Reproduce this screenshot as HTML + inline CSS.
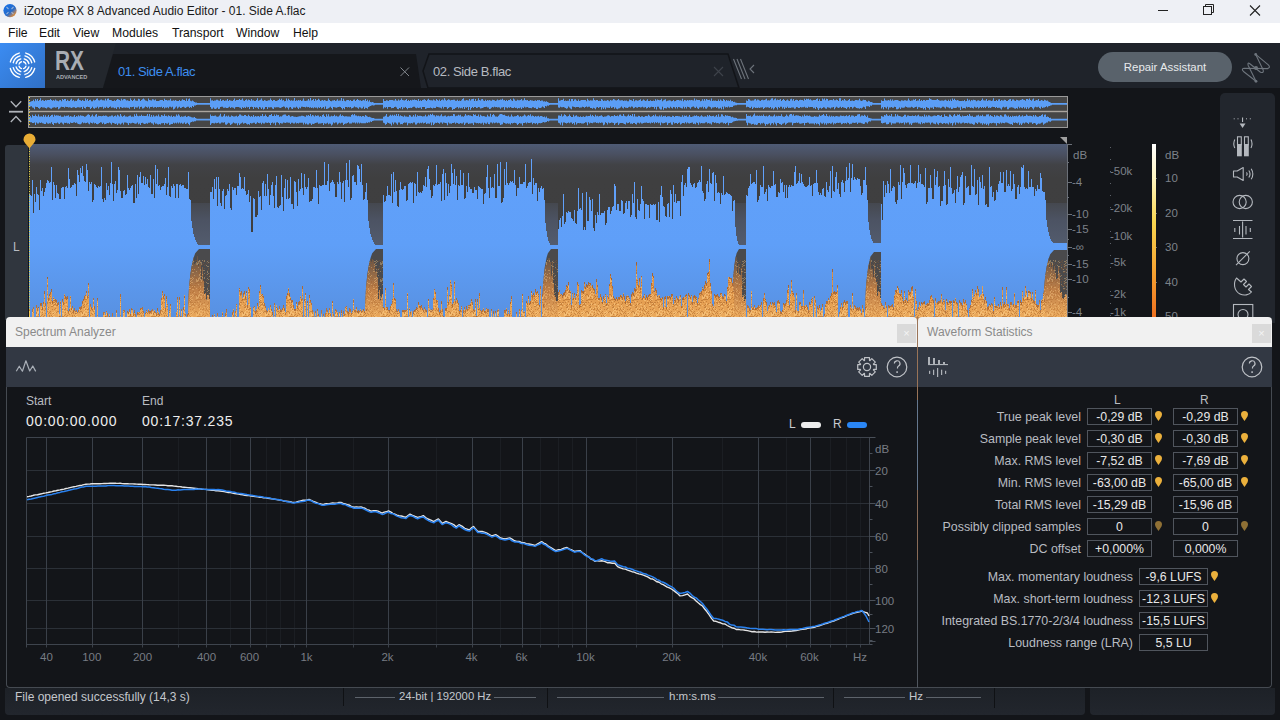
<!DOCTYPE html>
<html><head><meta charset="utf-8">
<style>
*{margin:0;padding:0;box-sizing:border-box}
html,body{width:1280px;height:720px;overflow:hidden;background:#131519;font-family:"Liberation Sans",sans-serif}
.a{position:absolute}
#title{left:0;top:0;width:1280px;height:23px;background:#eef0f5;color:#1a1a1a;font-size:12px}
#menu{left:0;top:23px;width:1280px;height:20px;background:#fff;color:#111;font-size:12.2px}
#menu span{position:absolute;top:3px}
#hdr{left:0;top:43px;width:1280px;height:45px;background:#1f232a}
.ptitle{background:#f1f1f1;color:#8a8a8a;font-size:12px}
.ptool{background:#323843}
.pbody{background:#131519}
.lbl{position:absolute;color:#b9bcc1;font-size:12.4px;text-align:right;white-space:nowrap}
.box{position:absolute;border:1px solid #50555d;color:#e8e8e8;font-size:12.3px;text-align:center;height:17px;line-height:16px;background:#131519}
</style></head><body>
<div id="title" class="a">
  <span class="a" style="left:24px;top:4px">iZotope RX 8 Advanced Audio Editor - 01. Side A.flac</span>
</div>
<div id="menu" class="a">
  <span style="left:8px">File</span><span style="left:39px">Edit</span><span style="left:73px">View</span><span style="left:112px">Modules</span><span style="left:172px">Transport</span><span style="left:236px">Window</span><span style="left:293px">Help</span>
</div>
<div id="hdr" class="a"></div>
<!-- title icon -->
<svg class="a" style="left:0;top:0" width="22" height="22" viewBox="0 0 22 22"><defs><linearGradient id="ti" x1="0.2" y1="0.2" x2="0.85" y2="0.9"><stop offset="0" stop-color="#1a6fe0"/><stop offset="0.55" stop-color="#2a6cc8"/><stop offset="0.8" stop-color="#a08070"/><stop offset="1" stop-color="#e88a20"/></linearGradient></defs>
<circle cx="10" cy="10.6" r="6.6" fill="url(#ti)"/><g stroke="#c8d0dc" stroke-width="1.1" opacity="0.7" fill="none"><path d="M6.5 7 L8.5 9 M13.5 7 L11.5 9 M6.5 14.2 L8.5 12.2 M13.5 14.2 L11.5 12.2"/></g></svg>
<svg class="a" style="left:1150px;top:0" width="130" height="22" viewBox="1150 0 130 22">
<line x1="1158" y1="10.5" x2="1168" y2="10.5" stroke="#222" stroke-width="1"/>
<rect x="1203.5" y="6.5" width="8" height="8" fill="none" stroke="#222" stroke-width="1"/>
<path d="M1205.5 6.5 V4.5 H1213.5 V12.5 H1211.5" fill="none" stroke="#222" stroke-width="1"/>
<path d="M1250 5.5 L1260 15.5 M1260 5.5 L1250 15.5" stroke="#222" stroke-width="1.1"/>
</svg>
<!-- logo -->
<div class="a" style="left:0;top:43px;width:45px;height:45px;background:linear-gradient(135deg,#3b8cf2,#3070c6)"></div>
<svg class="a" style="left:0;top:43px" width="45" height="45" viewBox="0 0 45 45"><g fill="none" stroke="#fff" stroke-width="1.35" stroke-linecap="round"><path d="M25.94 21.15 A3.6 3.6 0 0 0 23.55 18.76"/><path d="M21.45 18.76 A3.6 3.6 0 0 0 19.06 21.15"/><path d="M19.06 23.25 A3.6 3.6 0 0 0 21.45 25.64"/><path d="M23.55 25.64 A3.6 3.6 0 0 0 25.94 23.25"/><path d="M28.88 20.49 A6.6 6.6 0 0 0 24.21 15.82"/><path d="M20.79 15.82 A6.6 6.6 0 0 0 16.12 20.49"/><path d="M16.12 23.91 A6.6 6.6 0 0 0 20.79 28.58"/><path d="M24.21 28.58 A6.6 6.6 0 0 0 28.88 23.91"/><path d="M31.77 19.72 A9.6 9.6 0 0 0 24.98 12.93"/><path d="M20.02 12.93 A9.6 9.6 0 0 0 13.23 19.72"/><path d="M13.23 24.68 A9.6 9.6 0 0 0 20.02 31.47"/><path d="M24.98 31.47 A9.6 9.6 0 0 0 31.77 24.68"/><path d="M34.67 18.94 A12.6 12.6 0 0 0 25.76 10.03"/><path d="M19.24 10.03 A12.6 12.6 0 0 0 10.33 18.94"/><path d="M10.33 25.46 A12.6 12.6 0 0 0 19.24 34.37"/><path d="M25.76 34.37 A12.6 12.6 0 0 0 34.67 25.46"/></g></svg>
<!-- RX panel -->
<svg class="a" style="left:45px;top:43px" width="720" height="45" viewBox="45 43 720 45">
<polygon points="45,43 116,43 103,88 45,88" fill="#23272d"/>
<polygon points="113,54 416,54 421,88 103,88" fill="#15171b"/>
<polygon points="429,54 728,54 739,88 428,88 423,71" fill="#1f232a" stroke="#121418" stroke-width="1.5"/>
<g stroke="#80858b" stroke-width="1"><path d="M400.5 67.5 L409 76 M409 67.5 L400.5 76"/></g>
<g stroke="#3e434b" stroke-width="1.1"><path d="M714 67 L723 76 M723 67 L714 76"/></g>
<g stroke="#6d737b" stroke-width="1.1"><path d="M733.5 59 L741.5 79 M737 59 L745 79 M740.5 59 L748.5 79"/><path d="M754 65 L750 69 L754 73" fill="none"/></g>
</svg>
<div class="a" style="left:55px;top:47px;color:#a9adb3;font-weight:bold;font-size:27.5px;line-height:27px;transform:scaleX(0.76);transform-origin:0 0">RX</div>
<div class="a" style="left:56px;top:74px;color:#a9adb3;font-weight:bold;font-size:6px;line-height:7px;transform:scaleX(0.93);transform-origin:0 0">ADVANCED</div>
<div class="a" style="left:118px;top:64px;color:#3d8ef0;font-size:13px;letter-spacing:-0.4px">01. Side A.flac</div>
<div class="a" style="left:433px;top:64px;color:#b7bbc1;font-size:13px;letter-spacing:-0.4px">02. Side B.flac</div>
<div class="a" style="left:1098px;top:52px;width:134px;height:30px;border-radius:15px;background:#59626b;color:#e8eaec;font-size:11.4px;text-align:center;line-height:31px">Repair Assistant</div>
<svg class="a" style="left:1236px;top:48px" width="40" height="40" viewBox="1236 48 40 40">
<g fill="none" stroke="#6e757d" stroke-width="1.1" stroke-linejoin="round">
<path d="M1255.7 54.4 L1268.3 64.8 Q1271 67.6 1267.5 68.6 L1244 68.2 Q1241 68.6 1243.5 71.5 L1256 81.3"/>
<path d="M1255.7 54.4 L1263.2 70 Q1264 73.5 1260.5 72.2 L1249.5 63.5 Q1247.3 62 1248.2 65.5 L1256 81.3"/>
</g>
<g fill="#6e757d"><circle cx="1256" cy="68" r="2"/><circle cx="1255.7" cy="54.4" r="1.4"/><circle cx="1256" cy="81.3" r="1.4"/></g>
</svg>
<svg class="a" style="left:0;top:0" width="1280" height="330" viewBox="0 0 1280 330">
<defs>
<linearGradient id="bg" x1="0" y1="144" x2="0" y2="317" gradientUnits="userSpaceOnUse">
<stop offset="0" stop-color="#4f5b75"/><stop offset="0.06" stop-color="#4a5061"/><stop offset="0.12" stop-color="#414246"/><stop offset="0.2" stop-color="#3f3f40"/><stop offset="1" stop-color="#3e3e3f"/></linearGradient>
<linearGradient id="blu" x1="0" y1="144" x2="0" y2="317" gradientUnits="userSpaceOnUse">
<stop offset="0" stop-color="#61a1fb"/><stop offset="0.58" stop-color="#5f9ff8"/><stop offset="1" stop-color="#5891e2"/></linearGradient>
<linearGradient id="ugr" x1="0" y1="203" x2="0" y2="246" gradientUnits="userSpaceOnUse">
<stop offset="0" stop-color="#45484f"/><stop offset="0.4" stop-color="#4c5363"/><stop offset="1" stop-color="#535c6e"/></linearGradient>
<linearGradient id="org" x1="0" y1="270" x2="0" y2="317" gradientUnits="userSpaceOnUse">
<stop offset="0" stop-color="#a0643a"/><stop offset="1" stop-color="#b87640"/></linearGradient>
<linearGradient id="org2" x1="0" y1="270" x2="0" y2="317" gradientUnits="userSpaceOnUse">
<stop offset="0" stop-color="#d68c44"/><stop offset="0.6" stop-color="#e49d50"/><stop offset="1" stop-color="#eaa95c"/></linearGradient>
<linearGradient id="worg" x1="0" y1="249" x2="0" y2="317" gradientUnits="userSpaceOnUse">
<stop offset="0" stop-color="#4e4a48"/><stop offset="0.25" stop-color="#7a5e48"/><stop offset="0.6" stop-color="#c08048"/><stop offset="1" stop-color="#eaa85c"/></linearGradient>
<pattern id="spk" width="23" height="17" patternUnits="userSpaceOnUse"><rect x="0" y="0" width="1" height="1" fill="#ffd48e" opacity="0.5"/><rect x="5" y="0" width="1" height="1" fill="#a05a22" opacity="0.45"/><rect x="6" y="0" width="1" height="1" fill="#a05a22" opacity="0.45"/><rect x="8" y="0" width="1" height="1" fill="#ffd48e" opacity="0.5"/><rect x="9" y="0" width="1" height="1" fill="#ffd48e" opacity="0.5"/><rect x="15" y="0" width="1" height="1" fill="#a05a22" opacity="0.45"/><rect x="21" y="0" width="1" height="1" fill="#a05a22" opacity="0.45"/><rect x="1" y="1" width="1" height="1" fill="#ffd48e" opacity="0.5"/><rect x="2" y="1" width="1" height="1" fill="#a05a22" opacity="0.45"/><rect x="14" y="1" width="1" height="1" fill="#a05a22" opacity="0.45"/><rect x="15" y="1" width="1" height="1" fill="#a05a22" opacity="0.45"/><rect x="16" y="1" width="1" height="1" fill="#ffd48e" opacity="0.5"/><rect x="20" y="1" width="1" height="1" fill="#ffd48e" opacity="0.5"/><rect x="0" y="2" width="1" height="1" fill="#ffd48e" opacity="0.5"/><rect x="9" y="2" width="1" height="1" fill="#a05a22" opacity="0.45"/><rect x="15" y="2" width="1" height="1" fill="#ffd48e" opacity="0.5"/><rect x="18" y="2" width="1" height="1" fill="#ffd48e" opacity="0.5"/><rect x="19" y="2" width="1" height="1" fill="#a05a22" opacity="0.45"/><rect x="22" y="2" width="1" height="1" fill="#a05a22" opacity="0.45"/><rect x="2" y="3" width="1" height="1" fill="#a05a22" opacity="0.45"/><rect x="3" y="3" width="1" height="1" fill="#ffd48e" opacity="0.5"/><rect x="6" y="3" width="1" height="1" fill="#a05a22" opacity="0.45"/><rect x="8" y="3" width="1" height="1" fill="#a05a22" opacity="0.45"/><rect x="10" y="3" width="1" height="1" fill="#ffd48e" opacity="0.5"/><rect x="15" y="3" width="1" height="1" fill="#ffd48e" opacity="0.5"/><rect x="16" y="3" width="1" height="1" fill="#a05a22" opacity="0.45"/><rect x="18" y="3" width="1" height="1" fill="#a05a22" opacity="0.45"/><rect x="19" y="3" width="1" height="1" fill="#a05a22" opacity="0.45"/><rect x="22" y="3" width="1" height="1" fill="#a05a22" opacity="0.45"/><rect x="0" y="4" width="1" height="1" fill="#a05a22" opacity="0.45"/><rect x="2" y="4" width="1" height="1" fill="#ffd48e" opacity="0.5"/><rect x="16" y="4" width="1" height="1" fill="#ffd48e" opacity="0.5"/><rect x="17" y="4" width="1" height="1" fill="#ffd48e" opacity="0.5"/><rect x="21" y="4" width="1" height="1" fill="#a05a22" opacity="0.45"/><rect x="1" y="5" width="1" height="1" fill="#a05a22" opacity="0.45"/><rect x="4" y="5" width="1" height="1" fill="#a05a22" opacity="0.45"/><rect x="8" y="5" width="1" height="1" fill="#ffd48e" opacity="0.5"/><rect x="11" y="5" width="1" height="1" fill="#a05a22" opacity="0.45"/><rect x="12" y="5" width="1" height="1" fill="#a05a22" opacity="0.45"/><rect x="15" y="5" width="1" height="1" fill="#ffd48e" opacity="0.5"/><rect x="18" y="5" width="1" height="1" fill="#ffd48e" opacity="0.5"/><rect x="20" y="5" width="1" height="1" fill="#ffd48e" opacity="0.5"/><rect x="0" y="6" width="1" height="1" fill="#ffd48e" opacity="0.5"/><rect x="3" y="6" width="1" height="1" fill="#a05a22" opacity="0.45"/><rect x="6" y="6" width="1" height="1" fill="#ffd48e" opacity="0.5"/><rect x="7" y="6" width="1" height="1" fill="#ffd48e" opacity="0.5"/><rect x="9" y="6" width="1" height="1" fill="#ffd48e" opacity="0.5"/><rect x="10" y="6" width="1" height="1" fill="#a05a22" opacity="0.45"/><rect x="13" y="6" width="1" height="1" fill="#a05a22" opacity="0.45"/><rect x="14" y="6" width="1" height="1" fill="#ffd48e" opacity="0.5"/><rect x="15" y="6" width="1" height="1" fill="#ffd48e" opacity="0.5"/><rect x="19" y="6" width="1" height="1" fill="#a05a22" opacity="0.45"/><rect x="20" y="6" width="1" height="1" fill="#ffd48e" opacity="0.5"/><rect x="1" y="7" width="1" height="1" fill="#ffd48e" opacity="0.5"/><rect x="2" y="7" width="1" height="1" fill="#a05a22" opacity="0.45"/><rect x="4" y="7" width="1" height="1" fill="#a05a22" opacity="0.45"/><rect x="7" y="7" width="1" height="1" fill="#a05a22" opacity="0.45"/><rect x="8" y="7" width="1" height="1" fill="#ffd48e" opacity="0.5"/><rect x="12" y="7" width="1" height="1" fill="#ffd48e" opacity="0.5"/><rect x="13" y="7" width="1" height="1" fill="#a05a22" opacity="0.45"/><rect x="14" y="7" width="1" height="1" fill="#ffd48e" opacity="0.5"/><rect x="16" y="7" width="1" height="1" fill="#ffd48e" opacity="0.5"/><rect x="17" y="7" width="1" height="1" fill="#ffd48e" opacity="0.5"/><rect x="22" y="7" width="1" height="1" fill="#a05a22" opacity="0.45"/><rect x="0" y="8" width="1" height="1" fill="#a05a22" opacity="0.45"/><rect x="7" y="8" width="1" height="1" fill="#ffd48e" opacity="0.5"/><rect x="12" y="8" width="1" height="1" fill="#ffd48e" opacity="0.5"/><rect x="13" y="8" width="1" height="1" fill="#ffd48e" opacity="0.5"/><rect x="14" y="8" width="1" height="1" fill="#ffd48e" opacity="0.5"/><rect x="15" y="8" width="1" height="1" fill="#a05a22" opacity="0.45"/><rect x="17" y="8" width="1" height="1" fill="#ffd48e" opacity="0.5"/><rect x="19" y="8" width="1" height="1" fill="#a05a22" opacity="0.45"/><rect x="3" y="9" width="1" height="1" fill="#a05a22" opacity="0.45"/><rect x="5" y="9" width="1" height="1" fill="#a05a22" opacity="0.45"/><rect x="6" y="9" width="1" height="1" fill="#ffd48e" opacity="0.5"/><rect x="12" y="9" width="1" height="1" fill="#ffd48e" opacity="0.5"/><rect x="13" y="9" width="1" height="1" fill="#ffd48e" opacity="0.5"/><rect x="17" y="9" width="1" height="1" fill="#ffd48e" opacity="0.5"/><rect x="18" y="9" width="1" height="1" fill="#a05a22" opacity="0.45"/><rect x="21" y="9" width="1" height="1" fill="#a05a22" opacity="0.45"/><rect x="3" y="10" width="1" height="1" fill="#a05a22" opacity="0.45"/><rect x="6" y="10" width="1" height="1" fill="#a05a22" opacity="0.45"/><rect x="7" y="10" width="1" height="1" fill="#ffd48e" opacity="0.5"/><rect x="8" y="10" width="1" height="1" fill="#ffd48e" opacity="0.5"/><rect x="13" y="10" width="1" height="1" fill="#a05a22" opacity="0.45"/><rect x="14" y="10" width="1" height="1" fill="#a05a22" opacity="0.45"/><rect x="15" y="10" width="1" height="1" fill="#a05a22" opacity="0.45"/><rect x="16" y="10" width="1" height="1" fill="#a05a22" opacity="0.45"/><rect x="17" y="10" width="1" height="1" fill="#a05a22" opacity="0.45"/><rect x="20" y="10" width="1" height="1" fill="#a05a22" opacity="0.45"/><rect x="22" y="10" width="1" height="1" fill="#ffd48e" opacity="0.5"/><rect x="0" y="11" width="1" height="1" fill="#ffd48e" opacity="0.5"/><rect x="1" y="11" width="1" height="1" fill="#ffd48e" opacity="0.5"/><rect x="5" y="11" width="1" height="1" fill="#a05a22" opacity="0.45"/><rect x="6" y="11" width="1" height="1" fill="#ffd48e" opacity="0.5"/><rect x="7" y="11" width="1" height="1" fill="#a05a22" opacity="0.45"/><rect x="11" y="11" width="1" height="1" fill="#a05a22" opacity="0.45"/><rect x="12" y="11" width="1" height="1" fill="#a05a22" opacity="0.45"/><rect x="3" y="12" width="1" height="1" fill="#ffd48e" opacity="0.5"/><rect x="6" y="12" width="1" height="1" fill="#a05a22" opacity="0.45"/><rect x="14" y="12" width="1" height="1" fill="#ffd48e" opacity="0.5"/><rect x="16" y="12" width="1" height="1" fill="#a05a22" opacity="0.45"/><rect x="1" y="13" width="1" height="1" fill="#a05a22" opacity="0.45"/><rect x="3" y="13" width="1" height="1" fill="#a05a22" opacity="0.45"/><rect x="4" y="13" width="1" height="1" fill="#a05a22" opacity="0.45"/><rect x="6" y="13" width="1" height="1" fill="#a05a22" opacity="0.45"/><rect x="7" y="13" width="1" height="1" fill="#a05a22" opacity="0.45"/><rect x="8" y="13" width="1" height="1" fill="#a05a22" opacity="0.45"/><rect x="10" y="13" width="1" height="1" fill="#a05a22" opacity="0.45"/><rect x="11" y="13" width="1" height="1" fill="#a05a22" opacity="0.45"/><rect x="13" y="13" width="1" height="1" fill="#a05a22" opacity="0.45"/><rect x="20" y="13" width="1" height="1" fill="#a05a22" opacity="0.45"/><rect x="1" y="14" width="1" height="1" fill="#a05a22" opacity="0.45"/><rect x="4" y="14" width="1" height="1" fill="#a05a22" opacity="0.45"/><rect x="5" y="14" width="1" height="1" fill="#ffd48e" opacity="0.5"/><rect x="8" y="14" width="1" height="1" fill="#ffd48e" opacity="0.5"/><rect x="9" y="14" width="1" height="1" fill="#a05a22" opacity="0.45"/><rect x="10" y="14" width="1" height="1" fill="#ffd48e" opacity="0.5"/><rect x="16" y="14" width="1" height="1" fill="#ffd48e" opacity="0.5"/><rect x="18" y="14" width="1" height="1" fill="#a05a22" opacity="0.45"/><rect x="0" y="15" width="1" height="1" fill="#a05a22" opacity="0.45"/><rect x="8" y="15" width="1" height="1" fill="#a05a22" opacity="0.45"/><rect x="9" y="15" width="1" height="1" fill="#a05a22" opacity="0.45"/><rect x="15" y="15" width="1" height="1" fill="#a05a22" opacity="0.45"/><rect x="16" y="15" width="1" height="1" fill="#ffd48e" opacity="0.5"/><rect x="17" y="15" width="1" height="1" fill="#a05a22" opacity="0.45"/><rect x="19" y="15" width="1" height="1" fill="#ffd48e" opacity="0.5"/><rect x="20" y="15" width="1" height="1" fill="#ffd48e" opacity="0.5"/><rect x="0" y="16" width="1" height="1" fill="#ffd48e" opacity="0.5"/><rect x="5" y="16" width="1" height="1" fill="#ffd48e" opacity="0.5"/><rect x="6" y="16" width="1" height="1" fill="#ffd48e" opacity="0.5"/><rect x="7" y="16" width="1" height="1" fill="#a05a22" opacity="0.45"/><rect x="10" y="16" width="1" height="1" fill="#a05a22" opacity="0.45"/><rect x="12" y="16" width="1" height="1" fill="#ffd48e" opacity="0.5"/><rect x="14" y="16" width="1" height="1" fill="#a05a22" opacity="0.45"/></pattern>
<clipPath id="wclip"><path d="M199,249 L210,249 L210,317 L188,317 L188.0,317.0 L188.0,312.8 L188.1,308.5 L188.2,304.2 L188.3,300.0 L188.6,295.8 L188.8,291.5 L189.1,287.2 L189.5,283.0 L189.9,278.8 L190.4,274.5 L191.0,270.2 L191.7,266.0 L192.6,261.8 L193.7,257.5 L195.2,253.2 L199.0,249.0 ZM376,249 L383,249 L383,317 L365,317 L365.0,317.0 L365.0,312.8 L365.1,308.5 L365.2,304.2 L365.3,300.0 L365.6,295.8 L365.8,291.5 L366.1,287.2 L366.5,283.0 L366.9,278.8 L367.4,274.5 L368.0,270.2 L368.7,266.0 L369.6,261.8 L370.7,257.5 L372.2,253.2 L376.0,249.0 ZM551,249 L558,249 L558,317 L542,317 L542.0,317.0 L542.0,312.8 L542.1,308.5 L542.2,304.2 L542.3,300.0 L542.5,295.8 L542.7,291.5 L542.9,287.2 L543.2,283.0 L543.6,278.8 L544.0,274.5 L544.5,270.2 L545.0,266.0 L545.8,261.8 L546.6,257.5 L547.9,253.2 L551.0,249.0 ZM739,249 L746,249 L746,317 L732,317 L732.0,317.0 L732.0,312.8 L732.1,308.5 L732.1,304.2 L732.2,300.0 L732.4,295.8 L732.5,291.5 L732.7,287.2 L732.9,283.0 L733.2,278.8 L733.5,274.5 L733.9,270.2 L734.4,266.0 L734.9,261.8 L735.6,257.5 L736.6,253.2 L739.0,249.0 ZM874,252 L881,252 L881,317 L865,317 L865.0,317.0 L865.0,312.9 L865.1,308.9 L865.2,304.8 L865.3,300.8 L865.5,296.7 L865.7,292.6 L865.9,288.6 L866.2,284.5 L866.6,280.4 L867.0,276.4 L867.5,272.3 L868.0,268.2 L868.8,264.2 L869.6,260.1 L870.9,256.1 L874.0,252.0 ZM1054,250 L1067,250 L1067,317 L1043,317 L1043.0,317.0 L1043.0,312.8 L1043.1,308.6 L1043.2,304.4 L1043.3,300.2 L1043.6,296.1 L1043.8,291.9 L1044.1,287.7 L1044.5,283.5 L1044.9,279.3 L1045.4,275.1 L1046.0,270.9 L1046.7,266.8 L1047.6,262.6 L1048.7,258.4 L1050.2,254.2 L1054.0,250.0 Z"/></clipPath>
<clipPath id="oclip"><path d="M29,317V309h1V317zM32,317V309h1V317zM33,317V307h1V317zM36,317V305h1V317zM37,317V308h1V317zM38,317V307h1V317zM40,317V303h1V317zM41,317V303h1V317zM42,317V307h1V317zM43,317V302h1V317zM44,317V291h1V317zM45,317V303h1V317zM47,317V277h1V317zM48,317V298h1V317zM49,317V294h1V317zM50,317V292h1V317zM51,317V289h1V317zM52,317V301h1V317zM53,317V297h1V317zM54,317V299h1V317zM55,317V299h1V317zM56,317V300h1V317zM57,317V303h1V317zM58,317V302h1V317zM59,317V314h1V317zM60,317V301h1V317zM62,317V299h1V317zM63,317V302h1V317zM64,317V294h1V317zM65,317V296h1V317zM66,317V297h1V317zM67,317V296h1V317zM68,317V311h1V317zM69,317V308h1V317zM70,317V296h1V317zM71,317V308h1V317zM72,317V306h1V317zM73,317V310h1V317zM74,317V308h1V317zM75,317V311h1V317zM76,317V310h1V317zM77,317V312h1V317zM78,317V310h1V317zM79,317V307h1V317zM80,317V307h1V317zM81,317V306h1V317zM82,317V301h1V317zM83,317V299h1V317zM84,317V296h1V317zM85,317V295h1V317zM86,317V291h1V317zM87,317V296h1V317zM88,317V283h1V317zM90,317V304h1V317zM91,317V307h1V317zM92,317V308h1V317zM93,317V298h1V317zM94,317V306h1V317zM97,317V298h1V317zM103,317V312h1V317zM104,317V312h1V317zM105,317V315h1V317zM106,317V311h1V317zM107,317V313h1V317zM109,317V314h1V317zM112,317V313h1V317zM116,317V310h1V317zM120,317V294h1V317zM123,317V310h1V317zM124,317V310h1V317zM127,317V311h1V317zM128,317V312h1V317zM129,317V309h1V317zM130,317V314h1V317zM131,317V308h1V317zM132,317V309h1V317zM133,317V313h1V317zM134,317V310h1V317zM135,317V314h1V317zM137,317V312h1V317zM138,317V312h1V317zM139,317V312h1V317zM140,317V308h1V317zM141,317V308h1V317zM142,317V307h1V317zM143,317V311h1V317zM145,317V313h1V317zM146,317V310h1V317zM147,317V312h1V317zM148,317V309h1V317zM149,317V311h1V317zM150,317V311h1V317zM151,317V310h1V317zM152,317V309h1V317zM153,317V311h1V317zM154,317V310h1V317zM155,317V312h1V317zM156,317V313h1V317zM157,317V308h1V317zM158,317V312h1V317zM159,317V314h1V317zM160,317V310h1V317zM161,317V298h1V317zM162,317V291h1V317zM163,317V296h1V317zM164,317V294h1V317zM165,317V308h1V317zM166,317V296h1V317zM167,317V304h1V317zM169,317V310h1V317zM170,317V304h1V317zM176,317V312h1V317zM177,317V297h1V317zM179,317V297h1V317zM180,317V316h1V317zM181,317V309h1V317zM183,317V307h1V317zM184,317V295h1V317zM185,317V313h1V317zM187,317V314h1V317zM188,317V313h1V317zM212,317V315h1V317zM214,317V314h1V317zM217,317V313h1V317zM222,317V312h1V317zM225,317V313h1V317zM226,317V309h1V317zM232,317V312h1V317zM233,317V309h1V317zM235,317V311h1V317zM236,317V304h1V317zM239,317V288h1V317zM240,317V292h1V317zM241,317V291h1V317zM242,317V298h1V317zM243,317V293h1V317zM244,317V291h1V317zM245,317V296h1V317zM246,317V291h1V317zM247,317V305h1V317zM248,317V287h1V317zM249,317V289h1V317zM250,317V307h1V317zM253,317V307h1V317zM254,317V306h1V317zM255,317V311h1V317zM256,317V309h1V317zM257,317V303h1V317zM258,317V307h1V317zM259,317V291h1V317zM260,317V285h1V317zM261,317V294h1V317zM262,317V294h1V317zM263,317V296h1V317zM264,317V303h1V317zM265,317V306h1V317zM266,317V310h1V317zM267,317V311h1V317zM268,317V308h1V317zM269,317V310h1V317zM270,317V305h1V317zM271,317V309h1V317zM272,317V312h1V317zM274,317V303h1V317zM276,317V305h1V317zM277,317V308h1V317zM278,317V310h1V317zM279,317V306h1V317zM280,317V309h1V317zM281,317V310h1V317zM282,317V308h1V317zM283,317V305h1V317zM284,317V308h1V317zM285,317V312h1V317zM286,317V296h1V317zM287,317V293h1V317zM288,317V288h1V317zM289,317V293h1V317zM290,317V297h1V317zM291,317V300h1V317zM292,317V300h1V317zM293,317V305h1V317zM294,317V309h1V317zM295,317V309h1V317zM296,317V302h1V317zM297,317V306h1V317zM298,317V302h1V317zM299,317V301h1V317zM300,317V296h1V317zM301,317V299h1V317zM302,317V286h1V317zM304,317V299h1V317zM305,317V293h1V317zM307,317V301h1V317zM309,317V295h1V317zM310,317V300h1V317zM311,317V303h1V317zM312,317V310h1V317zM313,317V312h1V317zM315,317V311h1V317zM317,317V309h1V317zM318,317V314h1V317zM321,317V310h1V317zM323,317V314h1V317zM325,317V313h1V317zM326,317V308h1V317zM327,317V310h1V317zM328,317V313h1V317zM329,317V308h1V317zM330,317V313h1V317zM332,317V301h1V317zM333,317V314h1V317zM335,317V309h1V317zM336,317V310h1V317zM337,317V312h1V317zM339,317V312h1V317zM341,317V310h1V317zM343,317V311h1V317zM344,317V314h1V317zM345,317V307h1V317zM346,317V306h1V317zM347,317V311h1V317zM348,317V312h1V317zM349,317V308h1V317zM350,317V309h1V317zM351,317V313h1V317zM352,317V311h1V317zM353,317V299h1V317zM354,317V310h1V317zM355,317V309h1V317zM356,317V307h1V317zM357,317V311h1V317zM358,317V310h1V317zM359,317V311h1V317zM360,317V309h1V317zM361,317V311h1V317zM362,317V310h1V317zM363,317V309h1V317zM364,317V311h1V317zM365,317V312h1V317zM366,317V309h1V317zM383,317V307h1V317zM384,317V308h1V317zM385,317V288h1V317zM386,317V307h1V317zM387,317V307h1V317zM388,317V310h1V317zM389,317V310h1V317zM390,317V306h1V317zM391,317V304h1V317zM392,317V299h1V317zM393,317V283h1V317zM394,317V298h1V317zM395,317V299h1V317zM396,317V309h1V317zM397,317V311h1V317zM398,317V309h1V317zM399,317V312h1V317zM402,317V310h1V317zM403,317V310h1V317zM404,317V310h1V317zM405,317V310h1V317zM406,317V310h1V317zM407,317V293h1V317zM409,317V308h1V317zM410,317V312h1V317zM411,317V311h1V317zM413,317V311h1V317zM414,317V310h1V317zM415,317V309h1V317zM416,317V307h1V317zM417,317V308h1V317zM418,317V302h1V317zM419,317V305h1V317zM420,317V306h1V317zM421,317V305h1V317zM422,317V308h1V317zM423,317V310h1V317zM424,317V307h1V317zM425,317V309h1V317zM426,317V310h1V317zM428,317V299h1V317zM429,317V308h1V317zM430,317V310h1V317zM431,317V309h1V317zM432,317V310h1V317zM433,317V298h1V317zM434,317V289h1V317zM435,317V292h1V317zM436,317V300h1V317zM437,317V300h1V317zM438,317V308h1V317zM439,317V312h1V317zM440,317V310h1V317zM441,317V301h1V317zM442,317V309h1V317zM443,317V316h1V317zM445,317V308h1V317zM446,317V308h1V317zM447,317V287h1V317zM448,317V302h1V317zM449,317V295h1V317zM450,317V280h1V317zM451,317V284h1V317zM452,317V304h1V317zM453,317V302h1V317zM454,317V281h1V317zM455,317V301h1V317zM456,317V298h1V317zM457,317V300h1V317zM458,317V303h1V317zM459,317V311h1V317zM460,317V310h1V317zM461,317V306h1V317zM463,317V310h1V317zM464,317V307h1V317zM465,317V310h1V317zM466,317V306h1V317zM467,317V309h1V317zM468,317V305h1V317zM469,317V305h1V317zM470,317V303h1V317zM471,317V299h1V317zM472,317V302h1V317zM473,317V309h1V317zM474,317V310h1V317zM475,317V299h1V317zM476,317V316h1V317zM477,317V299h1V317zM478,317V308h1V317zM479,317V293h1V317zM480,317V310h1V317zM481,317V311h1V317zM482,317V310h1V317zM483,317V308h1V317zM484,317V311h1V317zM485,317V310h1V317zM486,317V308h1V317zM487,317V309h1V317zM488,317V309h1V317zM491,317V309h1V317zM493,317V311h1V317zM495,317V311h1V317zM497,317V310h1V317zM498,317V309h1V317zM504,317V310h1V317zM505,317V310h1V317zM506,317V308h1V317zM507,317V314h1V317zM508,317V310h1V317zM509,317V314h1V317zM510,317V302h1V317zM511,317V296h1V317zM516,317V312h1V317zM519,317V309h1V317zM521,317V310h1V317zM522,317V294h1V317zM523,317V312h1V317zM524,317V311h1V317zM526,317V301h1V317zM527,317V303h1V317zM528,317V296h1V317zM529,317V303h1V317zM530,317V301h1V317zM531,317V291h1V317zM532,317V295h1V317zM533,317V293h1V317zM534,317V295h1V317zM535,317V289h1V317zM536,317V292h1V317zM537,317V291h1V317zM538,317V294h1V317zM539,317V305h1V317zM540,317V286h1V317zM542,317V294h1V317zM543,317V304h1V317zM558,317V292h1V317zM559,317V290h1V317zM560,317V294h1V317zM561,317V294h1V317zM562,317V295h1V317zM563,317V293h1V317zM564,317V292h1V317zM565,317V290h1V317zM566,317V285h1V317zM567,317V286h1V317zM568,317V282h1V317zM569,317V290h1V317zM570,317V291h1V317zM571,317V305h1V317zM572,317V293h1V317zM573,317V298h1V317zM574,317V293h1V317zM575,317V298h1V317zM576,317V294h1V317zM577,317V282h1V317zM578,317V284h1V317zM579,317V305h1V317zM580,317V304h1V317zM581,317V290h1V317zM582,317V291h1V317zM583,317V291h1V317zM584,317V282h1V317zM585,317V287h1V317zM586,317V284h1V317zM587,317V285h1V317zM588,317V282h1V317zM589,317V283h1V317zM590,317V283h1V317zM591,317V286h1V317zM592,317V285h1V317zM593,317V288h1V317zM594,317V289h1V317zM595,317V294h1V317zM596,317V279h1V317zM597,317V285h1V317zM598,317V298h1V317zM599,317V298h1V317zM600,317V294h1V317zM601,317V297h1V317zM602,317V302h1V317zM603,317V296h1V317zM604,317V298h1V317zM605,317V294h1V317zM606,317V303h1V317zM607,317V295h1V317zM608,317V297h1V317zM609,317V284h1V317zM610,317V274h1V317zM611,317V278h1V317zM612,317V286h1V317zM613,317V296h1V317zM614,317V298h1V317zM615,317V299h1V317zM616,317V297h1V317zM617,317V299h1V317zM618,317V297h1V317zM619,317V297h1V317zM620,317V295h1V317zM621,317V295h1V317zM622,317V297h1V317zM623,317V293h1V317zM624,317V296h1V317zM625,317V301h1V317zM626,317V296h1V317zM627,317V295h1V317zM628,317V296h1V317zM629,317V298h1V317zM630,317V303h1V317zM631,317V294h1V317zM632,317V292h1V317zM633,317V293h1V317zM634,317V288h1V317zM635,317V289h1V317zM636,317V262h1V317zM637,317V279h1V317zM638,317V285h1V317zM639,317V278h1V317zM640,317V287h1V317zM641,317V276h1V317zM642,317V298h1V317zM643,317V296h1V317zM644,317V294h1V317zM645,317V298h1V317zM646,317V295h1V317zM647,317V297h1V317zM648,317V295h1V317zM649,317V294h1V317zM650,317V294h1V317zM651,317V283h1V317zM652,317V273h1V317zM653,317V276h1V317zM654,317V291h1V317zM655,317V288h1V317zM656,317V290h1V317zM657,317V296h1V317zM658,317V295h1V317zM659,317V295h1V317zM660,317V298h1V317zM661,317V298h1V317zM662,317V297h1V317zM663,317V307h1V317zM664,317V297h1V317zM665,317V296h1V317zM666,317V307h1V317zM667,317V296h1V317zM668,317V296h1V317zM669,317V296h1V317zM670,317V297h1V317zM671,317V294h1V317zM672,317V294h1V317zM673,317V304h1V317zM674,317V298h1V317zM675,317V300h1V317zM676,317V296h1V317zM677,317V298h1V317zM678,317V299h1V317zM679,317V296h1V317zM680,317V295h1V317zM681,317V306h1V317zM682,317V298h1V317zM683,317V297h1V317zM684,317V297h1V317zM685,317V295h1V317zM686,317V294h1V317zM688,317V293h1V317zM689,317V295h1V317zM690,317V297h1V317zM691,317V295h1V317zM692,317V302h1V317zM693,317V296h1V317zM694,317V295h1V317zM695,317V296h1V317zM696,317V297h1V317zM697,317V303h1V317zM698,317V298h1V317zM699,317V293h1V317zM700,317V292h1V317zM701,317V291h1V317zM702,317V287h1V317zM703,317V289h1V317zM704,317V285h1V317zM705,317V281h1V317zM706,317V283h1V317zM707,317V273h1V317zM708,317V272h1V317zM709,317V259h1V317zM710,317V283h1V317zM711,317V291h1V317zM712,317V304h1V317zM713,317V306h1V317zM714,317V294h1V317zM715,317V295h1V317zM716,317V295h1V317zM717,317V294h1V317zM718,317V296h1V317zM719,317V297h1V317zM720,317V293h1V317zM721,317V293h1V317zM722,317V296h1V317zM723,317V297h1V317zM724,317V294h1V317zM725,317V295h1V317zM726,317V301h1V317zM727,317V287h1V317zM728,317V277h1V317zM729,317V277h1V317zM730,317V278h1V317zM731,317V278h1V317zM732,317V283h1V317zM733,317V290h1V317zM747,317V305h1V317zM748,317V306h1V317zM749,317V308h1V317zM750,317V310h1V317zM751,317V291h1V317zM752,317V307h1V317zM753,317V307h1V317zM754,317V305h1V317zM755,317V308h1V317zM756,317V308h1V317zM757,317V307h1V317zM758,317V305h1V317zM759,317V306h1V317zM760,317V305h1V317zM761,317V302h1V317zM763,317V298h1V317zM764,317V293h1V317zM765,317V299h1V317zM766,317V302h1V317zM767,317V311h1V317zM768,317V306h1V317zM769,317V305h1V317zM770,317V302h1V317zM771,317V305h1V317zM772,317V302h1V317zM773,317V303h1V317zM774,317V302h1V317zM775,317V306h1V317zM776,317V312h1V317zM777,317V301h1V317zM778,317V300h1V317zM779,317V302h1V317zM780,317V311h1V317zM781,317V312h1V317zM782,317V310h1V317zM783,317V303h1V317zM784,317V304h1V317zM785,317V303h1V317zM786,317V300h1V317zM787,317V290h1V317zM788,317V285h1V317zM789,317V305h1V317zM790,317V294h1V317zM791,317V280h1V317zM792,317V291h1V317zM793,317V293h1V317zM794,317V297h1V317zM795,317V310h1V317zM796,317V293h1V317zM797,317V311h1V317zM798,317V311h1V317zM799,317V302h1V317zM800,317V302h1V317zM801,317V306h1V317zM802,317V306h1V317zM803,317V290h1V317zM804,317V306h1V317zM805,317V305h1V317zM806,317V305h1V317zM807,317V307h1V317zM808,317V310h1V317zM809,317V302h1V317zM810,317V304h1V317zM811,317V299h1V317zM812,317V297h1V317zM814,317V296h1V317zM815,317V300h1V317zM817,317V306h1V317zM818,317V308h1V317zM819,317V305h1V317zM820,317V311h1V317zM821,317V308h1V317zM822,317V304h1V317zM824,317V314h1V317zM825,317V304h1V317zM826,317V301h1V317zM827,317V301h1V317zM828,317V298h1V317zM829,317V300h1V317zM830,317V296h1V317zM831,317V293h1V317zM832,317V269h1V317zM833,317V292h1V317zM834,317V291h1V317zM835,317V292h1V317zM836,317V292h1V317zM837,317V285h1V317zM839,317V312h1V317zM840,317V307h1V317zM841,317V303h1V317zM842,317V307h1V317zM843,317V302h1V317zM844,317V300h1V317zM845,317V302h1V317zM846,317V301h1V317zM847,317V301h1V317zM850,317V305h1V317zM851,317V308h1V317zM852,317V293h1V317zM853,317V309h1V317zM854,317V305h1V317zM855,317V306h1V317zM856,317V308h1V317zM857,317V307h1V317zM858,317V308h1V317zM859,317V307h1V317zM860,317V309h1V317zM861,317V313h1V317zM862,317V305h1V317zM863,317V309h1V317zM865,317V307h1V317zM866,317V294h1V317zM881,317V303h1V317zM882,317V305h1V317zM883,317V306h1V317zM884,317V308h1V317zM885,317V302h1V317zM886,317V306h1V317zM888,317V305h1V317zM889,317V306h1V317zM890,317V306h1V317zM891,317V305h1V317zM892,317V304h1V317zM893,317V307h1V317zM894,317V295h1V317zM895,317V290h1V317zM896,317V290h1V317zM897,317V286h1V317zM898,317V288h1V317zM899,317V293h1V317zM900,317V294h1V317zM901,317V290h1V317zM902,317V297h1V317zM903,317V301h1V317zM904,317V291h1V317zM905,317V300h1V317zM906,317V298h1V317zM907,317V301h1V317zM908,317V290h1V317zM909,317V292h1V317zM910,317V292h1V317zM911,317V287h1V317zM912,317V286h1V317zM913,317V296h1V317zM915,317V289h1V317zM916,317V301h1V317zM917,317V310h1V317zM918,317V307h1V317zM919,317V302h1V317zM920,317V306h1V317zM921,317V302h1V317zM922,317V303h1V317zM923,317V302h1V317zM924,317V301h1V317zM925,317V305h1V317zM926,317V304h1V317zM927,317V303h1V317zM928,317V303h1V317zM929,317V300h1V317zM930,317V296h1V317zM931,317V295h1V317zM932,317V298h1V317zM933,317V300h1V317zM935,317V298h1V317zM936,317V303h1V317zM937,317V302h1V317zM938,317V301h1V317zM939,317V301h1V317zM940,317V300h1V317zM941,317V294h1V317zM942,317V302h1V317zM943,317V299h1V317zM944,317V300h1V317zM945,317V310h1V317zM946,317V299h1V317zM947,317V302h1V317zM948,317V303h1V317zM949,317V300h1V317zM950,317V301h1V317zM951,317V301h1V317zM953,317V300h1V317zM954,317V301h1V317zM955,317V298h1V317zM956,317V302h1V317zM957,317V303h1V317zM959,317V300h1V317zM960,317V302h1V317zM961,317V303h1V317zM962,317V305h1V317zM963,317V299h1V317zM964,317V302h1V317zM965,317V300h1V317zM966,317V304h1V317zM967,317V310h1V317zM969,317V308h1V317zM970,317V305h1V317zM971,317V300h1V317zM972,317V289h1V317zM973,317V297h1V317zM974,317V294h1V317zM975,317V290h1V317zM976,317V293h1V317zM977,317V286h1V317zM978,317V289h1V317zM979,317V297h1V317zM980,317V295h1V317zM981,317V294h1V317zM982,317V286h1V317zM983,317V294h1V317zM984,317V300h1V317zM985,317V297h1V317zM986,317V301h1V317zM987,317V307h1V317zM988,317V306h1V317zM989,317V304h1V317zM990,317V305h1V317zM991,317V303h1V317zM992,317V304h1V317zM993,317V311h1V317zM994,317V297h1V317zM995,317V305h1V317zM996,317V306h1V317zM997,317V306h1V317zM998,317V304h1V317zM999,317V307h1V317zM1000,317V302h1V317zM1001,317V306h1V317zM1002,317V287h1V317zM1003,317V304h1V317zM1004,317V302h1V317zM1005,317V304h1V317zM1006,317V287h1V317zM1007,317V304h1V317zM1008,317V304h1V317zM1009,317V308h1V317zM1010,317V302h1V317zM1011,317V302h1V317zM1012,317V305h1V317zM1013,317V304h1V317zM1014,317V293h1V317zM1015,317V305h1V317zM1016,317V305h1V317zM1017,317V301h1V317zM1018,317V300h1V317zM1020,317V300h1V317zM1021,317V302h1V317zM1022,317V291h1V317zM1023,317V298h1V317zM1024,317V296h1V317zM1025,317V286h1V317zM1026,317V291h1V317zM1027,317V297h1V317zM1028,317V290h1V317zM1029,317V291h1V317zM1030,317V292h1V317zM1031,317V298h1V317zM1032,317V292h1V317zM1033,317V300h1V317zM1034,317V301h1V317zM1035,317V290h1V317zM1036,317V304h1V317zM1037,317V305h1V317zM1038,317V305h1V317zM1039,317V300h1V317zM1040,317V310h1V317zM1041,317V300h1V317zM1042,317V299h1V317zM1043,317V293h1V317zM1044,317V299h1V317z"/></clipPath>
</defs>
<rect x="29" y="144" width="1038" height="173" fill="url(#bg)"/>
<rect x="190" y="203" width="20" height="43" fill="url(#ugr)"/><rect x="367" y="203" width="16" height="43" fill="url(#ugr)"/><rect x="544" y="203" width="14" height="43" fill="url(#ugr)"/><rect x="734" y="203" width="12" height="43" fill="url(#ugr)"/><rect x="867" y="203" width="14" height="41" fill="url(#ugr)"/><rect x="1045" y="203" width="22" height="41" fill="url(#ugr)"/>
<path d="M29,317 L29,194 30,194 30,195 31,195 31,196 32,196 32,180 33,180 33,213 34,213 34,194 35,194 35,202 36,202 36,187 37,187 37,194 38,194 38,195 39,195 39,210 40,210 40,180 41,180 41,191 42,191 42,188 43,188 43,196 44,196 44,192 45,192 45,188 46,188 46,183 47,183 47,180 48,180 48,181 49,181 49,183 50,183 50,182 51,182 51,167 52,167 52,200 53,200 53,182 54,182 54,185 55,185 55,198 56,198 56,185 57,185 57,193 58,193 58,194 59,194 59,199 60,199 60,199 61,199 61,188 62,188 62,187 63,187 63,187 64,187 64,199 65,199 65,187 66,187 66,186 67,186 67,188 68,188 68,168 69,168 69,179 70,179 70,188 71,188 71,187 72,187 72,185 73,185 73,185 74,185 74,183 75,183 75,184 76,184 76,196 77,196 77,170 78,170 78,175 79,175 79,182 80,182 80,168 81,168 81,173 82,173 82,166 83,166 83,176 84,176 84,181 85,181 85,182 86,182 86,164 87,164 87,170 88,170 88,191 89,191 89,182 90,182 90,184 91,184 91,182 92,182 92,202 93,202 93,200 94,200 94,184 95,184 95,185 96,185 96,187 97,187 97,188 98,188 98,186 99,186 99,187 100,187 100,186 101,186 101,167 102,167 102,199 103,199 103,202 104,202 104,198 105,198 105,200 106,200 106,183 107,183 107,190 108,190 108,186 109,186 109,195 110,195 110,183 111,183 111,162 112,162 112,184 113,184 113,201 114,201 114,184 115,184 115,181 116,181 116,193 117,193 117,190 118,190 118,167 119,167 119,170 120,170 120,191 121,191 121,198 122,198 122,198 123,198 123,191 124,191 124,190 125,190 125,195 126,195 126,194 127,194 127,175 128,175 128,188 129,188 129,190 130,190 130,188 131,188 131,186 132,186 132,185 133,185 133,203 134,203 134,203 135,203 135,184 136,184 136,198 137,198 137,175 138,175 138,194 139,194 139,177 140,177 140,172 141,172 141,183 142,183 142,183 143,183 143,176 144,176 144,185 145,185 145,177 146,177 146,184 147,184 147,179 148,179 148,187 149,187 149,188 150,188 150,175 151,175 151,194 152,194 152,194 153,194 153,179 154,179 154,198 155,198 155,165 156,165 156,184 157,184 157,169 158,169 158,186 159,186 159,185 160,185 160,190 161,190 161,187 162,187 162,186 163,186 163,186 164,186 164,184 165,184 165,178 166,178 166,195 167,195 167,187 168,187 168,167 169,167 169,196 170,196 170,197 171,197 171,186 172,186 172,188 173,188 173,184 174,184 174,186 175,186 175,198 176,198 176,184 177,184 177,184 178,184 178,198 179,198 179,185 180,185 180,184 181,184 181,186 182,186 182,185 183,185 183,185 184,185 184,188 185,188 185,188 186,188 186,189 187,189 187,189 188,189 188,172 189,172 189,199 190,199 190,200 191,200 191,221 192,221 192,228 193,228 193,234 194,234 194,237 195,237 195,240 196,240 196,242 197,242 197,244 198,244 198,245 199,245 199,245 200,245 200,245 201,245 201,245 202,245 202,245 203,245 203,245 204,245 204,245 205,245 205,245 206,245 206,245 207,245 207,245 208,245 208,245 209,245 209,245 210,245 210,192 211,192 211,192 212,192 212,187 213,187 213,199 214,199 214,179 215,179 215,189 216,189 216,177 217,177 217,206 218,206 218,177 219,177 219,189 220,189 220,203 221,203 221,206 222,206 222,191 223,191 223,189 224,189 224,209 225,209 225,196 226,196 226,195 227,195 227,189 228,189 228,191 229,191 229,184 230,184 230,208 231,208 231,210 232,210 232,187 233,187 233,190 234,190 234,188 235,188 235,188 236,188 236,195 237,195 237,186 238,186 238,186 239,186 239,173 240,173 240,177 241,177 241,189 242,189 242,188 243,188 243,189 244,189 244,177 245,177 245,191 246,191 246,195 247,195 247,194 248,194 248,190 249,190 249,202 250,202 250,196 251,196 251,232 252,232 252,232 253,232 253,198 254,198 254,199 255,199 255,217 256,217 256,217 257,217 257,215 258,215 258,191 259,191 259,197 260,197 260,196 261,196 261,210 262,210 262,183 263,183 263,181 264,181 264,196 265,196 265,184 266,184 266,196 267,196 267,174 268,174 268,189 269,189 269,205 270,205 270,195 271,195 271,185 272,185 272,182 273,182 273,196 274,196 274,208 275,208 275,185 276,185 276,176 277,176 277,207 278,207 278,208 279,208 279,206 280,206 280,205 281,205 281,175 282,175 282,197 283,197 283,211 284,211 284,188 285,188 285,179 286,179 286,199 287,199 287,180 288,180 288,199 289,199 289,198 290,198 290,177 291,177 291,204 292,204 292,204 293,204 293,209 294,209 294,181 295,181 295,182 296,182 296,192 297,192 297,206 298,206 298,179 299,179 299,191 300,191 300,189 301,189 301,173 302,173 302,188 303,188 303,195 304,195 304,174 305,174 305,187 306,187 306,189 307,189 307,187 308,187 308,178 309,178 309,202 310,202 310,201 311,201 311,201 312,201 312,199 313,199 313,187 314,187 314,187 315,187 315,188 316,188 316,170 317,170 317,188 318,188 318,204 319,204 319,185 320,185 320,186 321,186 321,186 322,186 322,185 323,185 323,185 324,185 324,162 325,162 325,185 326,185 326,185 327,185 327,181 328,181 328,164 329,164 329,191 330,191 330,183 331,183 331,182 332,182 332,180 333,180 333,182 334,182 334,184 335,184 335,197 336,197 336,197 337,197 337,182 338,182 338,184 339,184 339,172 340,172 340,182 341,182 341,199 342,199 342,183 343,183 343,181 344,181 344,202 345,202 345,180 346,180 346,163 347,163 347,180 348,180 348,187 349,187 349,160 350,160 350,200 351,200 351,198 352,198 352,176 353,176 353,175 354,175 354,182 355,182 355,182 356,182 356,185 357,185 357,165 358,165 358,166 359,166 359,169 360,169 360,182 361,182 361,164 362,164 362,185 363,185 363,200 364,200 364,199 365,199 365,192 366,192 366,183 367,183 367,200 368,200 368,221 369,221 369,228 370,228 370,234 371,234 371,237 372,237 372,240 373,240 373,242 374,242 374,244 375,244 375,245 376,245 376,245 377,245 377,245 378,245 378,245 379,245 379,245 380,245 380,245 381,245 381,245 382,245 382,245 383,245 383,195 384,195 384,202 385,202 385,201 386,201 386,196 387,196 387,186 388,186 388,195 389,195 389,195 390,195 390,196 391,196 391,174 392,174 392,203 393,203 393,172 394,172 394,192 395,192 395,180 396,180 396,191 397,191 397,206 398,206 398,207 399,207 399,190 400,190 400,182 401,182 401,189 402,189 402,190 403,190 403,189 404,189 404,186 405,186 405,186 406,186 406,201 407,201 407,200 408,200 408,184 409,184 409,183 410,183 410,182 411,182 411,183 412,183 412,182 413,182 413,203 414,203 414,183 415,183 415,184 416,184 416,196 417,196 417,172 418,172 418,192 419,192 419,193 420,193 420,192 421,192 421,193 422,193 422,191 423,191 423,185 424,185 424,186 425,186 425,177 426,177 426,187 427,187 427,169 428,169 428,166 429,166 429,179 430,179 430,190 431,190 431,198 432,198 432,196 433,196 433,185 434,185 434,186 435,186 435,184 436,184 436,165 437,165 437,185 438,185 438,184 439,184 439,184 440,184 440,182 441,182 441,201 442,201 442,174 443,174 443,169 444,169 444,200 445,200 445,173 446,173 446,183 447,183 447,196 448,196 448,184 449,184 449,193 450,193 450,186 451,186 451,164 452,164 452,173 453,173 453,184 454,184 454,169 455,169 455,185 456,185 456,176 457,176 457,200 458,200 458,185 459,185 459,186 460,186 460,170 461,170 461,185 462,185 462,185 463,185 463,173 464,173 464,199 465,199 465,198 466,198 466,186 467,186 467,192 468,192 468,173 469,173 469,187 470,187 470,189 471,189 471,189 472,189 472,193 473,193 473,193 474,193 474,187 475,187 475,190 476,190 476,190 477,190 477,199 478,199 478,186 479,186 479,187 480,187 480,188 481,188 481,189 482,189 482,189 483,189 483,204 484,204 484,194 485,194 485,193 486,193 486,177 487,177 487,165 488,165 488,188 489,188 489,198 490,198 490,177 491,177 491,188 492,188 492,187 493,187 493,188 494,188 494,174 495,174 495,198 496,198 496,198 497,198 497,164 498,164 498,186 499,186 499,186 500,186 500,162 501,162 501,203 502,203 502,202 503,202 503,198 504,198 504,169 505,169 505,185 506,185 506,162 507,162 507,183 508,183 508,185 509,185 509,183 510,183 510,181 511,181 511,182 512,182 512,181 513,181 513,183 514,183 514,170 515,170 515,185 516,185 516,196 517,196 517,188 518,188 518,188 519,188 519,177 520,177 520,184 521,184 521,184 522,184 522,184 523,184 523,182 524,182 524,182 525,182 525,164 526,164 526,188 527,188 527,186 528,186 528,183 529,183 529,182 530,182 530,182 531,182 531,159 532,159 532,194 533,194 533,178 534,178 534,185 535,185 535,183 536,183 536,183 537,183 537,201 538,201 538,188 539,188 539,192 540,192 540,188 541,188 541,186 542,186 542,189 543,189 543,188 544,188 544,200 545,200 545,223 546,223 546,231 547,231 547,237 548,237 548,241 549,241 549,243 550,243 550,245 551,245 551,245 552,245 552,245 553,245 553,245 554,245 554,245 555,245 555,245 556,245 556,245 557,245 557,245 558,245 558,229 559,229 559,220 560,220 560,218 561,218 561,227 562,227 562,216 563,216 563,194 564,194 564,224 565,224 565,222 566,222 566,212 567,212 567,213 568,213 568,211 569,211 569,212 570,212 570,212 571,212 571,218 572,218 572,219 573,219 573,221 574,221 574,210 575,210 575,223 576,223 576,224 577,224 577,211 578,211 578,188 579,188 579,209 580,209 580,208 581,208 581,210 582,210 582,193 583,193 583,230 584,230 584,227 585,227 585,230 586,230 586,192 587,192 587,221 588,221 588,221 589,221 589,197 590,197 590,200 591,200 591,211 592,211 592,199 593,199 593,228 594,228 594,231 595,231 595,215 596,215 596,223 597,223 597,212 598,212 598,215 599,215 599,194 600,194 600,215 601,215 601,213 602,213 602,213 603,213 603,213 604,213 604,211 605,211 605,225 606,225 606,223 607,223 607,210 608,210 608,207 609,207 609,207 610,207 610,214 611,214 611,211 612,211 612,207 613,207 613,206 614,206 614,184 615,184 615,186 616,186 616,210 617,210 617,204 618,204 618,204 619,204 619,211 620,211 620,211 621,211 621,200 622,200 622,201 623,201 623,214 624,214 624,213 625,213 625,203 626,203 626,201 627,201 627,209 628,209 628,201 629,201 629,201 630,201 630,217 631,217 631,215 632,215 632,194 633,194 633,203 634,203 634,182 635,182 635,217 636,217 636,219 637,219 637,199 638,199 638,210 639,210 639,211 640,211 640,204 641,204 641,186 642,186 642,199 643,199 643,201 644,201 644,219 645,219 645,204 646,204 646,204 647,204 647,205 648,205 648,205 649,205 649,218 650,218 650,204 651,204 651,205 652,205 652,205 653,205 653,204 654,204 654,205 655,205 655,204 656,204 656,220 657,220 657,220 658,220 658,202 659,202 659,222 660,222 660,195 661,195 661,186 662,186 662,197 663,197 663,206 664,206 664,207 665,207 665,216 666,216 666,217 667,217 667,204 668,204 668,203 669,203 669,217 670,217 670,190 671,190 671,194 672,194 672,219 673,219 673,185 674,185 674,202 675,202 675,194 676,194 676,203 677,203 677,201 678,201 678,201 679,201 679,201 680,201 680,216 681,216 681,182 682,182 682,175 683,175 683,196 684,196 684,185 685,185 685,183 686,183 686,187 687,187 687,169 688,169 688,167 689,167 689,167 690,167 690,183 691,183 691,185 692,185 692,187 693,187 693,184 694,184 694,183 695,183 695,188 696,188 696,187 697,187 697,183 698,183 698,182 699,182 699,180 700,180 700,182 701,182 701,166 702,166 702,191 703,191 703,193 704,193 704,201 705,201 705,199 706,199 706,184 707,184 707,181 708,181 708,192 709,192 709,169 710,169 710,183 711,183 711,184 712,184 712,173 713,173 713,172 714,172 714,201 715,201 715,175 716,175 716,183 717,183 717,193 718,193 718,192 719,192 719,193 720,193 720,204 721,204 721,193 722,193 722,195 723,195 723,176 724,176 724,195 725,195 725,194 726,194 726,192 727,192 727,193 728,193 728,194 729,194 729,194 730,194 730,195 731,195 731,196 732,196 732,211 733,211 733,201 734,201 734,200 735,200 735,227 736,227 736,236 737,236 737,241 738,241 738,244 739,244 739,245 740,245 740,245 741,245 741,245 742,245 742,245 743,245 743,245 744,245 744,245 745,245 745,245 746,245 746,195 747,195 747,196 748,196 748,188 749,188 749,186 750,186 750,174 751,174 751,184 752,184 752,183 753,183 753,182 754,182 754,182 755,182 755,184 756,184 756,170 757,170 757,202 758,202 758,200 759,200 759,196 760,196 760,185 761,185 761,187 762,187 762,187 763,187 763,166 764,166 764,194 765,194 765,192 766,192 766,189 767,189 767,201 768,201 768,185 769,185 769,187 770,187 770,188 771,188 771,186 772,186 772,186 773,186 773,171 774,171 774,185 775,185 775,184 776,184 776,197 777,197 777,197 778,197 778,192 779,192 779,193 780,193 780,179 781,179 781,183 782,183 782,182 783,182 783,192 784,192 784,185 785,185 785,198 786,198 786,185 787,185 787,198 788,198 788,187 789,187 789,185 790,185 790,187 791,187 791,185 792,185 792,186 793,186 793,186 794,186 794,172 795,172 795,166 796,166 796,184 797,184 797,183 798,183 798,181 799,181 799,173 800,173 800,183 801,183 801,174 802,174 802,182 803,182 803,184 804,184 804,186 805,186 805,187 806,187 806,187 807,187 807,186 808,186 808,185 809,185 809,177 810,177 810,186 811,186 811,185 812,185 812,196 813,196 813,184 814,184 814,183 815,183 815,183 816,183 816,170 817,170 817,183 818,183 818,192 819,192 819,195 820,195 820,193 821,193 821,195 822,195 822,189 823,189 823,188 824,188 824,196 825,196 825,197 826,197 826,182 827,182 827,190 828,190 828,192 829,192 829,186 830,186 830,171 831,171 831,198 832,198 832,166 833,166 833,191 834,191 834,192 835,192 835,177 836,177 836,172 837,172 837,189 838,189 838,183 839,183 839,194 840,194 840,197 841,197 841,182 842,182 842,180 843,180 843,183 844,183 844,192 845,192 845,181 846,181 846,167 847,167 847,180 848,180 848,178 849,178 849,163 850,163 850,192 851,192 851,178 852,178 852,164 853,164 853,180 854,180 854,177 855,177 855,179 856,179 856,180 857,180 857,178 858,178 858,179 859,179 859,179 860,179 860,186 861,186 861,195 862,195 862,193 863,193 863,180 864,180 864,180 865,180 865,167 866,167 866,185 867,185 867,200 868,200 868,222 869,222 869,230 870,230 870,235 871,235 871,239 872,239 872,241 873,241 873,243 874,243 874,243 875,243 875,243 876,243 876,243 877,243 877,243 878,243 878,243 879,243 879,243 880,243 880,243 881,243 881,204 882,204 882,220 883,220 883,181 884,181 884,197 885,197 885,185 886,185 886,193 887,193 887,181 888,181 888,184 889,184 889,193 890,193 890,169 891,169 891,191 892,191 892,188 893,188 893,186 894,186 894,187 895,187 895,202 896,202 896,204 897,204 897,200 898,200 898,182 899,182 899,185 900,185 900,165 901,165 901,199 902,199 902,182 903,182 903,168 904,168 904,173 905,173 905,185 906,185 906,188 907,188 907,184 908,184 908,183 909,183 909,183 910,183 910,165 911,165 911,183 912,183 912,183 913,183 913,184 914,184 914,183 915,183 915,181 916,181 916,188 917,188 917,183 918,183 918,165 919,165 919,182 920,182 920,174 921,174 921,184 922,184 922,184 923,184 923,185 924,185 924,187 925,187 925,168 926,168 926,204 927,204 927,202 928,202 928,188 929,188 929,188 930,188 930,175 931,175 931,188 932,188 932,199 933,199 933,199 934,199 934,169 935,169 935,185 936,185 936,177 937,177 937,171 938,171 938,187 939,187 939,186 940,186 940,206 941,206 941,201 942,201 942,201 943,201 943,186 944,186 944,171 945,171 945,185 946,185 946,205 947,205 947,204 948,204 948,179 949,179 949,187 950,187 950,167 951,167 951,188 952,188 952,194 953,194 953,193 954,193 954,190 955,190 955,203 956,203 956,189 957,189 957,176 958,176 958,192 959,192 959,187 960,187 960,177 961,177 961,175 962,175 962,172 963,172 963,205 964,205 964,203 965,203 965,176 966,176 966,188 967,188 967,187 968,187 968,186 969,186 969,195 970,195 970,195 971,195 971,165 972,165 972,186 973,186 973,187 974,187 974,169 975,169 975,195 976,195 976,194 977,194 977,180 978,180 978,205 979,205 979,177 980,177 980,182 981,182 981,188 982,188 982,175 983,175 983,189 984,189 984,186 985,186 985,205 986,205 986,204 987,204 987,207 988,207 988,207 989,207 989,167 990,167 990,187 991,187 991,186 992,186 992,197 993,197 993,192 994,192 994,201 995,201 995,200 996,200 996,190 997,190 997,192 998,192 998,184 999,184 999,181 1000,181 1000,172 1001,172 1001,183 1002,183 1002,183 1003,183 1003,172 1004,172 1004,192 1005,192 1005,192 1006,192 1006,170 1007,170 1007,186 1008,186 1008,184 1009,184 1009,186 1010,186 1010,171 1011,171 1011,191 1012,191 1012,189 1013,189 1013,174 1014,174 1014,184 1015,184 1015,199 1016,199 1016,199 1017,199 1017,187 1018,187 1018,185 1019,185 1019,194 1020,194 1020,187 1021,187 1021,167 1022,167 1022,168 1023,168 1023,165 1024,165 1024,187 1025,187 1025,189 1026,189 1026,188 1027,188 1027,189 1028,189 1028,171 1029,171 1029,187 1030,187 1030,187 1031,187 1031,179 1032,179 1032,187 1033,187 1033,187 1034,187 1034,196 1035,196 1035,189 1036,189 1036,191 1037,191 1037,185 1038,185 1038,189 1039,189 1039,189 1040,189 1040,173 1041,173 1041,178 1042,178 1042,191 1043,191 1043,192 1044,192 1044,192 1045,192 1045,200 1046,200 1046,220 1047,220 1047,227 1048,227 1048,232 1049,232 1049,236 1050,236 1050,239 1051,239 1051,241 1052,241 1052,242 1053,242 1053,243 1054,243 1054,243 1055,243 1055,243 1056,243 1056,243 1057,243 1057,243 1058,243 1058,243 1059,243 1059,243 1060,243 1060,243 1061,243 1061,243 1062,243 1062,243 1063,243 1063,243 1064,243 1064,243 1065,243 1065,243 1066,243 1066,243 1067,243 L1067,317 Z" fill="url(#blu)"/>
<path d="M199,249 L210,249 L210,317 L188,317 L188.0,317.0 L188.0,312.8 L188.1,308.5 L188.2,304.2 L188.3,300.0 L188.6,295.8 L188.8,291.5 L189.1,287.2 L189.5,283.0 L189.9,278.8 L190.4,274.5 L191.0,270.2 L191.7,266.0 L192.6,261.8 L193.7,257.5 L195.2,253.2 L199.0,249.0 ZM376,249 L383,249 L383,317 L365,317 L365.0,317.0 L365.0,312.8 L365.1,308.5 L365.2,304.2 L365.3,300.0 L365.6,295.8 L365.8,291.5 L366.1,287.2 L366.5,283.0 L366.9,278.8 L367.4,274.5 L368.0,270.2 L368.7,266.0 L369.6,261.8 L370.7,257.5 L372.2,253.2 L376.0,249.0 ZM551,249 L558,249 L558,317 L542,317 L542.0,317.0 L542.0,312.8 L542.1,308.5 L542.2,304.2 L542.3,300.0 L542.5,295.8 L542.7,291.5 L542.9,287.2 L543.2,283.0 L543.6,278.8 L544.0,274.5 L544.5,270.2 L545.0,266.0 L545.8,261.8 L546.6,257.5 L547.9,253.2 L551.0,249.0 ZM739,249 L746,249 L746,317 L732,317 L732.0,317.0 L732.0,312.8 L732.1,308.5 L732.1,304.2 L732.2,300.0 L732.4,295.8 L732.5,291.5 L732.7,287.2 L732.9,283.0 L733.2,278.8 L733.5,274.5 L733.9,270.2 L734.4,266.0 L734.9,261.8 L735.6,257.5 L736.6,253.2 L739.0,249.0 ZM874,252 L881,252 L881,317 L865,317 L865.0,317.0 L865.0,312.9 L865.1,308.9 L865.2,304.8 L865.3,300.8 L865.5,296.7 L865.7,292.6 L865.9,288.6 L866.2,284.5 L866.6,280.4 L867.0,276.4 L867.5,272.3 L868.0,268.2 L868.8,264.2 L869.6,260.1 L870.9,256.1 L874.0,252.0 ZM1054,250 L1067,250 L1067,317 L1043,317 L1043.0,317.0 L1043.0,312.8 L1043.1,308.6 L1043.2,304.4 L1043.3,300.2 L1043.6,296.1 L1043.8,291.9 L1044.1,287.7 L1044.5,283.5 L1044.9,279.3 L1045.4,275.1 L1046.0,270.9 L1046.7,266.8 L1047.6,262.6 L1048.7,258.4 L1050.2,254.2 L1054.0,250.0 Z" fill="#4a4a4c"/>
<path d="M188,317V251h1V317zM189,317V257h1V317zM190,317V258h1V317zM191,317V254h1V317zM192,317V255h1V317zM193,317V252h1V317zM194,317V264h1V317zM195,317V263h1V317zM196,317V265h1V317zM197,317V256h1V317zM198,317V266h1V317zM199,317V260h1V317zM200,317V260h1V317zM201,317V280h1V317zM202,317V267h1V317zM203,317V281h1V317zM204,317V294h1V317zM205,317V293h1V317zM206,317V300h1V317zM207,317V295h1V317zM208,317V295h1V317zM209,317V299h1V317zM365,317V252h1V317zM366,317V257h1V317zM367,317V263h1V317zM368,317V263h1V317zM369,317V251h1V317zM370,317V259h1V317zM371,317V262h1V317zM372,317V259h1V317zM373,317V260h1V317zM374,317V263h1V317zM375,317V272h1V317zM376,317V271h1V317zM377,317V277h1V317zM378,317V299h1V317zM379,317V290h1V317zM380,317V300h1V317zM381,317V298h1V317zM382,317V294h1V317zM542,317V257h1V317zM543,317V247h1V317zM544,317V266h1V317zM545,317V266h1V317zM546,317V262h1V317zM547,317V260h1V317zM548,317V258h1V317zM549,317V258h1V317zM550,317V262h1V317zM551,317V276h1V317zM552,317V262h1V317zM553,317V283h1V317zM554,317V295h1V317zM555,317V297h1V317zM556,317V301h1V317zM557,317V301h1V317zM732,317V243h1V317zM733,317V246h1V317zM734,317V260h1V317zM735,317V249h1V317zM736,317V257h1V317zM737,317V273h1V317zM738,317V264h1V317zM739,317V274h1V317zM740,317V275h1V317zM741,317V268h1V317zM742,317V297h1V317zM743,317V296h1V317zM744,317V301h1V317zM745,317V299h1V317zM865,317V257h1V317zM866,317V263h1V317zM867,317V265h1V317zM868,317V260h1V317zM869,317V269h1V317zM870,317V254h1V317zM871,317V269h1V317zM872,317V269h1V317zM873,317V277h1V317zM874,317V264h1V317zM875,317V278h1V317zM876,317V282h1V317zM877,317V296h1V317zM878,317V291h1V317zM879,317V292h1V317zM880,317V298h1V317zM1043,317V251h1V317zM1044,317V263h1V317zM1045,317V247h1V317zM1046,317V252h1V317zM1047,317V263h1V317zM1048,317V252h1V317zM1049,317V267h1V317zM1050,317V262h1V317zM1051,317V267h1V317zM1052,317V263h1V317zM1053,317V270h1V317zM1054,317V266h1V317zM1055,317V273h1V317zM1056,317V279h1V317zM1057,317V278h1V317zM1058,317V266h1V317zM1059,317V274h1V317zM1060,317V293h1V317zM1061,317V292h1V317zM1062,317V298h1V317zM1063,317V299h1V317zM1064,317V297h1V317zM1065,317V294h1V317zM1066,317V295h1V317z" fill="url(#worg)" clip-path="url(#wclip)"/>
<rect x="29" y="260" width="1038" height="57" fill="url(#spk)" clip-path="url(#wclip)" opacity="0.7"/>
<path d="M29,317V309h1V317zM32,317V309h1V317zM33,317V307h1V317zM36,317V305h1V317zM37,317V308h1V317zM38,317V307h1V317zM40,317V303h1V317zM41,317V303h1V317zM42,317V307h1V317zM43,317V302h1V317zM44,317V291h1V317zM45,317V303h1V317zM47,317V277h1V317zM48,317V298h1V317zM49,317V294h1V317zM50,317V292h1V317zM51,317V289h1V317zM52,317V301h1V317zM53,317V297h1V317zM54,317V299h1V317zM55,317V299h1V317zM56,317V300h1V317zM57,317V303h1V317zM58,317V302h1V317zM59,317V314h1V317zM60,317V301h1V317zM62,317V299h1V317zM63,317V302h1V317zM64,317V294h1V317zM65,317V296h1V317zM66,317V297h1V317zM67,317V296h1V317zM68,317V311h1V317zM69,317V308h1V317zM70,317V296h1V317zM71,317V308h1V317zM72,317V306h1V317zM73,317V310h1V317zM74,317V308h1V317zM75,317V311h1V317zM76,317V310h1V317zM77,317V312h1V317zM78,317V310h1V317zM79,317V307h1V317zM80,317V307h1V317zM81,317V306h1V317zM82,317V301h1V317zM83,317V299h1V317zM84,317V296h1V317zM85,317V295h1V317zM86,317V291h1V317zM87,317V296h1V317zM88,317V283h1V317zM90,317V304h1V317zM91,317V307h1V317zM92,317V308h1V317zM93,317V298h1V317zM94,317V306h1V317zM97,317V298h1V317zM103,317V312h1V317zM104,317V312h1V317zM105,317V315h1V317zM106,317V311h1V317zM107,317V313h1V317zM109,317V314h1V317zM112,317V313h1V317zM116,317V310h1V317zM120,317V294h1V317zM123,317V310h1V317zM124,317V310h1V317zM127,317V311h1V317zM128,317V312h1V317zM129,317V309h1V317zM130,317V314h1V317zM131,317V308h1V317zM132,317V309h1V317zM133,317V313h1V317zM134,317V310h1V317zM135,317V314h1V317zM137,317V312h1V317zM138,317V312h1V317zM139,317V312h1V317zM140,317V308h1V317zM141,317V308h1V317zM142,317V307h1V317zM143,317V311h1V317zM145,317V313h1V317zM146,317V310h1V317zM147,317V312h1V317zM148,317V309h1V317zM149,317V311h1V317zM150,317V311h1V317zM151,317V310h1V317zM152,317V309h1V317zM153,317V311h1V317zM154,317V310h1V317zM155,317V312h1V317zM156,317V313h1V317zM157,317V308h1V317zM158,317V312h1V317zM159,317V314h1V317zM160,317V310h1V317zM161,317V298h1V317zM162,317V291h1V317zM163,317V296h1V317zM164,317V294h1V317zM165,317V308h1V317zM166,317V296h1V317zM167,317V304h1V317zM169,317V310h1V317zM170,317V304h1V317zM176,317V312h1V317zM177,317V297h1V317zM179,317V297h1V317zM180,317V316h1V317zM181,317V309h1V317zM183,317V307h1V317zM184,317V295h1V317zM185,317V313h1V317zM187,317V314h1V317zM188,317V313h1V317zM212,317V315h1V317zM214,317V314h1V317zM217,317V313h1V317zM222,317V312h1V317zM225,317V313h1V317zM226,317V309h1V317zM232,317V312h1V317zM233,317V309h1V317zM235,317V311h1V317zM236,317V304h1V317zM239,317V288h1V317zM240,317V292h1V317zM241,317V291h1V317zM242,317V298h1V317zM243,317V293h1V317zM244,317V291h1V317zM245,317V296h1V317zM246,317V291h1V317zM247,317V305h1V317zM248,317V287h1V317zM249,317V289h1V317zM250,317V307h1V317zM253,317V307h1V317zM254,317V306h1V317zM255,317V311h1V317zM256,317V309h1V317zM257,317V303h1V317zM258,317V307h1V317zM259,317V291h1V317zM260,317V285h1V317zM261,317V294h1V317zM262,317V294h1V317zM263,317V296h1V317zM264,317V303h1V317zM265,317V306h1V317zM266,317V310h1V317zM267,317V311h1V317zM268,317V308h1V317zM269,317V310h1V317zM270,317V305h1V317zM271,317V309h1V317zM272,317V312h1V317zM274,317V303h1V317zM276,317V305h1V317zM277,317V308h1V317zM278,317V310h1V317zM279,317V306h1V317zM280,317V309h1V317zM281,317V310h1V317zM282,317V308h1V317zM283,317V305h1V317zM284,317V308h1V317zM285,317V312h1V317zM286,317V296h1V317zM287,317V293h1V317zM288,317V288h1V317zM289,317V293h1V317zM290,317V297h1V317zM291,317V300h1V317zM292,317V300h1V317zM293,317V305h1V317zM294,317V309h1V317zM295,317V309h1V317zM296,317V302h1V317zM297,317V306h1V317zM298,317V302h1V317zM299,317V301h1V317zM300,317V296h1V317zM301,317V299h1V317zM302,317V286h1V317zM304,317V299h1V317zM305,317V293h1V317zM307,317V301h1V317zM309,317V295h1V317zM310,317V300h1V317zM311,317V303h1V317zM312,317V310h1V317zM313,317V312h1V317zM315,317V311h1V317zM317,317V309h1V317zM318,317V314h1V317zM321,317V310h1V317zM323,317V314h1V317zM325,317V313h1V317zM326,317V308h1V317zM327,317V310h1V317zM328,317V313h1V317zM329,317V308h1V317zM330,317V313h1V317zM332,317V301h1V317zM333,317V314h1V317zM335,317V309h1V317zM336,317V310h1V317zM337,317V312h1V317zM339,317V312h1V317zM341,317V310h1V317zM343,317V311h1V317zM344,317V314h1V317zM345,317V307h1V317zM346,317V306h1V317zM347,317V311h1V317zM348,317V312h1V317zM349,317V308h1V317zM350,317V309h1V317zM351,317V313h1V317zM352,317V311h1V317zM353,317V299h1V317zM354,317V310h1V317zM355,317V309h1V317zM356,317V307h1V317zM357,317V311h1V317zM358,317V310h1V317zM359,317V311h1V317zM360,317V309h1V317zM361,317V311h1V317zM362,317V310h1V317zM363,317V309h1V317zM364,317V311h1V317zM365,317V312h1V317zM366,317V309h1V317zM383,317V307h1V317zM384,317V308h1V317zM385,317V288h1V317zM386,317V307h1V317zM387,317V307h1V317zM388,317V310h1V317zM389,317V310h1V317zM390,317V306h1V317zM391,317V304h1V317zM392,317V299h1V317zM393,317V283h1V317zM394,317V298h1V317zM395,317V299h1V317zM396,317V309h1V317zM397,317V311h1V317zM398,317V309h1V317zM399,317V312h1V317zM402,317V310h1V317zM403,317V310h1V317zM404,317V310h1V317zM405,317V310h1V317zM406,317V310h1V317zM407,317V293h1V317zM409,317V308h1V317zM410,317V312h1V317zM411,317V311h1V317zM413,317V311h1V317zM414,317V310h1V317zM415,317V309h1V317zM416,317V307h1V317zM417,317V308h1V317zM418,317V302h1V317zM419,317V305h1V317zM420,317V306h1V317zM421,317V305h1V317zM422,317V308h1V317zM423,317V310h1V317zM424,317V307h1V317zM425,317V309h1V317zM426,317V310h1V317zM428,317V299h1V317zM429,317V308h1V317zM430,317V310h1V317zM431,317V309h1V317zM432,317V310h1V317zM433,317V298h1V317zM434,317V289h1V317zM435,317V292h1V317zM436,317V300h1V317zM437,317V300h1V317zM438,317V308h1V317zM439,317V312h1V317zM440,317V310h1V317zM441,317V301h1V317zM442,317V309h1V317zM443,317V316h1V317zM445,317V308h1V317zM446,317V308h1V317zM447,317V287h1V317zM448,317V302h1V317zM449,317V295h1V317zM450,317V280h1V317zM451,317V284h1V317zM452,317V304h1V317zM453,317V302h1V317zM454,317V281h1V317zM455,317V301h1V317zM456,317V298h1V317zM457,317V300h1V317zM458,317V303h1V317zM459,317V311h1V317zM460,317V310h1V317zM461,317V306h1V317zM463,317V310h1V317zM464,317V307h1V317zM465,317V310h1V317zM466,317V306h1V317zM467,317V309h1V317zM468,317V305h1V317zM469,317V305h1V317zM470,317V303h1V317zM471,317V299h1V317zM472,317V302h1V317zM473,317V309h1V317zM474,317V310h1V317zM475,317V299h1V317zM476,317V316h1V317zM477,317V299h1V317zM478,317V308h1V317zM479,317V293h1V317zM480,317V310h1V317zM481,317V311h1V317zM482,317V310h1V317zM483,317V308h1V317zM484,317V311h1V317zM485,317V310h1V317zM486,317V308h1V317zM487,317V309h1V317zM488,317V309h1V317zM491,317V309h1V317zM493,317V311h1V317zM495,317V311h1V317zM497,317V310h1V317zM498,317V309h1V317zM504,317V310h1V317zM505,317V310h1V317zM506,317V308h1V317zM507,317V314h1V317zM508,317V310h1V317zM509,317V314h1V317zM510,317V302h1V317zM511,317V296h1V317zM516,317V312h1V317zM519,317V309h1V317zM521,317V310h1V317zM522,317V294h1V317zM523,317V312h1V317zM524,317V311h1V317zM526,317V301h1V317zM527,317V303h1V317zM528,317V296h1V317zM529,317V303h1V317zM530,317V301h1V317zM531,317V291h1V317zM532,317V295h1V317zM533,317V293h1V317zM534,317V295h1V317zM535,317V289h1V317zM536,317V292h1V317zM537,317V291h1V317zM538,317V294h1V317zM539,317V305h1V317zM540,317V286h1V317zM542,317V294h1V317zM543,317V304h1V317zM558,317V292h1V317zM559,317V290h1V317zM560,317V294h1V317zM561,317V294h1V317zM562,317V295h1V317zM563,317V293h1V317zM564,317V292h1V317zM565,317V290h1V317zM566,317V285h1V317zM567,317V286h1V317zM568,317V282h1V317zM569,317V290h1V317zM570,317V291h1V317zM571,317V305h1V317zM572,317V293h1V317zM573,317V298h1V317zM574,317V293h1V317zM575,317V298h1V317zM576,317V294h1V317zM577,317V282h1V317zM578,317V284h1V317zM579,317V305h1V317zM580,317V304h1V317zM581,317V290h1V317zM582,317V291h1V317zM583,317V291h1V317zM584,317V282h1V317zM585,317V287h1V317zM586,317V284h1V317zM587,317V285h1V317zM588,317V282h1V317zM589,317V283h1V317zM590,317V283h1V317zM591,317V286h1V317zM592,317V285h1V317zM593,317V288h1V317zM594,317V289h1V317zM595,317V294h1V317zM596,317V279h1V317zM597,317V285h1V317zM598,317V298h1V317zM599,317V298h1V317zM600,317V294h1V317zM601,317V297h1V317zM602,317V302h1V317zM603,317V296h1V317zM604,317V298h1V317zM605,317V294h1V317zM606,317V303h1V317zM607,317V295h1V317zM608,317V297h1V317zM609,317V284h1V317zM610,317V274h1V317zM611,317V278h1V317zM612,317V286h1V317zM613,317V296h1V317zM614,317V298h1V317zM615,317V299h1V317zM616,317V297h1V317zM617,317V299h1V317zM618,317V297h1V317zM619,317V297h1V317zM620,317V295h1V317zM621,317V295h1V317zM622,317V297h1V317zM623,317V293h1V317zM624,317V296h1V317zM625,317V301h1V317zM626,317V296h1V317zM627,317V295h1V317zM628,317V296h1V317zM629,317V298h1V317zM630,317V303h1V317zM631,317V294h1V317zM632,317V292h1V317zM633,317V293h1V317zM634,317V288h1V317zM635,317V289h1V317zM636,317V262h1V317zM637,317V279h1V317zM638,317V285h1V317zM639,317V278h1V317zM640,317V287h1V317zM641,317V276h1V317zM642,317V298h1V317zM643,317V296h1V317zM644,317V294h1V317zM645,317V298h1V317zM646,317V295h1V317zM647,317V297h1V317zM648,317V295h1V317zM649,317V294h1V317zM650,317V294h1V317zM651,317V283h1V317zM652,317V273h1V317zM653,317V276h1V317zM654,317V291h1V317zM655,317V288h1V317zM656,317V290h1V317zM657,317V296h1V317zM658,317V295h1V317zM659,317V295h1V317zM660,317V298h1V317zM661,317V298h1V317zM662,317V297h1V317zM663,317V307h1V317zM664,317V297h1V317zM665,317V296h1V317zM666,317V307h1V317zM667,317V296h1V317zM668,317V296h1V317zM669,317V296h1V317zM670,317V297h1V317zM671,317V294h1V317zM672,317V294h1V317zM673,317V304h1V317zM674,317V298h1V317zM675,317V300h1V317zM676,317V296h1V317zM677,317V298h1V317zM678,317V299h1V317zM679,317V296h1V317zM680,317V295h1V317zM681,317V306h1V317zM682,317V298h1V317zM683,317V297h1V317zM684,317V297h1V317zM685,317V295h1V317zM686,317V294h1V317zM688,317V293h1V317zM689,317V295h1V317zM690,317V297h1V317zM691,317V295h1V317zM692,317V302h1V317zM693,317V296h1V317zM694,317V295h1V317zM695,317V296h1V317zM696,317V297h1V317zM697,317V303h1V317zM698,317V298h1V317zM699,317V293h1V317zM700,317V292h1V317zM701,317V291h1V317zM702,317V287h1V317zM703,317V289h1V317zM704,317V285h1V317zM705,317V281h1V317zM706,317V283h1V317zM707,317V273h1V317zM708,317V272h1V317zM709,317V259h1V317zM710,317V283h1V317zM711,317V291h1V317zM712,317V304h1V317zM713,317V306h1V317zM714,317V294h1V317zM715,317V295h1V317zM716,317V295h1V317zM717,317V294h1V317zM718,317V296h1V317zM719,317V297h1V317zM720,317V293h1V317zM721,317V293h1V317zM722,317V296h1V317zM723,317V297h1V317zM724,317V294h1V317zM725,317V295h1V317zM726,317V301h1V317zM727,317V287h1V317zM728,317V277h1V317zM729,317V277h1V317zM730,317V278h1V317zM731,317V278h1V317zM732,317V283h1V317zM733,317V290h1V317zM747,317V305h1V317zM748,317V306h1V317zM749,317V308h1V317zM750,317V310h1V317zM751,317V291h1V317zM752,317V307h1V317zM753,317V307h1V317zM754,317V305h1V317zM755,317V308h1V317zM756,317V308h1V317zM757,317V307h1V317zM758,317V305h1V317zM759,317V306h1V317zM760,317V305h1V317zM761,317V302h1V317zM763,317V298h1V317zM764,317V293h1V317zM765,317V299h1V317zM766,317V302h1V317zM767,317V311h1V317zM768,317V306h1V317zM769,317V305h1V317zM770,317V302h1V317zM771,317V305h1V317zM772,317V302h1V317zM773,317V303h1V317zM774,317V302h1V317zM775,317V306h1V317zM776,317V312h1V317zM777,317V301h1V317zM778,317V300h1V317zM779,317V302h1V317zM780,317V311h1V317zM781,317V312h1V317zM782,317V310h1V317zM783,317V303h1V317zM784,317V304h1V317zM785,317V303h1V317zM786,317V300h1V317zM787,317V290h1V317zM788,317V285h1V317zM789,317V305h1V317zM790,317V294h1V317zM791,317V280h1V317zM792,317V291h1V317zM793,317V293h1V317zM794,317V297h1V317zM795,317V310h1V317zM796,317V293h1V317zM797,317V311h1V317zM798,317V311h1V317zM799,317V302h1V317zM800,317V302h1V317zM801,317V306h1V317zM802,317V306h1V317zM803,317V290h1V317zM804,317V306h1V317zM805,317V305h1V317zM806,317V305h1V317zM807,317V307h1V317zM808,317V310h1V317zM809,317V302h1V317zM810,317V304h1V317zM811,317V299h1V317zM812,317V297h1V317zM814,317V296h1V317zM815,317V300h1V317zM817,317V306h1V317zM818,317V308h1V317zM819,317V305h1V317zM820,317V311h1V317zM821,317V308h1V317zM822,317V304h1V317zM824,317V314h1V317zM825,317V304h1V317zM826,317V301h1V317zM827,317V301h1V317zM828,317V298h1V317zM829,317V300h1V317zM830,317V296h1V317zM831,317V293h1V317zM832,317V269h1V317zM833,317V292h1V317zM834,317V291h1V317zM835,317V292h1V317zM836,317V292h1V317zM837,317V285h1V317zM839,317V312h1V317zM840,317V307h1V317zM841,317V303h1V317zM842,317V307h1V317zM843,317V302h1V317zM844,317V300h1V317zM845,317V302h1V317zM846,317V301h1V317zM847,317V301h1V317zM850,317V305h1V317zM851,317V308h1V317zM852,317V293h1V317zM853,317V309h1V317zM854,317V305h1V317zM855,317V306h1V317zM856,317V308h1V317zM857,317V307h1V317zM858,317V308h1V317zM859,317V307h1V317zM860,317V309h1V317zM861,317V313h1V317zM862,317V305h1V317zM863,317V309h1V317zM865,317V307h1V317zM866,317V294h1V317zM881,317V303h1V317zM882,317V305h1V317zM883,317V306h1V317zM884,317V308h1V317zM885,317V302h1V317zM886,317V306h1V317zM888,317V305h1V317zM889,317V306h1V317zM890,317V306h1V317zM891,317V305h1V317zM892,317V304h1V317zM893,317V307h1V317zM894,317V295h1V317zM895,317V290h1V317zM896,317V290h1V317zM897,317V286h1V317zM898,317V288h1V317zM899,317V293h1V317zM900,317V294h1V317zM901,317V290h1V317zM902,317V297h1V317zM903,317V301h1V317zM904,317V291h1V317zM905,317V300h1V317zM906,317V298h1V317zM907,317V301h1V317zM908,317V290h1V317zM909,317V292h1V317zM910,317V292h1V317zM911,317V287h1V317zM912,317V286h1V317zM913,317V296h1V317zM915,317V289h1V317zM916,317V301h1V317zM917,317V310h1V317zM918,317V307h1V317zM919,317V302h1V317zM920,317V306h1V317zM921,317V302h1V317zM922,317V303h1V317zM923,317V302h1V317zM924,317V301h1V317zM925,317V305h1V317zM926,317V304h1V317zM927,317V303h1V317zM928,317V303h1V317zM929,317V300h1V317zM930,317V296h1V317zM931,317V295h1V317zM932,317V298h1V317zM933,317V300h1V317zM935,317V298h1V317zM936,317V303h1V317zM937,317V302h1V317zM938,317V301h1V317zM939,317V301h1V317zM940,317V300h1V317zM941,317V294h1V317zM942,317V302h1V317zM943,317V299h1V317zM944,317V300h1V317zM945,317V310h1V317zM946,317V299h1V317zM947,317V302h1V317zM948,317V303h1V317zM949,317V300h1V317zM950,317V301h1V317zM951,317V301h1V317zM953,317V300h1V317zM954,317V301h1V317zM955,317V298h1V317zM956,317V302h1V317zM957,317V303h1V317zM959,317V300h1V317zM960,317V302h1V317zM961,317V303h1V317zM962,317V305h1V317zM963,317V299h1V317zM964,317V302h1V317zM965,317V300h1V317zM966,317V304h1V317zM967,317V310h1V317zM969,317V308h1V317zM970,317V305h1V317zM971,317V300h1V317zM972,317V289h1V317zM973,317V297h1V317zM974,317V294h1V317zM975,317V290h1V317zM976,317V293h1V317zM977,317V286h1V317zM978,317V289h1V317zM979,317V297h1V317zM980,317V295h1V317zM981,317V294h1V317zM982,317V286h1V317zM983,317V294h1V317zM984,317V300h1V317zM985,317V297h1V317zM986,317V301h1V317zM987,317V307h1V317zM988,317V306h1V317zM989,317V304h1V317zM990,317V305h1V317zM991,317V303h1V317zM992,317V304h1V317zM993,317V311h1V317zM994,317V297h1V317zM995,317V305h1V317zM996,317V306h1V317zM997,317V306h1V317zM998,317V304h1V317zM999,317V307h1V317zM1000,317V302h1V317zM1001,317V306h1V317zM1002,317V287h1V317zM1003,317V304h1V317zM1004,317V302h1V317zM1005,317V304h1V317zM1006,317V287h1V317zM1007,317V304h1V317zM1008,317V304h1V317zM1009,317V308h1V317zM1010,317V302h1V317zM1011,317V302h1V317zM1012,317V305h1V317zM1013,317V304h1V317zM1014,317V293h1V317zM1015,317V305h1V317zM1016,317V305h1V317zM1017,317V301h1V317zM1018,317V300h1V317zM1020,317V300h1V317zM1021,317V302h1V317zM1022,317V291h1V317zM1023,317V298h1V317zM1024,317V296h1V317zM1025,317V286h1V317zM1026,317V291h1V317zM1027,317V297h1V317zM1028,317V290h1V317zM1029,317V291h1V317zM1030,317V292h1V317zM1031,317V298h1V317zM1032,317V292h1V317zM1033,317V300h1V317zM1034,317V301h1V317zM1035,317V290h1V317zM1036,317V304h1V317zM1037,317V305h1V317zM1038,317V305h1V317zM1039,317V300h1V317zM1040,317V310h1V317zM1041,317V300h1V317zM1042,317V299h1V317zM1043,317V293h1V317zM1044,317V299h1V317z" fill="url(#org)"/>
<path d="M29,317V312h1V317zM32,317V312h1V317zM33,317V310h1V317zM36,317V308h1V317zM37,317V311h1V317zM38,317V310h1V317zM40,317V306h1V317zM41,317V306h1V317zM42,317V310h1V317zM43,317V305h1V317zM44,317V294h1V317zM45,317V306h1V317zM47,317V280h1V317zM48,317V301h1V317zM49,317V296h1V317zM50,317V294h1V317zM51,317V292h1V317zM52,317V304h1V317zM53,317V299h1V317zM54,317V301h1V317zM55,317V302h1V317zM56,317V302h1V317zM57,317V306h1V317zM58,317V305h1V317zM60,317V304h1V317zM62,317V301h1V317zM63,317V305h1V317zM64,317V296h1V317zM65,317V299h1V317zM66,317V300h1V317zM67,317V299h1V317zM68,317V313h1V317zM69,317V311h1V317zM70,317V298h1V317zM71,317V311h1V317zM72,317V308h1V317zM73,317V313h1V317zM74,317V311h1V317zM75,317V314h1V317zM76,317V312h1V317zM77,317V314h1V317zM78,317V313h1V317zM79,317V309h1V317zM80,317V310h1V317zM81,317V309h1V317zM82,317V304h1V317zM83,317V302h1V317zM84,317V299h1V317zM85,317V297h1V317zM86,317V294h1V317zM87,317V298h1V317zM88,317V285h1V317zM90,317V306h1V317zM91,317V309h1V317zM92,317V310h1V317zM93,317V300h1V317zM94,317V309h1V317zM97,317V300h1V317zM103,317V315h1V317zM104,317V315h1V317zM106,317V314h1V317zM107,317V316h1V317zM112,317V316h1V317zM116,317V313h1V317zM120,317V297h1V317zM123,317V313h1V317zM124,317V313h1V317zM127,317V314h1V317zM128,317V315h1V317zM129,317V312h1V317zM130,317V316h1V317zM131,317V311h1V317zM132,317V311h1V317zM133,317V316h1V317zM134,317V313h1V317zM135,317V316h1V317zM137,317V315h1V317zM138,317V314h1V317zM139,317V315h1V317zM140,317V311h1V317zM141,317V310h1V317zM142,317V310h1V317zM143,317V313h1V317zM145,317V315h1V317zM146,317V313h1V317zM147,317V314h1V317zM148,317V312h1V317zM149,317V314h1V317zM150,317V314h1V317zM151,317V312h1V317zM152,317V311h1V317zM153,317V314h1V317zM154,317V313h1V317zM155,317V314h1V317zM156,317V316h1V317zM157,317V311h1V317zM158,317V315h1V317zM159,317V316h1V317zM160,317V313h1V317zM161,317V301h1V317zM162,317V293h1V317zM163,317V299h1V317zM164,317V296h1V317zM165,317V311h1V317zM166,317V299h1V317zM167,317V306h1V317zM169,317V313h1V317zM170,317V307h1V317zM176,317V314h1V317zM177,317V299h1V317zM179,317V300h1V317zM181,317V311h1V317zM183,317V310h1V317zM184,317V298h1V317zM185,317V316h1V317zM187,317V316h1V317zM188,317V315h1V317zM214,317V316h1V317zM217,317V316h1V317zM222,317V315h1V317zM225,317V316h1V317zM226,317V312h1V317zM232,317V315h1V317zM233,317V312h1V317zM235,317V313h1V317zM236,317V306h1V317zM239,317V291h1V317zM240,317V295h1V317zM241,317V294h1V317zM242,317V300h1V317zM243,317V295h1V317zM244,317V294h1V317zM245,317V299h1V317zM246,317V293h1V317zM247,317V308h1V317zM248,317V289h1V317zM249,317V291h1V317zM250,317V309h1V317zM253,317V309h1V317zM254,317V308h1V317zM255,317V314h1V317zM256,317V312h1V317zM257,317V306h1V317zM258,317V309h1V317zM259,317V293h1V317zM260,317V287h1V317zM261,317V296h1V317zM262,317V297h1V317zM263,317V298h1V317zM264,317V306h1V317zM265,317V308h1V317zM266,317V312h1V317zM267,317V313h1V317zM268,317V310h1V317zM269,317V312h1V317zM270,317V307h1V317zM271,317V311h1V317zM272,317V315h1V317zM274,317V305h1V317zM276,317V308h1V317zM277,317V310h1V317zM278,317V312h1V317zM279,317V309h1V317zM280,317V312h1V317zM281,317V312h1V317zM282,317V310h1V317zM283,317V308h1V317zM284,317V311h1V317zM285,317V315h1V317zM286,317V299h1V317zM287,317V295h1V317zM288,317V291h1V317zM289,317V296h1V317zM290,317V300h1V317zM291,317V303h1V317zM292,317V302h1V317zM293,317V308h1V317zM294,317V311h1V317zM295,317V311h1V317zM296,317V304h1V317zM297,317V309h1V317zM298,317V305h1V317zM299,317V304h1V317zM300,317V298h1V317zM301,317V301h1V317zM302,317V289h1V317zM304,317V301h1V317zM305,317V295h1V317zM307,317V303h1V317zM309,317V298h1V317zM310,317V302h1V317zM311,317V306h1V317zM312,317V312h1V317zM313,317V315h1V317zM315,317V314h1V317zM317,317V312h1V317zM318,317V316h1V317zM321,317V313h1V317zM323,317V316h1V317zM325,317V315h1V317zM326,317V311h1V317zM327,317V312h1V317zM328,317V316h1V317zM329,317V310h1V317zM330,317V316h1V317zM332,317V303h1V317zM333,317V316h1V317zM335,317V311h1V317zM336,317V313h1V317zM337,317V314h1V317zM339,317V314h1V317zM341,317V313h1V317zM343,317V314h1V317zM344,317V316h1V317zM345,317V309h1V317zM346,317V309h1V317zM347,317V313h1V317zM348,317V315h1V317zM349,317V311h1V317zM350,317V312h1V317zM351,317V316h1V317zM352,317V313h1V317zM353,317V302h1V317zM354,317V313h1V317zM355,317V312h1V317zM356,317V309h1V317zM357,317V313h1V317zM358,317V313h1V317zM359,317V313h1V317zM360,317V312h1V317zM361,317V313h1V317zM362,317V312h1V317zM363,317V312h1V317zM364,317V313h1V317zM365,317V314h1V317zM366,317V311h1V317zM383,317V309h1V317zM384,317V311h1V317zM385,317V290h1V317zM386,317V309h1V317zM387,317V310h1V317zM388,317V313h1V317zM389,317V313h1V317zM390,317V308h1V317zM391,317V306h1V317zM392,317V302h1V317zM393,317V285h1V317zM394,317V300h1V317zM395,317V301h1V317zM396,317V312h1V317zM397,317V314h1V317zM398,317V311h1V317zM399,317V314h1V317zM402,317V312h1V317zM403,317V312h1V317zM404,317V312h1V317zM405,317V312h1V317zM406,317V313h1V317zM407,317V296h1V317zM409,317V310h1V317zM410,317V314h1V317zM411,317V313h1V317zM413,317V314h1V317zM414,317V312h1V317zM415,317V311h1V317zM416,317V310h1V317zM417,317V311h1V317zM418,317V305h1V317zM419,317V308h1V317zM420,317V309h1V317zM421,317V308h1V317zM422,317V310h1V317zM423,317V313h1V317zM424,317V310h1V317zM425,317V311h1V317zM426,317V312h1V317zM428,317V301h1V317zM429,317V311h1V317zM430,317V312h1V317zM431,317V312h1V317zM432,317V312h1V317zM433,317V300h1V317zM434,317V291h1V317zM435,317V294h1V317zM436,317V303h1V317zM437,317V302h1V317zM438,317V311h1V317zM439,317V315h1V317zM440,317V313h1V317zM441,317V304h1V317zM442,317V312h1V317zM445,317V311h1V317zM446,317V311h1V317zM447,317V290h1V317zM448,317V305h1V317zM449,317V297h1V317zM450,317V283h1V317zM451,317V287h1V317zM452,317V307h1V317zM453,317V305h1V317zM454,317V284h1V317zM455,317V303h1V317zM456,317V300h1V317zM457,317V303h1V317zM458,317V305h1V317zM459,317V314h1V317zM460,317V313h1V317zM461,317V309h1V317zM463,317V313h1V317zM464,317V309h1V317zM465,317V313h1V317zM466,317V309h1V317zM467,317V311h1V317zM468,317V308h1V317zM469,317V308h1V317zM470,317V306h1V317zM471,317V301h1V317zM472,317V305h1V317zM473,317V311h1V317zM474,317V312h1V317zM475,317V302h1V317zM477,317V302h1V317zM478,317V310h1V317zM479,317V296h1V317zM480,317V313h1V317zM481,317V314h1V317zM482,317V312h1V317zM483,317V310h1V317zM484,317V313h1V317zM485,317V313h1V317zM486,317V310h1V317zM487,317V312h1V317zM488,317V312h1V317zM491,317V312h1V317zM493,317V314h1V317zM495,317V314h1V317zM497,317V312h1V317zM498,317V312h1V317zM504,317V313h1V317zM505,317V313h1V317zM506,317V311h1V317zM507,317V316h1V317zM508,317V312h1V317zM509,317V316h1V317zM510,317V304h1V317zM511,317V299h1V317zM516,317V314h1V317zM519,317V311h1V317zM521,317V312h1V317zM522,317V296h1V317zM523,317V314h1V317zM524,317V313h1V317zM526,317V303h1V317zM527,317V305h1V317zM528,317V299h1V317zM529,317V305h1V317zM530,317V304h1V317zM531,317V293h1V317zM532,317V298h1V317zM533,317V295h1V317zM534,317V297h1V317zM535,317V292h1V317zM536,317V295h1V317zM537,317V293h1V317zM538,317V297h1V317zM539,317V307h1V317zM540,317V289h1V317zM542,317V296h1V317zM543,317V307h1V317zM558,317V295h1V317zM559,317V292h1V317zM560,317V297h1V317zM561,317V296h1V317zM562,317V298h1V317zM563,317V296h1V317zM564,317V295h1V317zM565,317V293h1V317zM566,317V287h1V317zM567,317V288h1V317zM568,317V285h1V317zM569,317V293h1V317zM570,317V293h1V317zM571,317V308h1V317zM572,317V296h1V317zM573,317V300h1V317zM574,317V295h1V317zM575,317V300h1V317zM576,317V296h1V317zM577,317V285h1V317zM578,317V286h1V317zM579,317V308h1V317zM580,317V307h1V317zM581,317V292h1V317zM582,317V293h1V317zM583,317V294h1V317zM584,317V284h1V317zM585,317V289h1V317zM586,317V287h1V317zM587,317V288h1V317zM588,317V285h1V317zM589,317V286h1V317zM590,317V285h1V317zM591,317V288h1V317zM592,317V288h1V317zM593,317V290h1V317zM594,317V291h1V317zM595,317V297h1V317zM596,317V282h1V317zM597,317V287h1V317zM598,317V300h1V317zM599,317V301h1V317zM600,317V297h1V317zM601,317V300h1V317zM602,317V304h1V317zM603,317V299h1V317zM604,317V300h1V317zM605,317V296h1V317zM606,317V306h1V317zM607,317V297h1V317zM608,317V299h1V317zM609,317V286h1V317zM610,317V276h1V317zM611,317V281h1V317zM612,317V288h1V317zM613,317V298h1V317zM614,317V300h1V317zM615,317V301h1V317zM616,317V299h1V317zM617,317V301h1V317zM618,317V299h1V317zM619,317V300h1V317zM620,317V297h1V317zM621,317V298h1V317zM622,317V300h1V317zM623,317V296h1V317zM624,317V299h1V317zM625,317V304h1V317zM626,317V299h1V317zM627,317V297h1V317zM628,317V298h1V317zM629,317V301h1V317zM630,317V306h1V317zM631,317V297h1V317zM632,317V294h1V317zM633,317V296h1V317zM634,317V291h1V317zM635,317V292h1V317zM636,317V265h1V317zM637,317V281h1V317zM638,317V287h1V317zM639,317V281h1V317zM640,317V290h1V317zM641,317V278h1V317zM642,317V300h1V317zM643,317V298h1V317zM644,317V296h1V317zM645,317V300h1V317zM646,317V298h1V317zM647,317V300h1V317zM648,317V297h1V317zM649,317V296h1V317zM650,317V297h1V317zM651,317V285h1V317zM652,317V276h1V317zM653,317V279h1V317zM654,317V293h1V317zM655,317V291h1V317zM656,317V293h1V317zM657,317V299h1V317zM658,317V298h1V317zM659,317V298h1V317zM660,317V300h1V317zM661,317V301h1V317zM662,317V299h1V317zM663,317V309h1V317zM664,317V299h1V317zM665,317V299h1V317zM666,317V309h1V317zM667,317V299h1V317zM668,317V299h1V317zM669,317V298h1V317zM670,317V299h1V317zM671,317V297h1V317zM672,317V296h1V317zM673,317V306h1V317zM674,317V301h1V317zM675,317V302h1V317zM676,317V298h1V317zM677,317V300h1V317zM678,317V302h1V317zM679,317V298h1V317zM680,317V298h1V317zM681,317V308h1V317zM682,317V300h1V317zM683,317V300h1V317zM684,317V299h1V317zM685,317V297h1V317zM686,317V296h1V317zM688,317V296h1V317zM689,317V297h1V317zM690,317V299h1V317zM691,317V297h1V317zM692,317V305h1V317zM693,317V298h1V317zM694,317V298h1V317zM695,317V299h1V317zM696,317V300h1V317zM697,317V305h1V317zM698,317V300h1V317zM699,317V296h1V317zM700,317V294h1V317zM701,317V294h1V317zM702,317V290h1V317zM703,317V291h1V317zM704,317V288h1V317zM705,317V284h1V317zM706,317V286h1V317zM707,317V275h1V317zM708,317V274h1V317zM709,317V262h1V317zM710,317V286h1V317zM711,317V293h1V317zM712,317V306h1V317zM713,317V308h1V317zM714,317V297h1V317zM715,317V298h1V317zM716,317V297h1V317zM717,317V296h1V317zM718,317V298h1V317zM719,317V300h1V317zM720,317V296h1V317zM721,317V295h1V317zM722,317V299h1V317zM723,317V299h1V317zM724,317V296h1V317zM725,317V297h1V317zM726,317V304h1V317zM727,317V289h1V317zM728,317V279h1V317zM729,317V279h1V317zM730,317V280h1V317zM731,317V281h1V317zM732,317V286h1V317zM733,317V292h1V317zM747,317V308h1V317zM748,317V308h1V317zM749,317V311h1V317zM750,317V313h1V317zM751,317V294h1V317zM752,317V310h1V317zM753,317V310h1V317zM754,317V307h1V317zM755,317V310h1V317zM756,317V310h1V317zM757,317V309h1V317zM758,317V308h1V317zM759,317V308h1V317zM760,317V307h1V317zM761,317V305h1V317zM763,317V301h1V317zM764,317V295h1V317zM765,317V302h1V317zM766,317V305h1V317zM767,317V314h1V317zM768,317V308h1V317zM769,317V307h1V317zM770,317V304h1V317zM771,317V307h1V317zM772,317V304h1V317zM773,317V305h1V317zM774,317V305h1V317zM775,317V308h1V317zM776,317V315h1V317zM777,317V303h1V317zM778,317V303h1V317zM779,317V304h1V317zM780,317V314h1V317zM781,317V314h1V317zM782,317V312h1V317zM783,317V305h1V317zM784,317V307h1V317zM785,317V306h1V317zM786,317V302h1V317zM787,317V293h1V317zM788,317V288h1V317zM789,317V308h1V317zM790,317V297h1V317zM791,317V282h1V317zM792,317V294h1V317zM793,317V295h1V317zM794,317V299h1V317zM795,317V313h1V317zM796,317V296h1V317zM797,317V313h1V317zM798,317V314h1V317zM799,317V305h1V317zM800,317V304h1V317zM801,317V308h1V317zM802,317V309h1V317zM803,317V293h1V317zM804,317V309h1V317zM805,317V308h1V317zM806,317V307h1V317zM807,317V309h1V317zM808,317V313h1V317zM809,317V305h1V317zM810,317V306h1V317zM811,317V302h1V317zM812,317V300h1V317zM814,317V298h1V317zM815,317V302h1V317zM817,317V309h1V317zM818,317V310h1V317zM819,317V308h1V317zM820,317V314h1V317zM821,317V310h1V317zM822,317V307h1V317zM824,317V316h1V317zM825,317V307h1V317zM826,317V304h1V317zM827,317V304h1V317zM828,317V300h1V317zM829,317V302h1V317zM830,317V298h1V317zM831,317V296h1V317zM832,317V272h1V317zM833,317V294h1V317zM834,317V294h1V317zM835,317V295h1V317zM836,317V294h1V317zM837,317V287h1V317zM839,317V314h1V317zM840,317V309h1V317zM841,317V305h1V317zM842,317V310h1V317zM843,317V304h1V317zM844,317V303h1V317zM845,317V305h1V317zM846,317V303h1V317zM847,317V304h1V317zM850,317V307h1V317zM851,317V310h1V317zM852,317V296h1V317zM853,317V311h1V317zM854,317V307h1V317zM855,317V309h1V317zM856,317V311h1V317zM857,317V310h1V317zM858,317V311h1V317zM859,317V309h1V317zM860,317V311h1V317zM861,317V315h1V317zM862,317V308h1V317zM863,317V312h1V317zM865,317V310h1V317zM866,317V296h1V317zM881,317V306h1V317zM882,317V307h1V317zM883,317V309h1V317zM884,317V310h1V317zM885,317V305h1V317zM886,317V308h1V317zM888,317V307h1V317zM889,317V309h1V317zM890,317V308h1V317zM891,317V307h1V317zM892,317V307h1V317zM893,317V310h1V317zM894,317V298h1V317zM895,317V292h1V317zM896,317V293h1V317zM897,317V288h1V317zM898,317V291h1V317zM899,317V295h1V317zM900,317V296h1V317zM901,317V293h1V317zM902,317V299h1V317zM903,317V304h1V317zM904,317V293h1V317zM905,317V303h1V317zM906,317V300h1V317zM907,317V303h1V317zM908,317V292h1V317zM909,317V295h1V317zM910,317V294h1V317zM911,317V290h1V317zM912,317V289h1V317zM913,317V298h1V317zM915,317V292h1V317zM916,317V304h1V317zM917,317V313h1V317zM918,317V309h1V317zM919,317V305h1V317zM920,317V308h1V317zM921,317V304h1V317zM922,317V305h1V317zM923,317V304h1V317zM924,317V304h1V317zM925,317V308h1V317zM926,317V306h1V317zM927,317V306h1V317zM928,317V306h1V317zM929,317V303h1V317zM930,317V299h1V317zM931,317V297h1V317zM932,317V300h1V317zM933,317V303h1V317zM935,317V301h1V317zM936,317V305h1V317zM937,317V304h1V317zM938,317V304h1V317zM939,317V303h1V317zM940,317V302h1V317zM941,317V296h1V317zM942,317V304h1V317zM943,317V302h1V317zM944,317V302h1V317zM945,317V313h1V317zM946,317V301h1V317zM947,317V305h1V317zM948,317V305h1V317zM949,317V303h1V317zM950,317V304h1V317zM951,317V303h1V317zM953,317V303h1V317zM954,317V303h1V317zM955,317V300h1V317zM956,317V304h1V317zM957,317V305h1V317zM959,317V303h1V317zM960,317V304h1V317zM961,317V306h1V317zM962,317V308h1V317zM963,317V302h1V317zM964,317V304h1V317zM965,317V303h1V317zM966,317V306h1V317zM967,317V313h1V317zM969,317V311h1V317zM970,317V308h1V317zM971,317V302h1V317zM972,317V291h1V317zM973,317V300h1V317zM974,317V297h1V317zM975,317V292h1V317zM976,317V295h1V317zM977,317V289h1V317zM978,317V292h1V317zM979,317V299h1V317zM980,317V297h1V317zM981,317V297h1V317zM982,317V288h1V317zM983,317V297h1V317zM984,317V303h1V317zM985,317V300h1V317zM986,317V303h1V317zM987,317V310h1V317zM988,317V309h1V317zM989,317V307h1V317zM990,317V308h1V317zM991,317V305h1V317zM992,317V306h1V317zM993,317V314h1V317zM994,317V299h1V317zM995,317V308h1V317zM996,317V308h1V317zM997,317V308h1V317zM998,317V307h1V317zM999,317V309h1V317zM1000,317V305h1V317zM1001,317V309h1V317zM1002,317V290h1V317zM1003,317V307h1V317zM1004,317V305h1V317zM1005,317V307h1V317zM1006,317V290h1V317zM1007,317V306h1V317zM1008,317V306h1V317zM1009,317V311h1V317zM1010,317V305h1V317zM1011,317V305h1V317zM1012,317V307h1V317zM1013,317V307h1V317zM1014,317V296h1V317zM1015,317V308h1V317zM1016,317V308h1V317zM1017,317V304h1V317zM1018,317V303h1V317zM1020,317V303h1V317zM1021,317V305h1V317zM1022,317V293h1V317zM1023,317V300h1V317zM1024,317V298h1V317zM1025,317V288h1V317zM1026,317V293h1V317zM1027,317V300h1V317zM1028,317V293h1V317zM1029,317V294h1V317zM1030,317V295h1V317zM1031,317V301h1V317zM1032,317V295h1V317zM1033,317V303h1V317zM1034,317V304h1V317zM1035,317V293h1V317zM1036,317V307h1V317zM1037,317V308h1V317zM1038,317V307h1V317zM1039,317V302h1V317zM1040,317V313h1V317zM1041,317V303h1V317zM1042,317V301h1V317zM1043,317V296h1V317zM1044,317V302h1V317z" fill="url(#org2)"/>
<rect x="29" y="249" width="1038" height="68" fill="url(#spk)" clip-path="url(#oclip)"/>
</svg>
<svg class="a" style="left:0;top:90px" width="1080" height="42" viewBox="0 90 1080 42">
<rect x="28.5" y="96.5" width="1039" height="31" fill="#464646" stroke="#9a9a9a" stroke-width="1"/>
<path d="M29,101.8 30,101.8 30,101.8 31,101.8 31,101.2 32,101.2 32,101.1 33,101.1 33,99.8 34,99.8 34,101.2 35,101.2 35,99.0 36,99.0 36,100.6 37,100.6 37,99.1 38,99.1 38,100.9 39,100.9 39,100.1 40,100.1 40,98.2 41,98.2 41,100.7 42,100.7 42,100.0 43,100.0 43,100.5 44,100.5 44,100.9 45,100.9 45,99.9 46,99.9 46,100.4 47,100.4 47,100.1 48,100.1 48,99.9 49,99.9 49,99.9 50,99.9 50,98.9 51,98.9 51,100.1 52,100.1 52,100.8 53,100.8 53,99.9 54,99.9 54,100.8 55,100.8 55,99.4 56,99.4 56,100.4 57,100.4 57,100.8 58,100.8 58,101.2 59,101.2 59,100.3 60,100.3 60,99.9 61,99.9 61,101.2 62,101.2 62,99.0 63,99.0 63,100.1 64,100.1 64,98.9 65,98.9 65,98.9 66,98.9 66,101.0 67,101.0 67,99.7 68,99.7 68,100.8 69,100.8 69,101.1 70,101.1 70,99.8 71,99.8 71,98.7 72,98.7 72,100.8 73,100.8 73,100.1 74,100.1 74,101.2 75,101.2 75,100.7 76,100.7 76,100.9 77,100.9 77,99.5 78,99.5 78,98.6 79,98.6 79,100.0 80,100.0 80,100.3 81,100.3 81,100.9 82,100.9 82,100.0 83,100.0 83,100.8 84,100.8 84,101.1 85,101.1 85,98.6 86,98.6 86,100.3 87,100.3 87,99.0 88,99.0 88,100.9 89,100.9 89,99.9 90,99.9 90,99.7 91,99.7 91,101.2 92,101.2 92,101.2 93,101.2 93,99.7 94,99.7 94,100.6 95,100.6 95,100.0 96,100.0 96,98.7 97,98.7 97,98.6 98,98.6 98,100.2 99,100.2 99,100.4 100,100.4 100,99.7 101,99.7 101,99.4 102,99.4 102,100.3 103,100.3 103,100.2 104,100.2 104,100.4 105,100.4 105,98.7 106,98.7 106,100.5 107,100.5 107,98.7 108,98.7 108,98.6 109,98.6 109,99.9 110,99.9 110,99.9 111,99.9 111,100.3 112,100.3 112,101.0 113,101.0 113,100.9 114,100.9 114,100.2 115,100.2 115,101.0 116,101.0 116,99.9 117,99.9 117,99.0 118,99.0 118,99.6 119,99.6 119,100.1 120,100.1 120,100.7 121,100.7 121,98.8 122,98.8 122,100.2 123,100.2 123,99.2 124,99.2 124,99.0 125,99.0 125,99.5 126,99.5 126,100.6 127,100.6 127,100.2 128,100.2 128,100.8 129,100.8 129,100.9 130,100.9 130,98.6 131,98.6 131,100.0 132,100.0 132,100.9 133,100.9 133,100.0 134,100.0 134,98.8 135,98.8 135,100.4 136,100.4 136,100.7 137,100.7 137,100.7 138,100.7 138,98.8 139,98.8 139,99.2 140,99.2 140,101.0 141,101.0 141,100.1 142,100.1 142,99.3 143,99.3 143,98.6 144,98.6 144,99.6 145,99.6 145,100.5 146,100.5 146,100.8 147,100.8 147,101.2 148,101.2 148,98.5 149,98.5 149,100.1 150,100.1 150,100.3 151,100.3 151,100.5 152,100.5 152,99.2 153,99.2 153,99.5 154,99.5 154,100.2 155,100.2 155,99.4 156,99.4 156,100.9 157,100.9 157,100.9 158,100.9 158,100.9 159,100.9 159,100.5 160,100.5 160,100.0 161,100.0 161,100.0 162,100.0 162,100.1 163,100.1 163,100.9 164,100.9 164,98.7 165,98.7 165,100.1 166,100.1 166,100.0 167,100.0 167,100.5 168,100.5 168,100.3 169,100.3 169,100.2 170,100.2 170,98.7 171,98.7 171,100.8 172,100.8 172,100.7 173,100.7 173,100.2 174,100.2 174,100.8 175,100.8 175,99.9 176,99.9 176,100.8 177,100.8 177,101.0 178,101.0 178,101.0 179,101.0 179,100.0 180,100.0 180,101.1 181,101.1 181,100.6 182,100.6 182,99.2 183,99.2 183,100.0 184,100.0 184,99.9 185,99.9 185,100.9 186,100.9 186,98.4 187,98.4 187,101.0 188,101.0 188,99.2 189,99.2 189,98.4 190,98.4 190,100.7 191,100.7 191,101.2 192,101.2 192,100.4 193,100.4 193,101.3 194,101.3 194,102.0 195,102.0 195,102.5 196,102.5 196,102.6 197,102.6 197,103.0 198,103.0 198,103.0 199,103.0 199,103.0 200,103.0 200,103.0 201,103.0 201,103.0 202,103.0 202,103.0 203,103.0 203,103.0 204,103.0 204,103.0 205,103.0 205,103.0 206,103.0 206,103.0 207,103.0 207,103.0 208,103.0 208,103.0 209,103.0 209,103.0 210,103.0 210,98.3 211,98.3 211,100.6 212,100.6 212,100.3 213,100.3 213,100.9 214,100.9 214,100.4 215,100.4 215,100.6 216,100.6 216,99.7 217,99.7 217,99.8 218,99.8 218,100.5 219,100.5 219,100.7 220,100.7 220,99.1 221,99.1 221,100.9 222,100.9 222,100.2 223,100.2 223,100.0 224,100.0 224,101.0 225,101.0 225,100.4 226,100.4 226,100.6 227,100.6 227,99.0 228,99.0 228,101.0 229,101.0 229,100.1 230,100.1 230,100.6 231,100.6 231,100.8 232,100.8 232,101.1 233,101.1 233,100.1 234,100.1 234,98.6 235,98.6 235,100.8 236,100.8 236,99.9 237,99.9 237,99.9 238,99.9 238,100.1 239,100.1 239,98.9 240,98.9 240,99.9 241,99.9 241,99.8 242,99.8 242,98.5 243,98.5 243,100.5 244,100.5 244,101.0 245,101.0 245,99.9 246,99.9 246,99.3 247,99.3 247,100.4 248,100.4 248,99.4 249,99.4 249,99.9 250,99.9 250,100.7 251,100.7 251,99.0 252,99.0 252,100.4 253,100.4 253,100.2 254,100.2 254,101.1 255,101.1 255,101.0 256,101.0 256,100.0 257,100.0 257,98.3 258,98.3 258,100.7 259,100.7 259,100.3 260,100.3 260,99.7 261,99.7 261,98.6 262,98.6 262,100.4 263,100.4 263,100.9 264,100.9 264,100.0 265,100.0 265,100.6 266,100.6 266,100.9 267,100.9 267,100.7 268,100.7 268,100.3 269,100.3 269,100.2 270,100.2 270,98.6 271,98.6 271,100.0 272,100.0 272,101.0 273,101.0 273,99.9 274,99.9 274,99.9 275,99.9 275,101.1 276,101.1 276,101.0 277,101.0 277,100.5 278,100.5 278,100.1 279,100.1 279,98.8 280,98.8 280,100.0 281,100.0 281,98.8 282,98.8 282,100.5 283,100.5 283,100.1 284,100.1 284,101.2 285,101.2 285,101.0 286,101.0 286,98.5 287,98.5 287,100.5 288,100.5 288,98.8 289,98.8 289,100.0 290,100.0 290,100.7 291,100.7 291,100.3 292,100.3 292,100.7 293,100.7 293,100.6 294,100.6 294,98.0 295,98.0 295,101.1 296,101.1 296,100.2 297,100.2 297,100.8 298,100.8 298,100.0 299,100.0 299,100.6 300,100.6 300,100.1 301,100.1 301,100.9 302,100.9 302,100.4 303,100.4 303,98.4 304,98.4 304,100.8 305,100.8 305,101.1 306,101.1 306,100.7 307,100.7 307,100.6 308,100.6 308,99.0 309,99.0 309,100.4 310,100.4 310,97.9 311,97.9 311,100.6 312,100.6 312,100.0 313,100.0 313,99.1 314,99.1 314,101.1 315,101.1 315,99.1 316,99.1 316,100.6 317,100.6 317,99.9 318,99.9 318,98.8 319,98.8 319,99.8 320,99.8 320,101.0 321,101.0 321,100.4 322,100.4 322,100.0 323,100.0 323,100.7 324,100.7 324,99.9 325,99.9 325,100.4 326,100.4 326,101.0 327,101.0 327,100.7 328,100.7 328,98.4 329,98.4 329,100.1 330,100.1 330,101.1 331,101.1 331,101.2 332,101.2 332,100.4 333,100.4 333,100.6 334,100.6 334,100.1 335,100.1 335,101.0 336,101.0 336,100.5 337,100.5 337,99.3 338,99.3 338,100.7 339,100.7 339,100.6 340,100.6 340,100.6 341,100.6 341,97.9 342,97.9 342,101.1 343,101.1 343,98.7 344,98.7 344,100.8 345,100.8 345,101.2 346,101.2 346,100.3 347,100.3 347,100.0 348,100.0 348,99.9 349,99.9 349,100.7 350,100.7 350,100.0 351,100.0 351,101.1 352,101.1 352,101.0 353,101.0 353,99.7 354,99.7 354,99.4 355,99.4 355,100.9 356,100.9 356,100.0 357,100.0 357,99.1 358,99.1 358,100.0 359,100.0 359,100.6 360,100.6 360,100.2 361,100.2 361,101.0 362,101.0 362,100.6 363,100.6 363,100.1 364,100.1 364,100.5 365,100.5 365,99.0 366,99.0 366,100.9 367,100.9 367,99.7 368,99.7 368,101.4 369,101.4 369,100.3 370,100.3 370,102.0 371,102.0 371,102.2 372,102.2 372,102.1 373,102.1 373,102.5 374,102.5 374,102.9 375,102.9 375,103.0 376,103.0 376,103.0 377,103.0 377,103.0 378,103.0 378,103.0 379,103.0 379,103.0 380,103.0 380,103.0 381,103.0 381,103.0 382,103.0 382,103.0 383,103.0 383,99.0 384,99.0 384,100.9 385,100.9 385,100.9 386,100.9 386,100.3 387,100.3 387,100.5 388,100.5 388,101.1 389,101.1 389,100.1 390,100.1 390,100.0 391,100.0 391,100.0 392,100.0 392,99.9 393,99.9 393,100.4 394,100.4 394,100.5 395,100.5 395,99.0 396,99.0 396,100.4 397,100.4 397,100.8 398,100.8 398,99.4 399,99.4 399,100.5 400,100.5 400,99.9 401,99.9 401,98.4 402,98.4 402,100.1 403,100.1 403,100.3 404,100.3 404,100.5 405,100.5 405,99.9 406,99.9 406,98.9 407,98.9 407,100.9 408,100.9 408,99.9 409,99.9 409,101.1 410,101.1 410,100.0 411,100.0 411,100.4 412,100.4 412,99.8 413,99.8 413,100.0 414,100.0 414,99.6 415,99.6 415,99.9 416,99.9 416,100.0 417,100.0 417,100.7 418,100.7 418,99.1 419,99.1 419,100.9 420,100.9 420,100.2 421,100.2 421,100.9 422,100.9 422,99.9 423,99.9 423,99.7 424,99.7 424,99.3 425,99.3 425,99.9 426,99.9 426,101.0 427,101.0 427,99.7 428,99.7 428,98.7 429,98.7 429,100.1 430,100.1 430,100.3 431,100.3 431,100.3 432,100.3 432,100.6 433,100.6 433,99.4 434,99.4 434,100.2 435,100.2 435,100.8 436,100.8 436,98.9 437,98.9 437,100.1 438,100.1 438,100.8 439,100.8 439,99.6 440,99.6 440,101.0 441,101.0 441,100.1 442,100.1 442,99.4 443,99.4 443,100.2 444,100.2 444,98.3 445,98.3 445,99.8 446,99.8 446,100.7 447,100.7 447,100.1 448,100.1 448,99.3 449,99.3 449,99.8 450,99.8 450,100.6 451,100.6 451,100.0 452,100.0 452,100.0 453,100.0 453,99.7 454,99.7 454,99.7 455,99.7 455,100.8 456,100.8 456,100.7 457,100.7 457,99.8 458,99.8 458,101.0 459,101.0 459,100.5 460,100.5 460,101.0 461,101.0 461,100.2 462,100.2 462,98.9 463,98.9 463,98.2 464,98.2 464,100.4 465,100.4 465,100.5 466,100.5 466,100.0 467,100.0 467,100.3 468,100.3 468,100.4 469,100.4 469,99.0 470,99.0 470,100.4 471,100.4 471,99.2 472,99.2 472,99.0 473,99.0 473,98.7 474,98.7 474,101.0 475,101.0 475,99.0 476,99.0 476,101.0 477,101.0 477,100.4 478,100.4 478,98.3 479,98.3 479,100.0 480,100.0 480,100.5 481,100.5 481,99.3 482,99.3 482,99.1 483,99.1 483,100.5 484,100.5 484,101.1 485,101.1 485,99.8 486,99.8 486,101.0 487,101.0 487,100.0 488,100.0 488,100.5 489,100.5 489,100.0 490,100.0 490,100.6 491,100.6 491,100.7 492,100.7 492,99.8 493,99.8 493,100.1 494,100.1 494,100.3 495,100.3 495,100.9 496,100.9 496,100.6 497,100.6 497,99.4 498,99.4 498,100.3 499,100.3 499,100.0 500,100.0 500,99.5 501,99.5 501,99.8 502,99.8 502,98.8 503,98.8 503,100.2 504,100.2 504,100.1 505,100.1 505,101.0 506,101.0 506,99.9 507,99.9 507,101.1 508,101.1 508,99.9 509,99.9 509,99.9 510,99.9 510,99.1 511,99.1 511,100.3 512,100.3 512,100.9 513,100.9 513,98.6 514,98.6 514,99.6 515,99.6 515,100.7 516,100.7 516,100.8 517,100.8 517,99.8 518,99.8 518,100.2 519,100.2 519,100.3 520,100.3 520,100.1 521,100.1 521,99.1 522,99.1 522,100.4 523,100.4 523,100.3 524,100.3 524,98.2 525,98.2 525,100.0 526,100.0 526,100.2 527,100.2 527,100.1 528,100.1 528,100.9 529,100.9 529,100.8 530,100.8 530,100.1 531,100.1 531,100.6 532,100.6 532,100.4 533,100.4 533,100.9 534,100.9 534,100.8 535,100.8 535,100.3 536,100.3 536,101.1 537,101.1 537,100.0 538,100.0 538,100.2 539,100.2 539,99.9 540,99.9 540,101.0 541,101.0 541,100.6 542,100.6 542,100.4 543,100.4 543,101.6 544,101.6 544,101.2 545,101.2 545,101.8 546,101.8 546,101.2 547,101.2 547,102.0 548,102.0 548,102.5 549,102.5 549,103.0 550,103.0 550,103.0 551,103.0 551,103.0 552,103.0 552,103.0 553,103.0 553,103.0 554,103.0 554,103.0 555,103.0 555,103.0 556,103.0 556,103.0 557,103.0 557,103.0 558,103.0 558,98.3 559,98.3 559,100.7 560,100.7 560,100.6 561,100.6 561,100.1 562,100.1 562,99.9 563,99.9 563,98.7 564,98.7 564,100.9 565,100.9 565,100.5 566,100.5 566,100.9 567,100.9 567,100.8 568,100.8 568,100.7 569,100.7 569,98.9 570,98.9 570,101.2 571,101.2 571,99.0 572,99.0 572,98.9 573,98.9 573,101.1 574,101.1 574,99.4 575,99.4 575,99.2 576,99.2 576,100.5 577,100.5 577,100.9 578,100.9 578,99.5 579,99.5 579,101.0 580,101.0 580,100.4 581,100.4 581,100.1 582,100.1 582,100.1 583,100.1 583,100.1 584,100.1 584,100.1 585,100.1 585,100.1 586,100.1 586,101.2 587,101.2 587,98.8 588,98.8 588,100.2 589,100.2 589,100.8 590,100.8 590,100.2 591,100.2 591,100.6 592,100.6 592,100.6 593,100.6 593,98.3 594,98.3 594,100.0 595,100.0 595,100.5 596,100.5 596,100.0 597,100.0 597,100.1 598,100.1 598,101.1 599,101.1 599,100.7 600,100.7 600,101.1 601,101.1 601,99.1 602,99.1 602,99.8 603,99.8 603,101.0 604,101.0 604,100.5 605,100.5 605,100.8 606,100.8 606,100.7 607,100.7 607,100.0 608,100.0 608,100.6 609,100.6 609,101.2 610,101.2 610,100.1 611,100.1 611,100.4 612,100.4 612,100.3 613,100.3 613,99.1 614,99.1 614,99.6 615,99.6 615,100.2 616,100.2 616,100.4 617,100.4 617,100.0 618,100.0 618,99.0 619,99.0 619,100.3 620,100.3 620,100.5 621,100.5 621,100.3 622,100.3 622,100.3 623,100.3 623,101.0 624,101.0 624,100.4 625,100.4 625,100.8 626,100.8 626,100.4 627,100.4 627,101.3 628,101.3 628,101.3 629,101.3 629,99.5 630,99.5 630,100.0 631,100.0 631,100.2 632,100.2 632,100.9 633,100.9 633,99.0 634,99.0 634,101.2 635,101.2 635,100.2 636,100.2 636,100.3 637,100.3 637,100.8 638,100.8 638,100.6 639,100.6 639,99.9 640,99.9 640,99.3 641,99.3 641,101.0 642,101.0 642,100.6 643,100.6 643,99.5 644,99.5 644,100.2 645,100.2 645,101.1 646,101.1 646,100.4 647,100.4 647,99.3 648,99.3 648,101.0 649,101.0 649,100.9 650,100.9 650,100.2 651,100.2 651,101.0 652,101.0 652,100.9 653,100.9 653,100.5 654,100.5 654,101.1 655,101.1 655,99.3 656,99.3 656,100.5 657,100.5 657,99.6 658,99.6 658,100.1 659,100.1 659,100.2 660,100.2 660,99.9 661,99.9 661,98.7 662,98.7 662,101.2 663,101.2 663,100.3 664,100.3 664,99.8 665,99.8 665,99.3 666,99.3 666,101.2 667,101.2 667,100.8 668,100.8 668,100.6 669,100.6 669,100.2 670,100.2 670,100.4 671,100.4 671,101.2 672,101.2 672,100.9 673,100.9 673,100.1 674,100.1 674,101.2 675,101.2 675,101.1 676,101.1 676,100.3 677,100.3 677,100.0 678,100.0 678,100.1 679,100.1 679,100.6 680,100.6 680,100.3 681,100.3 681,100.7 682,100.7 682,98.8 683,98.8 683,101.2 684,101.2 684,100.1 685,100.1 685,100.3 686,100.3 686,100.7 687,100.7 687,100.0 688,100.0 688,100.5 689,100.5 689,100.1 690,100.1 690,100.3 691,100.3 691,100.1 692,100.1 692,100.2 693,100.2 693,100.4 694,100.4 694,98.5 695,98.5 695,100.5 696,100.5 696,99.6 697,99.6 697,100.1 698,100.1 698,99.9 699,99.9 699,100.0 700,100.0 700,101.2 701,101.2 701,100.7 702,100.7 702,99.3 703,99.3 703,100.7 704,100.7 704,98.9 705,98.9 705,100.4 706,100.4 706,99.1 707,99.1 707,99.8 708,99.8 708,100.0 709,100.0 709,99.8 710,99.8 710,100.8 711,100.8 711,98.4 712,98.4 712,100.9 713,100.9 713,100.6 714,100.6 714,100.7 715,100.7 715,100.6 716,100.6 716,100.9 717,100.9 717,100.9 718,100.9 718,99.4 719,99.4 719,101.0 720,101.0 720,99.5 721,99.5 721,100.6 722,100.6 722,101.1 723,101.1 723,98.9 724,98.9 724,100.1 725,100.1 725,101.2 726,101.2 726,100.0 727,100.0 727,100.7 728,100.7 728,100.6 729,100.6 729,101.0 730,101.0 730,99.7 731,99.7 731,101.3 732,101.3 732,101.0 733,101.0 733,101.9 734,101.9 734,101.8 735,101.8 735,102.4 736,102.4 736,102.8 737,102.8 737,103.0 738,103.0 738,103.0 739,103.0 739,103.0 740,103.0 740,103.0 741,103.0 741,103.0 742,103.0 742,103.0 743,103.0 743,103.0 744,103.0 744,103.0 745,103.0 745,103.0 746,103.0 746,100.5 747,100.5 747,100.9 748,100.9 748,99.1 749,99.1 749,99.5 750,99.5 750,100.5 751,100.5 751,100.8 752,100.8 752,100.5 753,100.5 753,100.6 754,100.6 754,99.4 755,99.4 755,99.1 756,99.1 756,100.5 757,100.5 757,99.4 758,99.4 758,99.8 759,99.8 759,100.5 760,100.5 760,100.9 761,100.9 761,100.0 762,100.0 762,99.7 763,99.7 763,100.3 764,100.3 764,100.0 765,100.0 765,99.5 766,99.5 766,98.7 767,98.7 767,100.5 768,100.5 768,100.3 769,100.3 769,100.6 770,100.6 770,99.7 771,99.7 771,98.6 772,98.6 772,98.3 773,98.3 773,100.3 774,100.3 774,99.2 775,99.2 775,98.6 776,98.6 776,100.2 777,100.2 777,99.6 778,99.6 778,100.0 779,100.0 779,99.8 780,99.8 780,99.0 781,99.0 781,100.9 782,100.9 782,99.9 783,99.9 783,98.9 784,98.9 784,100.1 785,100.1 785,101.1 786,101.1 786,100.2 787,100.2 787,99.4 788,99.4 788,100.6 789,100.6 789,100.9 790,100.9 790,99.2 791,99.2 791,98.8 792,98.8 792,100.5 793,100.5 793,98.9 794,98.9 794,101.0 795,101.0 795,99.9 796,99.9 796,99.8 797,99.8 797,100.0 798,100.0 798,101.0 799,101.0 799,100.0 800,100.0 800,99.7 801,99.7 801,99.9 802,99.9 802,100.0 803,100.0 803,100.7 804,100.7 804,98.8 805,98.8 805,100.1 806,100.1 806,98.8 807,98.8 807,99.3 808,99.3 808,98.8 809,98.8 809,99.8 810,99.8 810,99.2 811,99.2 811,100.3 812,100.3 812,100.6 813,100.6 813,100.0 814,100.0 814,100.0 815,100.0 815,99.9 816,99.9 816,99.0 817,99.0 817,98.4 818,98.4 818,101.1 819,101.1 819,99.3 820,99.3 820,100.9 821,100.9 821,101.0 822,101.0 822,98.5 823,98.5 823,99.6 824,99.6 824,98.5 825,98.5 825,100.2 826,100.2 826,98.8 827,98.8 827,98.9 828,98.9 828,100.8 829,100.8 829,100.3 830,100.3 830,100.0 831,100.0 831,100.1 832,100.1 832,100.3 833,100.3 833,98.9 834,98.9 834,100.2 835,100.2 835,100.3 836,100.3 836,99.4 837,99.4 837,100.1 838,100.1 838,101.0 839,101.0 839,98.2 840,98.2 840,98.2 841,98.2 841,101.0 842,101.0 842,100.0 843,100.0 843,100.4 844,100.4 844,98.9 845,98.9 845,100.2 846,100.2 846,100.8 847,100.8 847,100.8 848,100.8 848,99.9 849,99.9 849,99.1 850,99.1 850,100.9 851,100.9 851,100.7 852,100.7 852,100.5 853,100.5 853,101.0 854,101.0 854,100.7 855,100.7 855,100.1 856,100.1 856,100.1 857,100.1 857,100.3 858,100.3 858,100.3 859,100.3 859,98.7 860,98.7 860,100.6 861,100.6 861,101.0 862,101.0 862,100.5 863,100.5 863,99.8 864,99.8 864,100.0 865,100.0 865,100.1 866,100.1 866,101.3 867,101.3 867,101.7 868,101.7 868,100.8 869,100.8 869,101.3 870,101.3 870,102.1 871,102.1 871,102.1 872,102.1 872,102.6 873,102.6 873,103.0 874,103.0 874,103.0 875,103.0 875,103.0 876,103.0 876,103.0 877,103.0 877,103.0 878,103.0 878,103.0 879,103.0 879,103.0 880,103.0 880,103.0 881,103.0 881,100.2 882,100.2 882,100.9 883,100.9 883,101.0 884,101.0 884,98.6 885,98.6 885,100.2 886,100.2 886,100.6 887,100.6 887,100.4 888,100.4 888,100.1 889,100.1 889,100.4 890,100.4 890,99.3 891,99.3 891,100.8 892,100.8 892,99.4 893,99.4 893,100.7 894,100.7 894,100.3 895,100.3 895,100.1 896,100.1 896,100.1 897,100.1 897,100.0 898,100.0 898,100.5 899,100.5 899,100.9 900,100.9 900,101.2 901,101.2 901,100.3 902,100.3 902,100.5 903,100.5 903,100.7 904,100.7 904,100.2 905,100.2 905,100.2 906,100.2 906,100.8 907,100.8 907,100.5 908,100.5 908,98.5 909,98.5 909,100.2 910,100.2 910,101.0 911,101.0 911,100.5 912,100.5 912,100.6 913,100.6 913,99.5 914,99.5 914,100.0 915,100.0 915,99.1 916,99.1 916,100.9 917,100.9 917,100.5 918,100.5 918,100.4 919,100.4 919,99.1 920,99.1 920,101.0 921,101.0 921,99.9 922,99.9 922,101.0 923,101.0 923,100.0 924,100.0 924,100.1 925,100.1 925,100.7 926,100.7 926,99.9 927,99.9 927,100.1 928,100.1 928,100.1 929,100.1 929,98.2 930,98.2 930,99.1 931,99.1 931,99.5 932,99.5 932,99.9 933,99.9 933,99.9 934,99.9 934,100.0 935,100.0 935,100.0 936,100.0 936,99.8 937,99.8 937,99.0 938,99.0 938,100.1 939,100.1 939,100.5 940,100.5 940,100.8 941,100.8 941,100.6 942,100.6 942,100.4 943,100.4 943,100.8 944,100.8 944,100.2 945,100.2 945,99.7 946,99.7 946,100.6 947,100.6 947,101.1 948,101.1 948,99.7 949,99.7 949,101.0 950,101.0 950,99.4 951,99.4 951,100.9 952,100.9 952,98.6 953,98.6 953,100.0 954,100.0 954,98.8 955,98.8 955,100.1 956,100.1 956,100.4 957,100.4 957,100.1 958,100.1 958,100.6 959,100.6 959,100.9 960,100.9 960,101.1 961,101.1 961,101.0 962,101.0 962,100.7 963,100.7 963,101.0 964,101.0 964,100.1 965,100.1 965,101.2 966,101.2 966,100.9 967,100.9 967,98.8 968,98.8 968,100.6 969,100.6 969,99.8 970,99.8 970,101.2 971,101.2 971,100.0 972,100.0 972,100.5 973,100.5 973,99.8 974,99.8 974,99.9 975,99.9 975,100.3 976,100.3 976,101.2 977,101.2 977,100.6 978,100.6 978,100.2 979,100.2 979,100.7 980,100.7 980,101.1 981,101.1 981,100.0 982,100.0 982,98.4 983,98.4 983,100.3 984,100.3 984,100.4 985,100.4 985,100.4 986,100.4 986,98.9 987,98.9 987,101.1 988,101.1 988,100.3 989,100.3 989,100.3 990,100.3 990,100.6 991,100.6 991,101.1 992,101.1 992,100.6 993,100.6 993,98.3 994,98.3 994,101.0 995,101.0 995,101.1 996,101.1 996,99.9 997,99.9 997,100.9 998,100.9 998,99.4 999,99.4 999,99.3 1000,99.3 1000,101.1 1001,101.1 1001,100.0 1002,100.0 1002,100.4 1003,100.4 1003,100.5 1004,100.5 1004,99.7 1005,99.7 1005,100.1 1006,100.1 1006,101.0 1007,101.0 1007,101.0 1008,101.0 1008,100.1 1009,100.1 1009,99.3 1010,99.3 1010,99.1 1011,99.1 1011,101.1 1012,101.1 1012,99.4 1013,99.4 1013,99.5 1014,99.5 1014,100.5 1015,100.5 1015,101.0 1016,101.0 1016,99.8 1017,99.8 1017,99.9 1018,99.9 1018,100.4 1019,100.4 1019,100.4 1020,100.4 1020,100.1 1021,100.1 1021,99.7 1022,99.7 1022,98.9 1023,98.9 1023,99.8 1024,99.8 1024,100.1 1025,100.1 1025,100.7 1026,100.7 1026,99.1 1027,99.1 1027,99.0 1028,99.0 1028,99.7 1029,99.7 1029,98.5 1030,98.5 1030,99.9 1031,99.9 1031,100.7 1032,100.7 1032,99.5 1033,99.5 1033,98.6 1034,98.6 1034,101.1 1035,101.1 1035,100.6 1036,100.6 1036,100.0 1037,100.0 1037,100.3 1038,100.3 1038,99.0 1039,99.0 1039,101.1 1040,101.1 1040,100.7 1041,100.7 1041,100.0 1042,100.0 1042,100.4 1043,100.4 1043,100.9 1044,100.9 1044,99.8 1045,99.8 1045,100.3 1046,100.3 1046,100.8 1047,100.8 1047,100.5 1048,100.5 1048,101.4 1049,101.4 1049,102.0 1050,102.0 1050,102.4 1051,102.4 1051,102.9 1052,102.9 1052,103.0 1053,103.0 1053,103.0 1054,103.0 1054,103.0 1055,103.0 1055,103.0 1056,103.0 1056,103.0 1057,103.0 1057,103.0 1058,103.0 1058,103.0 1059,103.0 1059,103.0 1060,103.0 1060,103.0 1061,103.0 1061,103.0 1062,103.0 1062,103.0 1063,103.0 1063,103.0 1064,103.0 1064,103.0 1065,103.0 1065,103.0 1066,103.0 1066,103.0 1067,103.0 L1067,104.8 1066,104.8 1066,104.8 1065,104.8 1065,104.8 1064,104.8 1064,104.8 1063,104.8 1063,104.8 1062,104.8 1062,104.8 1061,104.8 1061,104.8 1060,104.8 1060,104.8 1059,104.8 1059,104.8 1058,104.8 1058,104.8 1057,104.8 1057,104.8 1056,104.8 1056,104.8 1055,104.8 1055,104.8 1054,104.8 1054,104.8 1053,104.8 1053,104.8 1052,104.8 1052,105.2 1051,105.2 1051,105.4 1050,105.4 1050,105.9 1049,105.9 1049,106.3 1048,106.3 1048,107.2 1047,107.2 1047,106.2 1046,106.2 1046,107.1 1045,107.1 1045,107.4 1044,107.4 1044,107.4 1043,107.4 1043,108.0 1042,108.0 1042,106.7 1041,106.7 1041,108.7 1040,108.7 1040,108.0 1039,108.0 1039,106.7 1038,106.7 1038,107.3 1037,107.3 1037,107.2 1036,107.2 1036,106.8 1035,106.8 1035,107.6 1034,107.6 1034,109.4 1033,109.4 1033,108.2 1032,108.2 1032,107.1 1031,107.1 1031,106.9 1030,106.9 1030,107.7 1029,107.7 1029,108.8 1028,108.8 1028,107.3 1027,107.3 1027,109.1 1026,109.1 1026,107.5 1025,107.5 1025,108.4 1024,108.4 1024,107.0 1023,107.0 1023,108.2 1022,108.2 1022,107.8 1021,107.8 1021,107.3 1020,107.3 1020,108.3 1019,108.3 1019,106.7 1018,106.7 1018,108.8 1017,108.8 1017,108.1 1016,108.1 1016,108.7 1015,108.7 1015,108.4 1014,108.4 1014,107.7 1013,107.7 1013,107.4 1012,107.4 1012,107.3 1011,107.3 1011,107.6 1010,107.6 1010,107.8 1009,107.8 1009,109.2 1008,109.2 1008,109.2 1007,109.2 1007,106.8 1006,106.8 1006,107.2 1005,107.2 1005,107.5 1004,107.5 1004,106.7 1003,106.7 1003,107.4 1002,107.4 1002,109.5 1001,109.5 1001,108.5 1000,108.5 1000,107.8 999,107.8 999,107.8 998,107.8 998,108.1 997,108.1 997,107.1 996,107.1 996,108.1 995,108.1 995,107.1 994,107.1 994,106.9 993,106.9 993,106.7 992,106.7 992,107.3 991,107.3 991,107.9 990,107.9 990,107.4 989,107.4 989,108.1 988,108.1 988,106.6 987,106.6 987,106.7 986,106.7 986,107.9 985,107.9 985,107.0 984,107.0 984,108.1 983,108.1 983,107.1 982,107.1 982,107.9 981,107.9 981,107.0 980,107.0 980,107.8 979,107.8 979,108.6 978,108.6 978,107.0 977,107.0 977,107.8 976,107.8 976,107.4 975,107.4 975,106.8 974,106.8 974,108.5 973,108.5 973,107.9 972,107.9 972,107.5 971,107.5 971,108.0 970,108.0 970,107.3 969,107.3 969,107.1 968,107.1 968,107.6 967,107.6 967,106.7 966,106.7 966,108.5 965,108.5 965,108.0 964,108.0 964,108.0 963,108.0 963,108.5 962,108.5 962,106.8 961,106.8 961,109.9 960,109.9 960,107.6 959,107.6 959,107.5 958,107.5 958,106.8 957,106.8 957,107.8 956,107.8 956,107.9 955,107.9 955,107.9 954,107.9 954,107.8 953,107.8 953,108.8 952,108.8 952,108.9 951,108.9 951,107.4 950,107.4 950,108.2 949,108.2 949,107.4 948,107.4 948,107.2 947,107.2 947,106.8 946,106.8 946,108.6 945,108.6 945,107.6 944,107.6 944,106.7 943,106.7 943,106.7 942,106.7 942,107.8 941,107.8 941,108.2 940,108.2 940,107.6 939,107.6 939,107.5 938,107.5 938,107.2 937,107.2 937,107.4 936,107.4 936,107.0 935,107.0 935,106.7 934,106.7 934,109.0 933,109.0 933,107.4 932,107.4 932,107.7 931,107.7 931,107.4 930,107.4 930,109.4 929,109.4 929,108.0 928,108.0 928,107.7 927,107.7 927,107.0 926,107.0 926,109.8 925,109.8 925,108.0 924,108.0 924,109.2 923,109.2 923,107.7 922,107.7 922,108.0 921,108.0 921,107.7 920,107.7 920,107.3 919,107.3 919,107.2 918,107.2 918,108.9 917,108.9 917,106.7 916,106.7 916,107.1 915,107.1 915,107.4 914,107.4 914,108.0 913,108.0 913,107.2 912,107.2 912,106.7 911,106.7 911,107.4 910,107.4 910,107.6 909,107.6 909,107.6 908,107.6 908,107.6 907,107.6 907,107.1 906,107.1 906,106.6 905,106.6 905,107.4 904,107.4 904,107.8 903,107.8 903,107.7 902,107.7 902,107.6 901,107.6 901,108.9 900,108.9 900,107.5 899,107.5 899,108.7 898,108.7 898,109.2 897,109.2 897,109.2 896,109.2 896,107.0 895,107.0 895,106.7 894,106.7 894,107.8 893,107.8 893,107.7 892,107.7 892,106.9 891,106.9 891,107.4 890,107.4 890,107.6 889,107.6 889,109.5 888,109.5 888,106.8 887,106.8 887,108.5 886,108.5 886,107.4 885,107.4 885,107.1 884,107.1 884,109.2 883,109.2 883,107.3 882,107.3 882,108.4 881,108.4 881,104.8 880,104.8 880,104.8 879,104.8 879,104.8 878,104.8 878,104.8 877,104.8 877,104.8 876,104.8 876,104.8 875,104.8 875,104.8 874,104.8 874,104.8 873,104.8 873,104.8 872,104.8 872,105.7 871,105.7 871,105.6 870,105.6 870,107.0 869,107.0 869,106.3 868,106.3 868,106.3 867,106.3 867,106.3 866,106.3 866,109.1 865,109.1 865,107.3 864,107.3 864,106.8 863,106.8 863,107.7 862,107.7 862,108.5 861,108.5 861,108.1 860,108.1 860,108.7 859,108.7 859,108.2 858,108.2 858,108.2 857,108.2 857,108.0 856,108.0 856,107.2 855,107.2 855,106.8 854,106.8 854,107.4 853,107.4 853,108.5 852,108.5 852,107.1 851,107.1 851,107.1 850,107.1 850,108.6 849,108.6 849,107.0 848,107.0 848,107.4 847,107.4 847,108.9 846,108.9 846,108.1 845,108.1 845,107.7 844,107.7 844,107.4 843,107.4 843,107.0 842,107.0 842,108.0 841,108.0 841,106.7 840,106.7 840,107.5 839,107.5 839,108.0 838,108.0 838,107.6 837,107.6 837,106.8 836,106.8 836,107.7 835,107.7 835,109.2 834,109.2 834,106.9 833,106.9 833,107.4 832,107.4 832,107.4 831,107.4 831,108.4 830,108.4 830,107.8 829,107.8 829,107.4 828,107.4 828,107.2 827,107.2 827,108.7 826,108.7 826,108.6 825,108.6 825,107.6 824,107.6 824,107.3 823,107.3 823,108.0 822,108.0 822,108.8 821,108.8 821,107.7 820,107.7 820,108.2 819,108.2 819,109.9 818,109.9 818,108.3 817,108.3 817,107.0 816,107.0 816,109.1 815,109.1 815,107.7 814,107.7 814,108.3 813,108.3 813,106.9 812,106.9 812,107.0 811,107.0 811,107.1 810,107.1 810,107.2 809,107.2 809,106.7 808,106.7 808,107.9 807,107.9 807,107.5 806,107.5 806,107.7 805,107.7 805,106.7 804,106.7 804,107.3 803,107.3 803,107.3 802,107.3 802,107.5 801,107.5 801,106.9 800,106.9 800,107.9 799,107.9 799,108.0 798,108.0 798,107.2 797,107.2 797,107.1 796,107.1 796,108.5 795,108.5 795,108.8 794,108.8 794,107.4 793,107.4 793,107.4 792,107.4 792,107.6 791,107.6 791,108.0 790,108.0 790,107.8 789,107.8 789,107.9 788,107.9 788,106.8 787,106.8 787,108.1 786,108.1 786,107.6 785,107.6 785,108.9 784,108.9 784,107.2 783,107.2 783,108.6 782,108.6 782,106.7 781,106.7 781,106.8 780,106.8 780,108.0 779,108.0 779,107.0 778,107.0 778,109.4 777,109.4 777,107.7 776,107.7 776,106.9 775,106.9 775,108.3 774,108.3 774,109.4 773,109.4 773,107.7 772,107.7 772,108.7 771,108.7 771,107.1 770,107.1 770,107.9 769,107.9 769,107.6 768,107.6 768,107.3 767,107.3 767,107.4 766,107.4 766,107.2 765,107.2 765,108.0 764,108.0 764,109.1 763,109.1 763,107.3 762,107.3 762,107.4 761,107.4 761,107.4 760,107.4 760,108.1 759,108.1 759,107.5 758,107.5 758,108.0 757,108.0 757,107.8 756,107.8 756,108.0 755,108.0 755,107.3 754,107.3 754,107.8 753,107.8 753,108.9 752,108.9 752,106.7 751,106.7 751,108.1 750,108.1 750,107.7 749,107.7 749,107.1 748,107.1 748,106.8 747,106.8 747,107.3 746,107.3 746,104.8 745,104.8 745,104.8 744,104.8 744,104.8 743,104.8 743,104.8 742,104.8 742,104.8 741,104.8 741,104.8 740,104.8 740,104.8 739,104.8 739,104.8 738,104.8 738,104.8 737,104.8 737,105.2 736,105.2 736,105.3 735,105.3 735,105.5 734,105.5 734,105.7 733,105.7 733,107.1 732,107.1 732,107.1 731,107.1 731,106.9 730,106.9 730,107.5 729,107.5 729,106.5 728,106.5 728,107.5 727,107.5 727,107.0 726,107.0 726,107.6 725,107.6 725,106.6 724,106.6 724,109.3 723,109.3 723,106.8 722,106.8 722,109.2 721,109.2 721,107.7 720,107.7 720,108.5 719,108.5 719,108.5 718,108.5 718,107.3 717,107.3 717,107.9 716,107.9 716,106.9 715,106.9 715,107.3 714,107.3 714,107.4 713,107.4 713,107.6 712,107.6 712,108.8 711,108.8 711,107.3 710,107.3 710,106.7 709,106.7 709,106.5 708,106.5 708,107.6 707,107.6 707,108.8 706,108.8 706,108.5 705,108.5 705,106.9 704,106.9 704,108.4 703,108.4 703,106.8 702,106.8 702,107.6 701,107.6 701,107.3 700,107.3 700,107.5 699,107.5 699,109.0 698,109.0 698,108.2 697,108.2 697,106.7 696,106.7 696,108.1 695,108.1 695,107.4 694,107.4 694,106.5 693,106.5 693,106.7 692,106.7 692,107.2 691,107.2 691,108.8 690,108.8 690,107.6 689,107.6 689,106.9 688,106.9 688,106.8 687,106.8 687,108.4 686,108.4 686,107.0 685,107.0 685,108.6 684,108.6 684,106.8 683,106.8 683,108.5 682,108.5 682,108.3 681,108.3 681,107.7 680,107.7 680,107.2 679,107.2 679,107.0 678,107.0 678,108.4 677,108.4 677,106.9 676,106.9 676,108.5 675,108.5 675,107.3 674,107.3 674,107.0 673,107.0 673,108.6 672,108.6 672,107.8 671,107.8 671,106.8 670,106.8 670,108.2 669,108.2 669,107.7 668,107.7 668,107.2 667,107.2 667,108.6 666,108.6 666,108.2 665,108.2 665,107.9 664,107.9 664,109.7 663,109.7 663,106.7 662,106.7 662,109.4 661,109.4 661,109.5 660,109.5 660,108.6 659,108.6 659,106.8 658,106.8 658,106.7 657,106.7 657,109.5 656,109.5 656,107.1 655,107.1 655,108.8 654,108.8 654,107.1 653,107.1 653,107.0 652,107.0 652,106.7 651,106.7 651,107.3 650,107.3 650,107.8 649,107.8 649,106.9 648,106.9 648,108.1 647,108.1 647,108.6 646,108.6 646,107.1 645,107.1 645,107.6 644,107.6 644,107.4 643,107.4 643,106.7 642,106.7 642,107.2 641,107.2 641,107.5 640,107.5 640,106.9 639,106.9 639,107.1 638,107.1 638,107.7 637,107.7 637,107.6 636,107.6 636,106.9 635,106.9 635,107.8 634,107.8 634,108.2 633,108.2 633,106.8 632,106.8 632,106.6 631,106.6 631,107.4 630,107.4 630,106.7 629,106.7 629,107.3 628,107.3 628,107.9 627,107.9 627,107.8 626,107.8 626,107.7 625,107.7 625,106.9 624,106.9 624,108.5 623,108.5 623,107.7 622,107.7 622,106.6 621,106.6 621,107.4 620,107.4 620,108.2 619,108.2 619,108.6 618,108.6 618,109.3 617,109.3 617,108.8 616,108.8 616,107.6 615,107.6 615,108.7 614,108.7 614,106.9 613,106.9 613,107.4 612,107.4 612,108.1 611,108.1 611,106.5 610,106.5 610,108.1 609,108.1 609,107.8 608,107.8 608,107.8 607,107.8 607,107.4 606,107.4 606,109.3 605,109.3 605,107.6 604,107.6 604,109.0 603,109.0 603,107.4 602,107.4 602,109.4 601,109.4 601,107.1 600,107.1 600,107.2 599,107.2 599,107.9 598,107.9 598,107.1 597,107.1 597,107.5 596,107.5 596,109.3 595,109.3 595,108.2 594,108.2 594,107.7 593,107.7 593,108.7 592,108.7 592,107.9 591,107.9 591,108.0 590,108.0 590,106.8 589,106.8 589,106.8 588,106.8 588,107.2 587,107.2 587,106.6 586,106.6 586,107.0 585,107.0 585,107.8 584,107.8 584,107.0 583,107.0 583,106.7 582,106.7 582,107.6 581,107.6 581,107.6 580,107.6 580,107.8 579,107.8 579,107.0 578,107.0 578,106.9 577,106.9 577,107.0 576,107.0 576,107.5 575,107.5 575,107.1 574,107.1 574,106.8 573,106.8 573,106.5 572,106.5 572,109.2 571,109.2 571,108.5 570,108.5 570,107.5 569,107.5 569,106.5 568,106.5 568,108.2 567,108.2 567,108.8 566,108.8 566,108.1 565,108.1 565,107.5 564,107.5 564,106.9 563,106.9 563,107.2 562,107.2 562,107.3 561,107.3 561,106.7 560,106.7 560,107.8 559,107.8 559,107.4 558,107.4 558,104.8 557,104.8 557,104.8 556,104.8 556,104.8 555,104.8 555,104.8 554,104.8 554,104.8 553,104.8 553,104.8 552,104.8 552,104.8 551,104.8 551,104.8 550,104.8 550,104.9 549,104.9 549,105.8 548,105.8 548,105.5 547,105.5 547,106.4 546,106.4 546,105.9 545,105.9 545,107.9 544,107.9 544,107.3 543,107.3 543,106.5 542,106.5 542,107.4 541,107.4 541,107.9 540,107.9 540,108.0 539,108.0 539,107.4 538,107.4 538,109.1 537,109.1 537,109.0 536,109.0 536,107.7 535,107.7 535,107.9 534,107.9 534,107.3 533,107.3 533,107.3 532,107.3 532,108.2 531,108.2 531,107.9 530,107.9 530,107.9 529,107.9 529,107.7 528,107.7 528,107.0 527,107.0 527,107.2 526,107.2 526,107.5 525,107.5 525,106.7 524,106.7 524,107.9 523,107.9 523,107.6 522,107.6 522,109.1 521,109.1 521,107.4 520,107.4 520,108.2 519,108.2 519,108.0 518,108.0 518,108.7 517,108.7 517,107.7 516,107.7 516,108.0 515,108.0 515,107.3 514,107.3 514,108.1 513,108.1 513,108.0 512,108.0 512,107.8 511,107.8 511,106.9 510,106.9 510,107.8 509,107.8 509,107.2 508,107.2 508,108.3 507,108.3 507,107.5 506,107.5 506,107.2 505,107.2 505,109.7 504,109.7 504,107.1 503,107.1 503,107.5 502,107.5 502,107.5 501,107.5 501,108.7 500,108.7 500,107.5 499,107.5 499,107.3 498,107.3 498,107.4 497,107.4 497,107.1 496,107.1 496,107.3 495,107.3 495,106.8 494,106.8 494,107.4 493,107.4 493,107.1 492,107.1 492,107.8 491,107.8 491,108.7 490,108.7 490,109.1 489,109.1 489,107.5 488,107.5 488,107.4 487,107.4 487,106.8 486,106.8 486,107.1 485,107.1 485,107.0 484,107.0 484,107.5 483,107.5 483,107.9 482,107.9 482,108.3 481,108.3 481,108.4 480,108.4 480,107.2 479,107.2 479,106.9 478,106.9 478,107.8 477,107.8 477,108.1 476,108.1 476,106.9 475,106.9 475,107.1 474,107.1 474,108.0 473,108.0 473,107.0 472,107.0 472,108.0 471,108.0 471,109.8 470,109.8 470,107.0 469,107.0 469,109.9 468,109.9 468,106.9 467,106.9 467,107.8 466,107.8 466,107.2 465,107.2 465,109.1 464,109.1 464,107.1 463,107.1 463,108.6 462,108.6 462,107.7 461,107.7 461,108.3 460,108.3 460,107.5 459,107.5 459,108.6 458,108.6 458,106.9 457,106.9 457,107.6 456,107.6 456,107.9 455,107.9 455,108.9 454,108.9 454,109.1 453,109.1 453,109.9 452,109.9 452,107.5 451,107.5 451,107.1 450,107.1 450,107.3 449,107.3 449,107.9 448,107.9 448,109.0 447,109.0 447,107.2 446,107.2 446,107.1 445,107.1 445,107.0 444,107.0 444,108.6 443,108.6 443,106.8 442,106.8 442,108.6 441,108.6 441,107.7 440,107.7 440,107.4 439,107.4 439,107.3 438,107.3 438,106.9 437,106.9 437,106.8 436,106.8 436,108.1 435,108.1 435,107.9 434,107.9 434,107.7 433,107.7 433,108.6 432,108.6 432,108.0 431,108.0 431,107.5 430,107.5 430,108.0 429,108.0 429,108.1 428,108.1 428,108.0 427,108.0 427,108.6 426,108.6 426,108.9 425,108.9 425,107.1 424,107.1 424,107.1 423,107.1 423,107.1 422,107.1 422,108.9 421,108.9 421,107.4 420,107.4 420,107.8 419,107.8 419,108.1 418,108.1 418,107.5 417,107.5 417,108.2 416,108.2 416,107.7 415,107.7 415,106.8 414,106.8 414,106.8 413,106.8 413,107.3 412,107.3 412,108.0 411,108.0 411,107.8 410,107.8 410,107.9 409,107.9 409,108.0 408,108.0 408,109.3 407,109.3 407,107.9 406,107.9 406,107.0 405,107.0 405,107.7 404,107.7 404,107.4 403,107.4 403,109.2 402,109.2 402,107.0 401,107.0 401,108.5 400,108.5 400,107.9 399,107.9 399,109.3 398,109.3 398,109.0 397,109.0 397,107.6 396,107.6 396,106.8 395,106.8 395,106.9 394,106.9 394,108.0 393,108.0 393,108.0 392,108.0 392,108.3 391,108.3 391,106.9 390,106.9 390,107.0 389,107.0 389,107.0 388,107.0 388,108.8 387,108.8 387,106.9 386,106.9 386,107.8 385,107.8 385,107.2 384,107.2 384,108.4 383,108.4 383,104.8 382,104.8 382,104.8 381,104.8 381,104.8 380,104.8 380,104.8 379,104.8 379,104.8 378,104.8 378,104.8 377,104.8 377,104.8 376,104.8 376,104.8 375,104.8 375,105.3 374,105.3 374,105.4 373,105.4 373,105.3 372,105.3 372,105.4 371,105.4 371,105.9 370,105.9 370,106.6 369,106.6 369,107.1 368,107.1 368,108.8 367,108.8 367,108.0 366,108.0 366,107.7 365,107.7 365,109.1 364,109.1 364,106.7 363,106.7 363,108.2 362,108.2 362,108.5 361,108.5 361,107.6 360,107.6 360,107.2 359,107.2 359,108.8 358,108.8 358,107.8 357,107.8 357,107.2 356,107.2 356,107.3 355,107.3 355,106.6 354,106.6 354,107.5 353,107.5 353,107.9 352,107.9 352,108.5 351,108.5 351,106.9 350,106.9 350,107.4 349,107.4 349,107.1 348,107.1 348,107.4 347,107.4 347,106.9 346,106.9 346,107.0 345,107.0 345,109.2 344,109.2 344,108.1 343,108.1 343,109.6 342,109.6 342,108.0 341,108.0 341,106.9 340,106.9 340,106.8 339,106.8 339,106.9 338,106.9 338,107.2 337,107.2 337,107.8 336,107.8 336,107.5 335,107.5 335,107.2 334,107.2 334,107.0 333,107.0 333,109.6 332,109.6 332,108.1 331,108.1 331,106.8 330,106.8 330,107.6 329,107.6 329,108.2 328,108.2 328,108.8 327,108.8 327,108.9 326,108.9 326,106.6 325,106.6 325,108.7 324,108.7 324,106.9 323,106.9 323,107.8 322,107.8 322,108.6 321,108.6 321,107.1 320,107.1 320,107.9 319,107.9 319,107.3 318,107.3 318,108.5 317,108.5 317,107.5 316,107.5 316,107.7 315,107.7 315,107.3 314,107.3 314,108.3 313,108.3 313,107.5 312,107.5 312,107.9 311,107.9 311,107.2 310,107.2 310,107.8 309,107.8 309,106.9 308,106.9 308,107.2 307,107.2 307,106.7 306,106.7 306,107.4 305,107.4 305,107.0 304,107.0 304,107.1 303,107.1 303,106.8 302,106.8 302,106.8 301,106.8 301,108.2 300,108.2 300,107.6 299,107.6 299,109.1 298,109.1 298,107.7 297,107.7 297,106.7 296,106.7 296,107.7 295,107.7 295,107.5 294,107.5 294,107.5 293,107.5 293,108.9 292,108.9 292,108.5 291,108.5 291,107.0 290,107.0 290,107.4 289,107.4 289,109.5 288,109.5 288,107.8 287,107.8 287,107.2 286,107.2 286,108.2 285,108.2 285,106.8 284,106.8 284,106.6 283,106.6 283,107.1 282,107.1 282,107.4 281,107.4 281,108.0 280,108.0 280,107.7 279,107.7 279,107.3 278,107.3 278,107.3 277,107.3 277,107.2 276,107.2 276,107.6 275,107.6 275,107.3 274,107.3 274,109.1 273,109.1 273,108.5 272,108.5 272,107.2 271,107.2 271,107.2 270,107.2 270,107.4 269,107.4 269,107.2 268,107.2 268,109.1 267,109.1 267,106.9 266,106.9 266,107.0 265,107.0 265,108.8 264,108.8 264,109.4 263,109.4 263,107.5 262,107.5 262,109.1 261,109.1 261,107.5 260,107.5 260,106.9 259,106.9 259,108.9 258,108.9 258,107.7 257,107.7 257,107.3 256,107.3 256,107.7 255,107.7 255,107.0 254,107.0 254,108.9 253,108.9 253,107.0 252,107.0 252,106.8 251,106.8 251,107.1 250,107.1 250,109.0 249,109.0 249,107.0 248,107.0 248,107.4 247,107.4 247,106.7 246,106.7 246,108.1 245,108.1 245,107.2 244,107.2 244,107.9 243,107.9 243,107.3 242,107.3 242,109.0 241,109.0 241,107.7 240,107.7 240,107.5 239,107.5 239,107.0 238,107.0 238,106.9 237,106.9 237,107.1 236,107.1 236,107.2 235,107.2 235,108.8 234,108.8 234,107.7 233,107.7 233,107.5 232,107.5 232,107.3 231,107.3 231,108.0 230,108.0 230,106.7 229,106.7 229,107.5 228,107.5 228,107.9 227,107.9 227,107.9 226,107.9 226,107.4 225,107.4 225,107.7 224,107.7 224,107.8 223,107.8 223,106.7 222,106.7 222,106.8 221,106.8 221,107.1 220,107.1 220,108.7 219,108.7 219,108.9 218,108.9 218,107.5 217,107.5 217,108.6 216,108.6 216,109.1 215,109.1 215,108.8 214,108.8 214,107.6 213,107.6 213,108.7 212,108.7 212,108.7 211,108.7 211,107.0 210,107.0 210,104.8 209,104.8 209,104.8 208,104.8 208,104.8 207,104.8 207,104.8 206,104.8 206,104.8 205,104.8 205,104.8 204,104.8 204,104.8 203,104.8 203,104.8 202,104.8 202,104.8 201,104.8 201,104.8 200,104.8 200,104.8 199,104.8 199,104.8 198,104.8 198,104.8 197,104.8 197,105.0 196,105.0 196,105.5 195,105.5 195,105.5 194,105.5 194,106.9 193,106.9 193,106.0 192,106.0 192,107.7 191,107.7 191,107.1 190,107.1 190,108.0 189,108.0 189,106.8 188,106.8 188,106.8 187,106.8 187,107.3 186,107.3 186,108.0 185,108.0 185,107.6 184,107.6 184,106.7 183,106.7 183,107.0 182,107.0 182,107.8 181,107.8 181,107.9 180,107.9 180,106.8 179,106.8 179,107.4 178,107.4 178,108.6 177,108.6 177,106.6 176,106.6 176,107.5 175,107.5 175,108.8 174,108.8 174,109.4 173,109.4 173,106.8 172,106.8 172,107.6 171,107.6 171,106.8 170,106.8 170,106.7 169,106.7 169,108.2 168,108.2 168,107.3 167,107.3 167,107.8 166,107.8 166,107.6 165,107.6 165,108.4 164,108.4 164,107.1 163,107.1 163,108.0 162,108.0 162,106.8 161,106.8 161,107.3 160,107.3 160,107.0 159,107.0 159,107.2 158,107.2 158,107.1 157,107.1 157,107.7 156,107.7 156,107.0 155,107.0 155,107.3 154,107.3 154,107.8 153,107.8 153,106.8 152,106.8 152,107.1 151,107.1 151,107.1 150,107.1 150,108.4 149,108.4 149,106.7 148,106.7 148,107.8 147,107.8 147,107.1 146,107.1 146,106.6 145,106.6 145,107.4 144,107.4 144,108.2 143,108.2 143,108.5 142,108.5 142,106.8 141,106.8 141,107.1 140,107.1 140,108.7 139,108.7 139,106.6 138,106.6 138,107.5 137,107.5 137,107.5 136,107.5 136,107.3 135,107.3 135,109.1 134,109.1 134,106.7 133,106.7 133,107.1 132,107.1 132,107.3 131,107.3 131,107.0 130,107.0 130,108.8 129,108.8 129,107.7 128,107.7 128,107.7 127,107.7 127,107.5 126,107.5 126,107.8 125,107.8 125,107.6 124,107.6 124,107.4 123,107.4 123,108.0 122,108.0 122,107.4 121,107.4 121,107.0 120,107.0 120,108.7 119,108.7 119,107.2 118,107.2 118,107.3 117,107.3 117,108.9 116,108.9 116,107.7 115,107.7 115,108.2 114,108.2 114,107.4 113,107.4 113,107.4 112,107.4 112,107.7 111,107.7 111,106.6 110,106.6 110,107.1 109,107.1 109,107.9 108,107.9 108,107.7 107,107.7 107,106.8 106,106.8 106,107.9 105,107.9 105,107.6 104,107.6 104,108.7 103,108.7 103,106.7 102,106.7 102,107.3 101,107.3 101,107.0 100,107.0 100,107.3 99,107.3 99,108.6 98,108.6 98,106.7 97,106.7 97,107.8 96,107.8 96,107.8 95,107.8 95,108.8 94,108.8 94,108.3 93,108.3 93,106.7 92,106.7 92,107.9 91,107.9 91,108.9 90,108.9 90,107.2 89,107.2 89,107.0 88,107.0 88,106.8 87,106.8 87,107.0 86,107.0 86,108.6 85,108.6 85,107.9 84,107.9 84,106.8 83,106.8 83,109.0 82,109.0 82,107.1 81,107.1 81,107.6 80,107.6 80,107.5 79,107.5 79,107.3 78,107.3 78,107.3 77,107.3 77,107.7 76,107.7 76,108.1 75,108.1 75,107.2 74,107.2 74,107.2 73,107.2 73,107.4 72,107.4 72,108.0 71,108.0 71,107.6 70,107.6 70,107.3 69,107.3 69,107.4 68,107.4 68,107.0 67,107.0 67,107.0 66,107.0 66,106.7 65,106.7 65,107.8 64,107.8 64,107.1 63,107.1 63,107.1 62,107.1 62,106.8 61,106.8 61,107.4 60,107.4 60,108.5 59,108.5 59,109.3 58,109.3 58,107.0 57,107.0 57,107.4 56,107.4 56,107.7 55,107.7 55,107.3 54,107.3 54,107.6 53,107.6 53,107.8 52,107.8 52,108.7 51,108.7 51,108.5 50,108.5 50,107.8 49,107.8 49,107.2 48,107.2 48,107.6 47,107.6 47,108.5 46,108.5 46,107.9 45,107.9 45,107.4 44,107.4 44,107.4 43,107.4 43,107.6 42,107.6 42,107.1 41,107.1 41,107.8 40,107.8 40,108.8 39,108.8 39,107.9 38,107.9 38,106.9 37,106.9 37,107.1 36,107.1 36,106.8 35,106.8 35,109.2 34,109.2 34,107.8 33,107.8 33,107.5 32,107.5 32,106.2 31,106.2 31,106.6 30,106.6 30,106.4 29,106.4Z" fill="#5b9ef6"/>
<path d="M29,116.9 30,116.9 30,116.1 31,116.1 31,117.6 32,117.6 32,114.7 33,114.7 33,116.0 34,116.0 34,116.1 35,116.1 35,114.4 36,114.4 36,116.1 37,116.1 37,116.4 38,116.4 38,114.4 39,114.4 39,116.4 40,116.4 40,116.4 41,116.4 41,116.2 42,116.2 42,116.8 43,116.8 43,115.0 44,115.0 44,116.7 45,116.7 45,115.3 46,115.3 46,116.8 47,116.8 47,116.6 48,116.6 48,114.9 49,114.9 49,116.9 50,116.9 50,116.0 51,116.0 51,115.1 52,115.1 52,114.7 53,114.7 53,116.7 54,116.7 54,114.7 55,114.7 55,115.7 56,115.7 56,115.2 57,115.2 57,115.4 58,115.4 58,115.6 59,115.6 59,116.0 60,116.0 60,115.6 61,115.6 61,116.8 62,116.8 62,116.7 63,116.7 63,116.7 64,116.7 64,115.6 65,115.6 65,116.3 66,116.3 66,115.8 67,115.8 67,115.7 68,115.7 68,115.2 69,115.2 69,116.8 70,116.8 70,116.1 71,116.1 71,116.5 72,116.5 72,116.8 73,116.8 73,116.5 74,116.5 74,114.9 75,114.9 75,116.9 76,116.9 76,115.9 77,115.9 77,116.5 78,116.5 78,115.3 79,115.3 79,116.2 80,116.2 80,115.2 81,115.2 81,115.8 82,115.8 82,115.8 83,115.8 83,116.0 84,116.0 84,116.8 85,116.8 85,116.4 86,116.4 86,115.8 87,115.8 87,114.7 88,114.7 88,114.3 89,114.3 89,115.0 90,115.0 90,116.8 91,116.8 91,115.7 92,115.7 92,114.6 93,114.6 93,116.2 94,116.2 94,116.5 95,116.5 95,114.8 96,114.8 96,114.0 97,114.0 97,116.8 98,116.8 98,115.8 99,115.8 99,116.1 100,116.1 100,116.1 101,116.1 101,116.2 102,116.2 102,116.0 103,116.0 103,115.5 104,115.5 104,116.1 105,116.1 105,115.6 106,115.6 106,115.8 107,115.8 107,116.6 108,116.6 108,116.8 109,116.8 109,116.2 110,116.2 110,116.3 111,116.3 111,115.5 112,115.5 112,115.4 113,115.4 113,116.8 114,116.8 114,116.0 115,116.0 115,115.6 116,115.6 116,116.5 117,116.5 117,114.7 118,114.7 118,115.5 119,115.5 119,116.5 120,116.5 120,114.0 121,114.0 121,115.7 122,115.7 122,116.7 123,116.7 123,115.9 124,115.9 124,115.2 125,115.2 125,116.5 126,116.5 126,116.5 127,116.5 127,116.8 128,116.8 128,116.2 129,116.2 129,115.8 130,115.8 130,115.5 131,115.5 131,116.8 132,116.8 132,116.6 133,116.6 133,116.7 134,116.7 134,114.2 135,114.2 135,116.0 136,116.0 136,113.8 137,113.8 137,115.8 138,115.8 138,116.2 139,116.2 139,115.8 140,115.8 140,116.0 141,116.0 141,114.7 142,114.7 142,115.9 143,115.9 143,115.7 144,115.7 144,116.1 145,116.1 145,116.1 146,116.1 146,115.7 147,115.7 147,113.9 148,113.9 148,116.3 149,116.3 149,114.0 150,114.0 150,116.7 151,116.7 151,115.0 152,115.0 152,116.8 153,116.8 153,115.2 154,115.2 154,116.4 155,116.4 155,116.2 156,116.2 156,115.5 157,115.5 157,116.2 158,116.2 158,114.5 159,114.5 159,116.6 160,116.6 160,116.7 161,116.7 161,114.9 162,114.9 162,115.6 163,115.6 163,115.9 164,115.9 164,114.3 165,114.3 165,115.9 166,115.9 166,115.7 167,115.7 167,116.6 168,116.6 168,115.3 169,115.3 169,116.0 170,116.0 170,116.6 171,116.6 171,115.4 172,115.4 172,116.9 173,116.9 173,116.0 174,116.0 174,116.4 175,116.4 175,116.5 176,116.5 176,114.4 177,114.4 177,115.8 178,115.8 178,114.2 179,114.2 179,115.6 180,115.6 180,116.9 181,116.9 181,116.3 182,116.3 182,116.7 183,116.7 183,116.5 184,116.5 184,116.2 185,116.2 185,115.7 186,115.7 186,116.9 187,116.9 187,116.5 188,116.5 188,115.9 189,115.9 189,116.4 190,116.4 190,116.8 191,116.8 191,117.2 192,117.2 192,117.5 193,117.5 193,117.5 194,117.5 194,116.9 195,116.9 195,118.1 196,118.1 196,118.6 197,118.6 197,118.7 198,118.7 198,118.7 199,118.7 199,118.7 200,118.7 200,118.7 201,118.7 201,118.7 202,118.7 202,118.7 203,118.7 203,118.7 204,118.7 204,118.7 205,118.7 205,118.7 206,118.7 206,118.7 207,118.7 207,118.7 208,118.7 208,118.7 209,118.7 209,118.7 210,118.7 210,114.6 211,114.6 211,116.1 212,116.1 212,115.8 213,115.8 213,115.9 214,115.9 214,115.7 215,115.7 215,115.5 216,115.5 216,116.5 217,116.5 217,116.7 218,116.7 218,116.5 219,116.5 219,115.6 220,115.6 220,113.8 221,113.8 221,116.4 222,116.4 222,116.7 223,116.7 223,115.8 224,115.8 224,114.1 225,114.1 225,116.6 226,116.6 226,115.8 227,115.8 227,116.6 228,116.6 228,115.6 229,115.6 229,116.8 230,116.8 230,116.8 231,116.8 231,115.5 232,115.5 232,116.0 233,116.0 233,116.5 234,116.5 234,116.5 235,116.5 235,116.3 236,116.3 236,115.7 237,115.7 237,116.8 238,116.8 238,116.0 239,116.0 239,114.5 240,114.5 240,114.4 241,114.4 241,115.6 242,115.6 242,115.7 243,115.7 243,116.1 244,116.1 244,115.0 245,115.0 245,114.9 246,114.9 246,116.1 247,116.1 247,116.3 248,116.3 248,114.8 249,114.8 249,116.0 250,116.0 250,116.7 251,116.7 251,115.9 252,115.9 252,116.8 253,116.8 253,115.1 254,115.1 254,116.7 255,116.7 255,115.9 256,115.9 256,116.5 257,116.5 257,116.2 258,116.2 258,115.9 259,115.9 259,116.7 260,116.7 260,115.8 261,115.8 261,116.0 262,116.0 262,113.9 263,113.9 263,116.2 264,116.2 264,116.0 265,116.0 265,114.4 266,114.4 266,116.0 267,116.0 267,116.9 268,116.9 268,116.6 269,116.6 269,115.1 270,115.1 270,114.9 271,114.9 271,114.0 272,114.0 272,116.0 273,116.0 273,116.0 274,116.0 274,114.5 275,114.5 275,115.9 276,115.9 276,114.5 277,114.5 277,115.2 278,115.2 278,114.9 279,114.9 279,116.8 280,116.8 280,116.3 281,116.3 281,116.5 282,116.5 282,115.6 283,115.6 283,114.8 284,114.8 284,114.4 285,114.4 285,114.6 286,114.6 286,115.8 287,115.8 287,116.0 288,116.0 288,114.9 289,114.9 289,115.6 290,115.6 290,116.7 291,116.7 291,116.2 292,116.2 292,116.1 293,116.1 293,116.6 294,116.6 294,116.8 295,116.8 295,116.7 296,116.7 296,116.9 297,116.9 297,116.8 298,116.8 298,116.5 299,116.5 299,116.3 300,116.3 300,116.2 301,116.2 301,115.8 302,115.8 302,115.8 303,115.8 303,116.0 304,116.0 304,116.6 305,116.6 305,116.8 306,116.8 306,115.3 307,115.3 307,115.8 308,115.8 308,115.1 309,115.1 309,116.0 310,116.0 310,113.9 311,113.9 311,116.3 312,116.3 312,115.0 313,115.0 313,115.6 314,115.6 314,116.5 315,116.5 315,115.2 316,115.2 316,116.0 317,116.0 317,115.5 318,115.5 318,115.5 319,115.5 319,116.7 320,116.7 320,116.1 321,116.1 321,116.8 322,116.8 322,115.1 323,115.1 323,114.3 324,114.3 324,116.0 325,116.0 325,116.9 326,116.9 326,114.2 327,114.2 327,116.2 328,116.2 328,114.3 329,114.3 329,116.5 330,116.5 330,116.4 331,116.4 331,115.8 332,115.8 332,116.3 333,116.3 333,115.9 334,115.9 334,114.8 335,114.8 335,116.2 336,116.2 336,115.8 337,115.8 337,116.6 338,116.6 338,116.6 339,116.6 339,115.6 340,115.6 340,114.2 341,114.2 341,116.1 342,116.1 342,115.3 343,115.3 343,116.1 344,116.1 344,116.6 345,116.6 345,116.2 346,116.2 346,116.2 347,116.2 347,116.6 348,116.6 348,116.6 349,116.6 349,116.4 350,116.4 350,116.8 351,116.8 351,115.1 352,115.1 352,114.3 353,114.3 353,115.3 354,115.3 354,114.1 355,114.1 355,115.6 356,115.6 356,115.6 357,115.6 357,116.3 358,116.3 358,115.8 359,115.8 359,116.2 360,116.2 360,116.1 361,116.1 361,116.8 362,116.8 362,115.9 363,115.9 363,116.0 364,116.0 364,116.7 365,116.7 365,115.1 366,115.1 366,115.8 367,115.8 367,116.6 368,116.6 368,116.9 369,116.9 369,116.7 370,116.7 370,117.3 371,117.3 371,117.8 372,117.8 372,117.9 373,117.9 373,118.0 374,118.0 374,118.6 375,118.6 375,118.7 376,118.7 376,118.7 377,118.7 377,118.7 378,118.7 378,118.7 379,118.7 379,118.7 380,118.7 380,118.7 381,118.7 381,118.7 382,118.7 382,118.7 383,118.7 383,116.7 384,116.7 384,116.6 385,116.6 385,115.7 386,115.7 386,114.0 387,114.0 387,116.7 388,116.7 388,116.8 389,116.8 389,115.8 390,115.8 390,114.8 391,114.8 391,115.7 392,115.7 392,114.7 393,114.7 393,115.7 394,115.7 394,114.7 395,114.7 395,115.8 396,115.8 396,114.0 397,114.0 397,116.1 398,116.1 398,114.0 399,114.0 399,116.2 400,116.2 400,115.2 401,115.2 401,116.0 402,116.0 402,116.2 403,116.2 403,116.7 404,116.7 404,115.6 405,115.6 405,116.5 406,116.5 406,116.5 407,116.5 407,116.8 408,116.8 408,116.7 409,116.7 409,114.9 410,114.9 410,115.5 411,115.5 411,116.7 412,116.7 412,116.5 413,116.5 413,114.9 414,114.9 414,116.5 415,116.5 415,114.2 416,114.2 416,116.8 417,116.8 417,115.2 418,115.2 418,116.0 419,116.0 419,115.8 420,115.8 420,115.8 421,115.8 421,115.9 422,115.9 422,116.6 423,116.6 423,116.2 424,116.2 424,116.2 425,116.2 425,114.7 426,114.7 426,116.4 427,116.4 427,116.2 428,116.2 428,114.7 429,114.7 429,115.5 430,115.5 430,114.1 431,114.1 431,114.9 432,114.9 432,113.7 433,113.7 433,115.3 434,115.3 434,115.2 435,115.2 435,116.6 436,116.6 436,115.3 437,115.3 437,115.7 438,115.7 438,115.5 439,115.5 439,116.2 440,116.2 440,115.5 441,115.5 441,114.3 442,114.3 442,116.3 443,116.3 443,116.2 444,116.2 444,115.7 445,115.7 445,115.6 446,115.6 446,116.7 447,116.7 447,116.2 448,116.2 448,115.7 449,115.7 449,116.2 450,116.2 450,116.0 451,116.0 451,115.8 452,115.8 452,116.1 453,116.1 453,114.0 454,114.0 454,114.3 455,114.3 455,116.3 456,116.3 456,115.8 457,115.8 457,115.8 458,115.8 458,114.7 459,114.7 459,115.6 460,115.6 460,114.8 461,114.8 461,116.6 462,116.6 462,116.2 463,116.2 463,116.8 464,116.8 464,115.8 465,115.8 465,114.1 466,114.1 466,115.6 467,115.6 467,115.4 468,115.4 468,115.1 469,115.1 469,115.6 470,115.6 470,115.5 471,115.5 471,115.9 472,115.9 472,116.2 473,116.2 473,114.0 474,114.0 474,114.9 475,114.9 475,114.5 476,114.5 476,115.9 477,115.9 477,115.9 478,115.9 478,114.6 479,114.6 479,116.7 480,116.7 480,114.8 481,114.8 481,115.8 482,115.8 482,116.2 483,116.2 483,115.9 484,115.9 484,116.3 485,116.3 485,116.8 486,116.8 486,116.7 487,116.7 487,114.8 488,114.8 488,116.2 489,116.2 489,116.6 490,116.6 490,113.8 491,113.8 491,116.7 492,116.7 492,114.9 493,114.9 493,114.1 494,114.1 494,115.3 495,115.3 495,116.6 496,116.6 496,116.6 497,116.6 497,116.7 498,116.7 498,115.8 499,115.8 499,114.4 500,114.4 500,114.0 501,114.0 501,114.0 502,114.0 502,114.4 503,114.4 503,115.1 504,115.1 504,114.7 505,114.7 505,115.8 506,115.8 506,116.1 507,116.1 507,116.2 508,116.2 508,115.6 509,115.6 509,116.8 510,116.8 510,116.5 511,116.5 511,114.6 512,114.6 512,116.3 513,116.3 513,116.8 514,116.8 514,116.2 515,116.2 515,116.3 516,116.3 516,116.0 517,116.0 517,114.9 518,114.9 518,115.4 519,115.4 519,116.8 520,116.8 520,116.0 521,116.0 521,116.7 522,116.7 522,116.2 523,116.2 523,115.8 524,115.8 524,114.4 525,114.4 525,115.5 526,115.5 526,116.4 527,116.4 527,115.7 528,115.7 528,115.0 529,115.0 529,115.7 530,115.7 530,114.2 531,114.2 531,116.3 532,116.3 532,115.4 533,115.4 533,116.1 534,116.1 534,116.7 535,116.7 535,115.9 536,115.9 536,116.5 537,116.5 537,116.3 538,116.3 538,115.8 539,115.8 539,116.7 540,116.7 540,116.0 541,116.0 541,115.9 542,115.9 542,116.6 543,116.6 543,116.9 544,116.9 544,116.6 545,116.6 545,117.6 546,117.6 546,116.5 547,116.5 547,118.3 548,118.3 548,118.3 549,118.3 549,118.7 550,118.7 550,118.7 551,118.7 551,118.7 552,118.7 552,118.7 553,118.7 553,118.7 554,118.7 554,118.7 555,118.7 555,118.7 556,118.7 556,118.7 557,118.7 557,118.7 558,118.7 558,115.5 559,115.5 559,115.6 560,115.6 560,116.0 561,116.0 561,114.2 562,114.2 562,116.5 563,116.5 563,115.8 564,115.8 564,114.3 565,114.3 565,114.9 566,114.9 566,116.2 567,116.2 567,116.4 568,116.4 568,116.0 569,116.0 569,114.5 570,114.5 570,116.1 571,116.1 571,117.0 572,117.0 572,116.9 573,116.9 573,114.8 574,114.8 574,116.4 575,116.4 575,115.8 576,115.8 576,115.3 577,115.3 577,116.4 578,116.4 578,116.6 579,116.6 579,116.9 580,116.9 580,116.2 581,116.2 581,117.0 582,117.0 582,116.7 583,116.7 583,116.2 584,116.2 584,116.9 585,116.9 585,116.4 586,116.4 586,115.8 587,115.8 587,116.2 588,116.2 588,116.0 589,116.0 589,116.1 590,116.1 590,114.6 591,114.6 591,116.3 592,116.3 592,114.9 593,114.9 593,115.9 594,115.9 594,116.8 595,116.8 595,114.7 596,114.7 596,116.3 597,116.3 597,115.7 598,115.7 598,116.5 599,116.5 599,116.1 600,116.1 600,115.7 601,115.7 601,115.2 602,115.2 602,116.3 603,116.3 603,116.9 604,116.9 604,116.5 605,116.5 605,116.6 606,116.6 606,116.3 607,116.3 607,115.6 608,115.6 608,115.3 609,115.3 609,115.7 610,115.7 610,116.7 611,116.7 611,116.1 612,116.1 612,116.1 613,116.1 613,116.2 614,116.2 614,115.1 615,115.1 615,115.9 616,115.9 616,115.9 617,115.9 617,115.6 618,115.6 618,116.3 619,116.3 619,114.8 620,114.8 620,114.4 621,114.4 621,115.7 622,115.7 622,116.1 623,116.1 623,114.1 624,114.1 624,115.8 625,115.8 625,116.2 626,116.2 626,116.5 627,116.5 627,115.7 628,115.7 628,114.6 629,114.6 629,115.9 630,115.9 630,114.9 631,114.9 631,116.1 632,116.1 632,114.0 633,114.0 633,116.5 634,116.5 634,113.9 635,113.9 635,116.4 636,116.4 636,116.4 637,116.4 637,116.7 638,116.7 638,115.8 639,115.8 639,115.9 640,115.9 640,116.9 641,116.9 641,116.3 642,116.3 642,116.3 643,116.3 643,117.0 644,117.0 644,116.8 645,116.8 645,116.1 646,116.1 646,115.9 647,115.9 647,116.2 648,116.2 648,114.8 649,114.8 649,115.8 650,115.8 650,116.8 651,116.8 651,116.6 652,116.6 652,116.1 653,116.1 653,115.0 654,115.0 654,116.3 655,116.3 655,114.6 656,114.6 656,116.2 657,116.2 657,116.3 658,116.3 658,116.4 659,116.4 659,115.6 660,115.6 660,116.5 661,116.5 661,115.3 662,115.3 662,116.7 663,116.7 663,116.0 664,116.0 664,116.2 665,116.2 665,115.7 666,115.7 666,116.9 667,116.9 667,116.2 668,116.2 668,116.3 669,116.3 669,116.3 670,116.3 670,116.8 671,116.8 671,116.9 672,116.9 672,115.7 673,115.7 673,115.9 674,115.9 674,116.9 675,116.9 675,115.9 676,115.9 676,115.9 677,115.9 677,116.1 678,116.1 678,116.3 679,116.3 679,116.3 680,116.3 680,116.7 681,116.7 681,116.7 682,116.7 682,115.3 683,115.3 683,116.7 684,116.7 684,115.5 685,115.5 685,116.0 686,116.0 686,115.4 687,115.4 687,116.8 688,116.8 688,116.6 689,116.6 689,115.0 690,115.0 690,116.7 691,116.7 691,117.0 692,117.0 692,116.4 693,116.4 693,116.2 694,116.2 694,115.6 695,115.6 695,116.0 696,116.0 696,115.2 697,115.2 697,116.2 698,116.2 698,115.9 699,115.9 699,116.7 700,116.7 700,116.3 701,116.3 701,115.2 702,115.2 702,116.3 703,116.3 703,116.8 704,116.8 704,116.5 705,116.5 705,116.2 706,116.2 706,116.8 707,116.8 707,115.0 708,115.0 708,116.2 709,116.2 709,114.9 710,114.9 710,116.0 711,116.0 711,116.2 712,116.2 712,115.9 713,115.9 713,115.8 714,115.8 714,116.7 715,116.7 715,116.3 716,116.3 716,115.0 717,115.0 717,116.7 718,116.7 718,114.3 719,114.3 719,116.7 720,116.7 720,116.6 721,116.6 721,114.3 722,114.3 722,114.4 723,114.4 723,116.0 724,116.0 724,116.5 725,116.5 725,114.9 726,114.9 726,115.7 727,115.7 727,115.6 728,115.6 728,115.9 729,115.9 729,116.0 730,116.0 730,116.3 731,116.3 731,117.2 732,117.2 732,116.7 733,116.7 733,117.6 734,117.6 734,117.8 735,117.8 735,117.8 736,117.8 736,118.0 737,118.0 737,118.7 738,118.7 738,118.7 739,118.7 739,118.7 740,118.7 740,118.7 741,118.7 741,118.7 742,118.7 742,118.7 743,118.7 743,118.7 744,118.7 744,118.7 745,118.7 745,118.7 746,118.7 746,114.1 747,114.1 747,116.0 748,116.0 748,115.8 749,115.8 749,115.9 750,115.9 750,115.4 751,115.4 751,116.7 752,116.7 752,116.3 753,116.3 753,114.7 754,114.7 754,113.6 755,113.6 755,115.7 756,115.7 756,115.8 757,115.8 757,115.6 758,115.6 758,116.1 759,116.1 759,115.4 760,115.4 760,116.1 761,116.1 761,115.5 762,115.5 762,115.9 763,115.9 763,114.4 764,114.4 764,115.9 765,115.9 765,116.3 766,116.3 766,115.8 767,115.8 767,116.4 768,116.4 768,115.8 769,115.8 769,114.9 770,114.9 770,116.2 771,116.2 771,116.2 772,116.2 772,116.4 773,116.4 773,115.8 774,115.8 774,114.6 775,114.6 775,116.4 776,116.4 776,115.7 777,115.7 777,116.2 778,116.2 778,115.7 779,115.7 779,116.0 780,116.0 780,115.9 781,115.9 781,114.3 782,114.3 782,116.3 783,116.3 783,116.7 784,116.7 784,116.7 785,116.7 785,115.9 786,115.9 786,114.6 787,114.6 787,115.8 788,115.8 788,116.6 789,116.6 789,114.8 790,114.8 790,113.9 791,113.9 791,114.0 792,114.0 792,115.4 793,115.4 793,114.3 794,114.3 794,116.0 795,116.0 795,115.6 796,115.6 796,115.3 797,115.3 797,115.5 798,115.5 798,115.5 799,115.5 799,116.1 800,116.1 800,116.0 801,116.0 801,116.8 802,116.8 802,115.4 803,115.4 803,116.4 804,116.4 804,114.6 805,114.6 805,116.1 806,116.1 806,115.5 807,115.5 807,115.5 808,115.5 808,116.1 809,116.1 809,115.4 810,115.4 810,116.2 811,116.2 811,116.7 812,116.7 812,116.7 813,116.7 813,116.7 814,116.7 814,115.9 815,115.9 815,116.6 816,116.6 816,116.6 817,116.6 817,116.7 818,116.7 818,116.5 819,116.5 819,114.7 820,114.7 820,116.0 821,116.0 821,115.4 822,115.4 822,115.1 823,115.1 823,113.9 824,113.9 824,115.6 825,115.6 825,116.0 826,116.0 826,113.9 827,113.9 827,116.0 828,116.0 828,116.6 829,116.6 829,115.6 830,115.6 830,116.7 831,116.7 831,115.7 832,115.7 832,116.5 833,116.5 833,116.1 834,116.1 834,116.8 835,116.8 835,116.2 836,116.2 836,116.1 837,116.1 837,116.2 838,116.2 838,116.5 839,116.5 839,116.5 840,116.5 840,115.6 841,115.6 841,115.7 842,115.7 842,116.1 843,116.1 843,115.7 844,115.7 844,116.3 845,116.3 845,116.0 846,116.0 846,115.3 847,115.3 847,116.2 848,116.2 848,115.7 849,115.7 849,114.9 850,114.9 850,116.8 851,116.8 851,115.5 852,115.5 852,115.4 853,115.4 853,115.8 854,115.8 854,116.8 855,116.8 855,116.0 856,116.0 856,116.0 857,116.0 857,114.5 858,114.5 858,114.2 859,114.2 859,114.0 860,114.0 860,116.6 861,116.6 861,115.4 862,115.4 862,115.6 863,115.6 863,115.9 864,115.9 864,114.7 865,114.7 865,115.8 866,115.8 866,117.1 867,117.1 867,115.5 868,115.5 868,117.7 869,117.7 869,118.0 870,118.0 870,118.2 871,118.2 871,118.6 872,118.6 872,118.7 873,118.7 873,118.7 874,118.7 874,118.7 875,118.7 875,118.7 876,118.7 876,118.7 877,118.7 877,118.7 878,118.7 878,118.7 879,118.7 879,118.7 880,118.7 880,118.7 881,118.7 881,115.9 882,115.9 882,116.4 883,116.4 883,116.8 884,116.8 884,114.9 885,114.9 885,115.6 886,115.6 886,114.0 887,114.0 887,115.6 888,115.6 888,116.0 889,116.0 889,115.3 890,115.3 890,116.0 891,116.0 891,114.0 892,114.0 892,116.6 893,116.6 893,116.4 894,116.4 894,116.5 895,116.5 895,114.1 896,114.1 896,116.2 897,116.2 897,114.6 898,114.6 898,115.8 899,115.8 899,115.9 900,115.9 900,116.3 901,116.3 901,116.8 902,116.8 902,116.8 903,116.8 903,116.1 904,116.1 904,114.7 905,114.7 905,114.8 906,114.8 906,116.7 907,116.7 907,115.6 908,115.6 908,115.6 909,115.6 909,116.1 910,116.1 910,116.0 911,116.0 911,115.9 912,115.9 912,115.5 913,115.5 913,116.0 914,116.0 914,116.0 915,116.0 915,115.2 916,115.2 916,116.3 917,116.3 917,115.6 918,115.6 918,114.8 919,114.8 919,116.2 920,116.2 920,116.2 921,116.2 921,116.6 922,116.6 922,116.0 923,116.0 923,116.8 924,116.8 924,114.6 925,114.6 925,116.5 926,116.5 926,115.2 927,115.2 927,116.5 928,116.5 928,115.2 929,115.2 929,115.5 930,115.5 930,116.3 931,116.3 931,116.4 932,116.4 932,116.2 933,116.2 933,115.7 934,115.7 934,115.6 935,115.6 935,115.8 936,115.8 936,115.9 937,115.9 937,114.9 938,114.9 938,115.0 939,115.0 939,115.6 940,115.6 940,116.0 941,116.0 941,115.0 942,115.0 942,116.9 943,116.9 943,116.9 944,116.9 944,114.3 945,114.3 945,116.0 946,116.0 946,115.9 947,115.9 947,116.6 948,116.6 948,116.7 949,116.7 949,114.6 950,114.6 950,114.8 951,114.8 951,116.1 952,116.1 952,116.8 953,116.8 953,115.2 954,115.2 954,114.0 955,114.0 955,115.8 956,115.8 956,116.1 957,116.1 957,114.5 958,114.5 958,115.1 959,115.1 959,114.3 960,114.3 960,116.0 961,116.0 961,116.7 962,116.7 962,115.4 963,115.4 963,116.2 964,116.2 964,115.9 965,115.9 965,116.1 966,116.1 966,116.1 967,116.1 967,114.9 968,114.9 968,116.0 969,116.0 969,114.1 970,114.1 970,115.8 971,115.8 971,116.2 972,116.2 972,115.7 973,115.7 973,116.9 974,116.9 974,116.8 975,116.8 975,116.8 976,116.8 976,115.6 977,115.6 977,115.4 978,115.4 978,114.7 979,114.7 979,116.3 980,116.3 980,115.4 981,115.4 981,115.9 982,115.9 982,114.7 983,114.7 983,116.2 984,116.2 984,116.3 985,116.3 985,116.2 986,116.2 986,114.6 987,114.6 987,114.6 988,114.6 988,114.3 989,114.3 989,116.3 990,116.3 990,115.1 991,115.1 991,115.9 992,115.9 992,116.2 993,116.2 993,116.9 994,116.9 994,114.9 995,114.9 995,116.5 996,116.5 996,115.5 997,115.5 997,115.6 998,115.6 998,115.9 999,115.9 999,116.5 1000,116.5 1000,115.1 1001,115.1 1001,115.4 1002,115.4 1002,116.6 1003,116.6 1003,116.7 1004,116.7 1004,114.6 1005,114.6 1005,114.3 1006,114.3 1006,115.6 1007,115.6 1007,116.4 1008,116.4 1008,115.5 1009,115.5 1009,116.9 1010,116.9 1010,115.9 1011,115.9 1011,116.9 1012,116.9 1012,115.8 1013,115.8 1013,116.5 1014,116.5 1014,116.1 1015,116.1 1015,116.2 1016,116.2 1016,115.7 1017,115.7 1017,116.4 1018,116.4 1018,115.8 1019,115.8 1019,115.0 1020,115.0 1020,116.5 1021,116.5 1021,116.3 1022,116.3 1022,115.3 1023,115.3 1023,116.5 1024,116.5 1024,115.9 1025,115.9 1025,116.0 1026,116.0 1026,114.6 1027,114.6 1027,115.6 1028,115.6 1028,116.1 1029,116.1 1029,115.7 1030,115.7 1030,115.7 1031,115.7 1031,116.0 1032,116.0 1032,116.5 1033,116.5 1033,114.9 1034,114.9 1034,116.5 1035,116.5 1035,114.9 1036,114.9 1036,116.2 1037,116.2 1037,116.8 1038,116.8 1038,116.8 1039,116.8 1039,116.0 1040,116.0 1040,116.1 1041,116.1 1041,115.0 1042,115.0 1042,114.2 1043,114.2 1043,116.8 1044,116.8 1044,114.7 1045,114.7 1045,114.5 1046,114.5 1046,117.0 1047,117.0 1047,116.5 1048,116.5 1048,117.1 1049,117.1 1049,118.0 1050,118.0 1050,117.8 1051,117.8 1051,118.7 1052,118.7 1052,118.7 1053,118.7 1053,118.7 1054,118.7 1054,118.7 1055,118.7 1055,118.7 1056,118.7 1056,118.7 1057,118.7 1057,118.7 1058,118.7 1058,118.7 1059,118.7 1059,118.7 1060,118.7 1060,118.7 1061,118.7 1061,118.7 1062,118.7 1062,118.7 1063,118.7 1063,118.7 1064,118.7 1064,118.7 1065,118.7 1065,118.7 1066,118.7 1066,118.7 1067,118.7 L1067,120.5 1066,120.5 1066,120.5 1065,120.5 1065,120.5 1064,120.5 1064,120.5 1063,120.5 1063,120.5 1062,120.5 1062,120.5 1061,120.5 1061,120.5 1060,120.5 1060,120.5 1059,120.5 1059,120.5 1058,120.5 1058,120.5 1057,120.5 1057,120.5 1056,120.5 1056,120.5 1055,120.5 1055,120.5 1054,120.5 1054,120.5 1053,120.5 1053,120.5 1052,120.5 1052,120.8 1051,120.8 1051,121.8 1050,121.8 1050,121.4 1049,121.4 1049,121.3 1048,121.3 1048,122.4 1047,122.4 1047,122.6 1046,122.6 1046,123.2 1045,123.2 1045,123.8 1044,123.8 1044,124.7 1043,124.7 1043,122.4 1042,122.4 1042,122.7 1041,122.7 1041,123.6 1040,123.6 1040,123.7 1039,123.7 1039,123.4 1038,123.4 1038,124.3 1037,124.3 1037,125.1 1036,125.1 1036,123.5 1035,123.5 1035,123.1 1034,123.1 1034,123.2 1033,123.2 1033,124.0 1032,124.0 1032,122.5 1031,122.5 1031,122.5 1030,122.5 1030,122.4 1029,122.4 1029,123.9 1028,123.9 1028,122.9 1027,122.9 1027,122.5 1026,122.5 1026,122.6 1025,122.6 1025,123.4 1024,123.4 1024,122.8 1023,122.8 1023,123.4 1022,123.4 1022,124.9 1021,124.9 1021,123.5 1020,123.5 1020,124.9 1019,124.9 1019,122.4 1018,122.4 1018,123.6 1017,123.6 1017,123.1 1016,123.1 1016,122.5 1015,122.5 1015,122.9 1014,122.9 1014,122.5 1013,122.5 1013,124.9 1012,124.9 1012,124.1 1011,124.1 1011,124.2 1010,124.2 1010,123.7 1009,123.7 1009,123.2 1008,123.2 1008,122.8 1007,122.8 1007,122.4 1006,122.4 1006,122.5 1005,122.5 1005,123.2 1004,123.2 1004,123.1 1003,123.1 1003,122.8 1002,122.8 1002,123.5 1001,123.5 1001,122.5 1000,122.5 1000,123.7 999,123.7 999,123.3 998,123.3 998,123.1 997,123.1 997,125.4 996,125.4 996,123.3 995,123.3 995,123.3 994,123.3 994,122.8 993,122.8 993,123.1 992,123.1 992,123.4 991,123.4 991,123.1 990,123.1 990,123.6 989,123.6 989,125.4 988,125.4 988,123.7 987,123.7 987,124.9 986,124.9 986,123.6 985,123.6 985,124.2 984,124.2 984,123.3 983,123.3 983,124.8 982,124.8 982,123.3 981,123.3 981,123.5 980,123.5 980,122.5 979,122.5 979,122.6 978,122.6 978,123.9 977,123.9 977,122.9 976,122.9 976,122.4 975,122.4 975,124.6 974,124.6 974,124.7 973,124.7 973,123.9 972,123.9 972,123.4 971,123.4 971,123.7 970,123.7 970,123.4 969,123.4 969,122.7 968,122.7 968,123.4 967,123.4 967,123.0 966,123.0 966,123.0 965,123.0 965,123.6 964,123.6 964,122.6 963,122.6 963,122.8 962,122.8 962,123.6 961,123.6 961,123.4 960,123.4 960,122.6 959,122.6 959,123.6 958,123.6 958,122.8 957,122.8 957,122.5 956,122.5 956,124.7 955,124.7 955,122.5 954,122.5 954,123.2 953,123.2 953,125.4 952,125.4 952,123.1 951,123.1 951,123.5 950,123.5 950,122.6 949,122.6 949,124.5 948,124.5 948,123.6 947,123.6 947,123.2 946,123.2 946,123.7 945,123.7 945,123.0 944,123.0 944,123.3 943,123.3 943,124.0 942,124.0 942,123.3 941,123.3 941,122.7 940,122.7 940,123.0 939,123.0 939,124.8 938,124.8 938,123.8 937,123.8 937,122.4 936,122.4 936,124.2 935,124.2 935,123.7 934,123.7 934,123.5 933,123.5 933,122.4 932,122.4 932,122.8 931,122.8 931,124.4 930,124.4 930,122.7 929,122.7 929,122.5 928,122.5 928,122.8 927,122.8 927,122.8 926,122.8 926,122.4 925,122.4 925,123.4 924,123.4 924,123.1 923,123.1 923,123.7 922,123.7 922,122.3 921,122.3 921,124.3 920,124.3 920,123.4 919,123.4 919,123.5 918,123.5 918,122.6 917,122.6 917,122.7 916,122.7 916,122.5 915,122.5 915,122.8 914,122.8 914,122.7 913,122.7 913,123.3 912,123.3 912,125.0 911,125.0 911,123.5 910,123.5 910,124.4 909,124.4 909,122.4 908,122.4 908,122.5 907,122.5 907,123.3 906,123.3 906,122.5 905,122.5 905,124.4 904,124.4 904,122.6 903,122.6 903,122.9 902,122.9 902,123.2 901,123.2 901,122.7 900,122.7 900,123.5 899,123.5 899,122.4 898,122.4 898,122.4 897,122.4 897,122.4 896,122.4 896,123.5 895,123.5 895,123.5 894,123.5 894,123.6 893,123.6 893,123.3 892,123.3 892,124.8 891,124.8 891,122.6 890,122.6 890,122.6 889,122.6 889,123.9 888,123.9 888,124.2 887,124.2 887,124.3 886,124.3 886,122.5 885,122.5 885,122.7 884,122.7 884,123.0 883,123.0 883,123.6 882,123.6 882,123.0 881,123.0 881,120.5 880,120.5 880,120.5 879,120.5 879,120.5 878,120.5 878,120.5 877,120.5 877,120.5 876,120.5 876,120.5 875,120.5 875,120.5 874,120.5 874,120.5 873,120.5 873,120.5 872,120.5 872,120.6 871,120.6 871,121.4 870,121.4 870,121.3 869,121.3 869,121.7 868,121.7 868,123.6 867,123.6 867,122.5 866,122.5 866,122.2 865,122.2 865,123.7 864,123.7 864,124.1 863,124.1 863,123.4 862,123.4 862,123.3 861,123.3 861,122.8 860,122.8 860,122.7 859,122.7 859,122.8 858,122.8 858,124.0 857,124.0 857,122.5 856,122.5 856,122.8 855,122.8 855,123.1 854,123.1 854,122.8 853,122.8 853,122.7 852,122.7 852,123.8 851,123.8 851,123.7 850,123.7 850,124.2 849,124.2 849,123.0 848,123.0 848,122.5 847,122.5 847,123.8 846,123.8 846,123.0 845,123.0 845,123.6 844,123.6 844,122.9 843,122.9 843,123.7 842,123.7 842,124.2 841,124.2 841,122.7 840,122.7 840,122.8 839,122.8 839,123.0 838,123.0 838,122.8 837,122.8 837,123.0 836,123.0 836,123.7 835,123.7 835,123.2 834,123.2 834,124.4 833,124.4 833,122.5 832,122.5 832,123.6 831,123.6 831,123.7 830,123.7 830,123.1 829,123.1 829,123.4 828,123.4 828,123.2 827,123.2 827,124.7 826,124.7 826,123.2 825,123.2 825,124.6 824,124.6 824,122.8 823,122.8 823,123.7 822,123.7 822,123.4 821,123.4 821,122.6 820,122.6 820,125.4 819,125.4 819,123.9 818,123.9 818,123.4 817,123.4 817,124.2 816,124.2 816,123.0 815,123.0 815,124.6 814,124.6 814,123.4 813,123.4 813,123.5 812,123.5 812,123.6 811,123.6 811,123.4 810,123.4 810,123.8 809,123.8 809,122.7 808,122.7 808,122.5 807,122.5 807,122.9 806,122.9 806,122.9 805,122.9 805,125.3 804,125.3 804,122.9 803,122.9 803,123.3 802,123.3 802,123.5 801,123.5 801,123.7 800,123.7 800,123.6 799,123.6 799,122.6 798,122.6 798,122.9 797,122.9 797,122.6 796,122.6 796,123.0 795,123.0 795,123.1 794,123.1 794,123.2 793,123.2 793,125.2 792,125.2 792,122.6 791,122.6 791,122.5 790,122.5 790,122.5 789,122.5 789,122.6 788,122.6 788,123.0 787,123.0 787,123.8 786,123.8 786,124.8 785,124.8 785,122.8 784,122.8 784,123.5 783,123.5 783,123.7 782,123.7 782,125.1 781,125.1 781,124.3 780,124.3 780,124.1 779,124.1 779,122.9 778,122.9 778,123.0 777,123.0 777,125.4 776,125.4 776,123.8 775,123.8 775,122.6 774,122.6 774,124.5 773,124.5 773,123.1 772,123.1 772,123.4 771,123.4 771,125.3 770,125.3 770,123.3 769,123.3 769,123.7 768,123.7 768,124.6 767,124.6 767,124.1 766,124.1 766,125.7 765,125.7 765,123.8 764,123.8 764,122.7 763,122.7 763,123.6 762,123.6 762,123.3 761,123.3 761,124.4 760,124.4 760,123.0 759,123.0 759,123.1 758,123.1 758,124.4 757,124.4 757,125.0 756,125.0 756,124.6 755,124.6 755,124.8 754,124.8 754,123.8 753,123.8 753,124.0 752,124.0 752,124.4 751,124.4 751,123.5 750,123.5 750,123.2 749,123.2 749,122.8 748,122.8 748,125.2 747,125.2 747,122.8 746,122.8 746,120.5 745,120.5 745,120.5 744,120.5 744,120.5 743,120.5 743,120.5 742,120.5 742,120.5 741,120.5 741,120.5 740,120.5 740,120.5 739,120.5 739,120.5 738,120.5 738,120.8 737,120.8 737,120.8 736,120.8 736,121.1 735,121.1 735,121.3 734,121.3 734,121.4 733,121.4 733,122.3 732,122.3 732,123.0 731,123.0 731,123.1 730,123.1 730,122.9 729,122.9 729,125.2 728,125.2 728,122.4 727,122.4 727,123.1 726,123.1 726,123.9 725,123.9 725,122.9 724,122.9 724,123.6 723,123.6 723,122.5 722,122.5 722,122.4 721,122.4 721,122.7 720,122.7 720,123.8 719,123.8 719,123.2 718,123.2 718,122.9 717,122.9 717,123.3 716,123.3 716,122.6 715,122.6 715,123.1 714,123.1 714,122.3 713,122.3 713,122.2 712,122.2 712,124.4 711,124.4 711,123.4 710,123.4 710,123.6 709,123.6 709,123.0 708,123.0 708,123.5 707,123.5 707,122.2 706,122.2 706,122.5 705,122.5 705,123.2 704,123.2 704,123.3 703,123.3 703,123.3 702,123.3 702,122.9 701,122.9 701,123.4 700,123.4 700,122.6 699,122.6 699,124.7 698,124.7 698,123.0 697,123.0 697,122.5 696,122.5 696,124.3 695,124.3 695,123.5 694,123.5 694,124.0 693,124.0 693,122.6 692,122.6 692,122.8 691,122.8 691,123.0 690,123.0 690,123.5 689,123.5 689,123.2 688,123.2 688,122.5 687,122.5 687,123.4 686,123.4 686,122.2 685,122.2 685,123.4 684,123.4 684,123.0 683,123.0 683,122.9 682,122.9 682,123.8 681,123.8 681,124.5 680,124.5 680,122.4 679,122.4 679,123.0 678,123.0 678,124.0 677,124.0 677,123.1 676,123.1 676,123.0 675,123.0 675,123.5 674,123.5 674,122.3 673,122.3 673,124.7 672,124.7 672,124.6 671,124.6 671,122.5 670,122.5 670,122.9 669,122.9 669,123.2 668,123.2 668,125.0 667,125.0 667,122.6 666,122.6 666,122.6 665,122.6 665,123.1 664,123.1 664,123.3 663,123.3 663,123.3 662,123.3 662,122.6 661,122.6 661,125.3 660,125.3 660,122.7 659,122.7 659,123.2 658,123.2 658,122.2 657,122.2 657,123.1 656,123.1 656,122.3 655,122.3 655,123.4 654,123.4 654,122.3 653,122.3 653,122.9 652,122.9 652,122.6 651,122.6 651,123.4 650,123.4 650,122.7 649,122.7 649,123.0 648,123.0 648,122.9 647,122.9 647,122.6 646,122.6 646,122.8 645,122.8 645,122.8 644,122.8 644,123.1 643,123.1 643,123.5 642,123.5 642,123.6 641,123.6 641,122.6 640,122.6 640,123.4 639,123.4 639,122.8 638,122.8 638,122.8 637,122.8 637,124.5 636,124.5 636,124.1 635,124.1 635,123.0 634,123.0 634,123.0 633,123.0 633,124.1 632,124.1 632,123.6 631,123.6 631,123.7 630,123.7 630,122.2 629,122.2 629,123.0 628,123.0 628,123.2 627,123.2 627,122.5 626,122.5 626,124.4 625,124.4 625,124.1 624,124.1 624,123.5 623,123.5 623,123.0 622,123.0 622,122.9 621,122.9 621,122.9 620,122.9 620,123.4 619,123.4 619,125.1 618,125.1 618,122.5 617,122.5 617,122.9 616,122.9 616,123.4 615,123.4 615,124.9 614,124.9 614,122.9 613,122.9 613,122.7 612,122.7 612,122.6 611,122.6 611,123.0 610,123.0 610,123.2 609,123.2 609,122.5 608,122.5 608,124.6 607,124.6 607,123.1 606,123.1 606,122.3 605,122.3 605,124.6 604,124.6 604,125.2 603,125.2 603,122.8 602,122.8 602,122.6 601,122.6 601,122.9 600,122.9 600,122.5 599,122.5 599,123.2 598,123.2 598,122.7 597,122.7 597,123.1 596,123.1 596,122.3 595,122.3 595,122.5 594,122.5 594,122.6 593,122.6 593,123.2 592,123.2 592,123.1 591,123.1 591,122.8 590,122.8 590,123.4 589,123.4 589,122.3 588,122.3 588,125.3 587,125.3 587,122.5 586,122.5 586,122.2 585,122.2 585,123.0 584,123.0 584,123.6 583,123.6 583,123.4 582,123.4 582,123.5 581,123.5 581,123.0 580,123.0 580,123.3 579,123.3 579,123.1 578,123.1 578,123.2 577,123.2 577,124.4 576,124.4 576,122.2 575,122.2 575,124.7 574,124.7 574,122.9 573,122.9 573,124.0 572,124.0 572,122.5 571,122.5 571,122.5 570,122.5 570,123.2 569,123.2 569,122.4 568,122.4 568,122.9 567,122.9 567,123.6 566,123.6 566,123.0 565,123.0 565,122.6 564,122.6 564,122.6 563,122.6 563,125.4 562,125.4 562,122.4 561,122.4 561,124.7 560,124.7 560,123.2 559,123.2 559,122.8 558,122.8 558,120.5 557,120.5 557,120.5 556,120.5 556,120.5 555,120.5 555,120.5 554,120.5 554,120.5 553,120.5 553,120.5 552,120.5 552,120.5 551,120.5 551,120.5 550,120.5 550,120.8 549,120.8 549,121.4 548,121.4 548,121.0 547,121.0 547,122.0 546,122.0 546,122.2 545,122.2 545,122.5 544,122.5 544,122.0 543,122.0 543,122.5 542,122.5 542,123.0 541,123.0 541,123.2 540,123.2 540,122.9 539,122.9 539,123.3 538,123.3 538,124.5 537,124.5 537,123.0 536,123.0 536,123.7 535,123.7 535,123.2 534,123.2 534,123.0 533,123.0 533,124.2 532,124.2 532,122.6 531,122.6 531,122.7 530,122.7 530,123.0 529,123.0 529,123.1 528,123.1 528,122.4 527,122.4 527,123.6 526,123.6 526,122.5 525,122.5 525,123.0 524,123.0 524,123.0 523,123.0 523,125.6 522,125.6 522,123.5 521,123.5 521,123.6 520,123.6 520,122.9 519,122.9 519,123.9 518,123.9 518,125.0 517,125.0 517,123.6 516,123.6 516,123.1 515,123.1 515,122.8 514,122.8 514,122.9 513,122.9 513,123.5 512,123.5 512,123.1 511,123.1 511,124.4 510,124.4 510,123.5 509,123.5 509,123.8 508,123.8 508,123.2 507,123.2 507,123.8 506,123.8 506,123.6 505,123.6 505,123.0 504,123.0 504,122.6 503,122.6 503,124.2 502,124.2 502,124.4 501,124.4 501,125.0 500,125.0 500,123.3 499,123.3 499,122.7 498,122.7 498,123.2 497,123.2 497,122.4 496,122.4 496,122.8 495,122.8 495,123.3 494,123.3 494,122.6 493,122.6 493,123.6 492,123.6 492,122.6 491,122.6 491,122.6 490,122.6 490,124.3 489,124.3 489,124.1 488,124.1 488,122.6 487,122.6 487,123.8 486,123.8 486,123.4 485,123.4 485,122.8 484,122.8 484,124.8 483,124.8 483,122.8 482,122.8 482,123.6 481,123.6 481,123.4 480,123.4 480,122.9 479,122.9 479,123.6 478,123.6 478,123.0 477,123.0 477,123.3 476,123.3 476,122.7 475,122.7 475,122.4 474,122.4 474,124.9 473,124.9 473,123.2 472,123.2 472,123.3 471,123.3 471,123.4 470,123.4 470,123.6 469,123.6 469,123.9 468,123.9 468,122.8 467,122.8 467,122.8 466,122.8 466,123.4 465,123.4 465,124.9 464,124.9 464,122.5 463,122.5 463,123.4 462,123.4 462,123.6 461,123.6 461,123.0 460,123.0 460,123.7 459,123.7 459,123.7 458,123.7 458,123.0 457,123.0 457,122.7 456,122.7 456,123.7 455,123.7 455,122.6 454,122.6 454,122.9 453,122.9 453,123.0 452,123.0 452,123.7 451,123.7 451,123.6 450,123.6 450,123.4 449,123.4 449,122.5 448,122.5 448,125.3 447,125.3 447,123.2 446,123.2 446,123.0 445,123.0 445,122.7 444,122.7 444,122.4 443,122.4 443,123.7 442,123.7 442,122.6 441,122.6 441,122.5 440,122.5 440,123.7 439,123.7 439,122.9 438,122.9 438,122.5 437,122.5 437,123.0 436,123.0 436,122.8 435,122.8 435,123.7 434,123.7 434,125.0 433,125.0 433,122.6 432,122.6 432,125.3 431,125.3 431,122.4 430,122.4 430,123.7 429,123.7 429,123.5 428,123.5 428,123.5 427,123.5 427,124.0 426,124.0 426,122.5 425,122.5 425,123.1 424,123.1 424,123.5 423,123.5 423,122.6 422,122.6 422,123.3 421,123.3 421,122.7 420,122.7 420,123.5 419,123.5 419,122.7 418,122.7 418,123.2 417,123.2 417,124.6 416,124.6 416,124.5 415,124.5 415,122.6 414,122.6 414,122.5 413,122.5 413,123.6 412,123.6 412,123.1 411,123.1 411,123.6 410,123.6 410,123.3 409,123.3 409,123.2 408,123.2 408,125.2 407,125.2 407,122.5 406,122.5 406,122.8 405,122.8 405,122.6 404,122.6 404,122.9 403,122.9 403,124.2 402,124.2 402,124.0 401,124.0 401,124.3 400,124.3 400,122.6 399,122.6 399,122.5 398,122.5 398,124.8 397,124.8 397,123.6 396,123.6 396,122.5 395,122.5 395,122.6 394,122.6 394,124.2 393,124.2 393,122.5 392,122.5 392,125.4 391,125.4 391,123.8 390,123.8 390,123.6 389,123.6 389,122.9 388,122.9 388,122.4 387,122.4 387,124.1 386,124.1 386,124.7 385,124.7 385,123.3 384,123.3 384,122.7 383,122.7 383,120.5 382,120.5 382,120.5 381,120.5 381,120.5 380,120.5 380,120.5 379,120.5 379,120.5 378,120.5 378,120.5 377,120.5 377,120.5 376,120.5 376,120.5 375,120.5 375,120.5 374,120.5 374,120.8 373,120.8 373,121.1 372,121.1 372,122.1 371,122.1 371,121.4 370,121.4 370,122.5 369,122.5 369,122.3 368,122.3 368,123.1 367,123.1 367,122.4 366,122.4 366,123.3 365,123.3 365,123.2 364,123.2 364,123.2 363,123.2 363,123.2 362,123.2 362,123.3 361,123.3 361,122.8 360,122.8 360,123.4 359,123.4 359,122.6 358,122.6 358,123.5 357,123.5 357,122.5 356,122.5 356,123.5 355,123.5 355,122.5 354,122.5 354,122.7 353,122.7 353,122.6 352,122.6 352,123.5 351,123.5 351,123.5 350,123.5 350,123.5 349,123.5 349,122.3 348,122.3 348,122.9 347,122.9 347,123.6 346,123.6 346,123.6 345,123.6 345,124.0 344,124.0 344,125.0 343,125.0 343,122.8 342,122.8 342,122.8 341,122.8 341,123.6 340,123.6 340,122.7 339,122.7 339,123.4 338,123.4 338,124.6 337,124.6 337,122.6 336,122.6 336,122.6 335,122.6 335,123.3 334,123.3 334,122.5 333,122.5 333,124.6 332,124.6 332,125.5 331,125.5 331,123.7 330,123.7 330,123.4 329,123.4 329,124.2 328,124.2 328,122.7 327,122.7 327,123.6 326,123.6 326,123.7 325,123.7 325,123.3 324,123.3 324,125.1 323,125.1 323,123.0 322,123.0 322,123.2 321,123.2 321,123.6 320,123.6 320,123.4 319,123.4 319,123.7 318,123.7 318,122.5 317,122.5 317,122.7 316,122.7 316,123.0 315,123.0 315,123.5 314,123.5 314,123.9 313,123.9 313,123.8 312,123.8 312,125.0 311,125.0 311,123.5 310,123.5 310,123.2 309,123.2 309,124.5 308,124.5 308,124.6 307,124.6 307,123.5 306,123.5 306,124.3 305,124.3 305,122.7 304,122.7 304,124.4 303,124.4 303,122.8 302,122.8 302,122.8 301,122.8 301,122.8 300,122.8 300,122.8 299,122.8 299,123.6 298,123.6 298,123.1 297,123.1 297,123.5 296,123.5 296,122.5 295,122.5 295,123.4 294,123.4 294,123.6 293,123.6 293,122.8 292,122.8 292,122.7 291,122.7 291,124.0 290,124.0 290,122.7 289,122.7 289,122.8 288,122.8 288,122.4 287,122.4 287,122.5 286,122.5 286,123.1 285,123.1 285,122.8 284,122.8 284,122.4 283,122.4 283,123.5 282,123.5 282,123.4 281,123.4 281,122.9 280,122.9 280,124.5 279,124.5 279,122.9 278,122.9 278,122.3 277,122.3 277,122.6 276,122.6 276,125.2 275,125.2 275,122.8 274,122.8 274,123.6 273,123.6 273,122.4 272,122.4 272,122.9 271,122.9 271,125.0 270,125.0 270,122.9 269,122.9 269,122.6 268,122.6 268,123.0 267,123.0 267,122.7 266,122.7 266,122.4 265,122.4 265,123.4 264,123.4 264,123.5 263,123.5 263,122.8 262,122.8 262,124.3 261,124.3 261,122.8 260,122.8 260,123.2 259,123.2 259,122.9 258,122.9 258,122.3 257,122.3 257,123.5 256,123.5 256,124.0 255,124.0 255,122.7 254,122.7 254,122.8 253,122.8 253,123.2 252,123.2 252,123.6 251,123.6 251,122.9 250,122.9 250,124.7 249,124.7 249,123.9 248,123.9 248,124.4 247,124.4 247,123.8 246,123.8 246,122.9 245,122.9 245,123.2 244,123.2 244,123.7 243,123.7 243,122.5 242,122.5 242,123.2 241,123.2 241,123.7 240,123.7 240,125.1 239,125.1 239,123.2 238,123.2 238,125.2 237,125.2 237,123.3 236,123.3 236,123.5 235,123.5 235,123.3 234,123.3 234,122.6 233,122.6 233,123.5 232,123.5 232,124.3 231,124.3 231,124.9 230,124.9 230,123.3 229,123.3 229,122.8 228,122.8 228,123.7 227,123.7 227,124.8 226,124.8 226,124.4 225,124.4 225,122.3 224,122.3 224,122.7 223,122.7 223,122.6 222,122.6 222,122.4 221,122.4 221,123.5 220,123.5 220,123.6 219,123.6 219,122.4 218,122.4 218,122.9 217,122.9 217,123.2 216,123.2 216,122.8 215,122.8 215,123.5 214,123.5 214,123.2 213,123.2 213,123.0 212,123.0 212,123.4 211,123.4 211,125.0 210,125.0 210,120.5 209,120.5 209,120.5 208,120.5 208,120.5 207,120.5 207,120.5 206,120.5 206,120.5 205,120.5 205,120.5 204,120.5 204,120.5 203,120.5 203,120.5 202,120.5 202,120.5 201,120.5 201,120.5 200,120.5 200,120.5 199,120.5 199,120.5 198,120.5 198,120.6 197,120.6 197,120.6 196,120.6 196,121.2 195,121.2 195,121.3 194,121.3 194,121.8 193,121.8 193,121.6 192,121.6 192,122.1 191,122.1 191,122.4 190,122.4 190,125.3 189,125.3 189,124.1 188,124.1 188,122.7 187,122.7 187,123.5 186,123.5 186,123.9 185,123.9 185,122.5 184,122.5 184,123.6 183,123.6 183,123.7 182,123.7 182,122.8 181,122.8 181,123.6 180,123.6 180,122.5 179,122.5 179,123.5 178,123.5 178,122.6 177,122.6 177,123.4 176,123.4 176,122.7 175,122.7 175,123.6 174,123.6 174,122.8 173,122.8 173,123.9 172,123.9 172,124.1 171,124.1 171,124.4 170,124.4 170,124.9 169,124.9 169,122.8 168,122.8 168,123.7 167,123.7 167,123.5 166,123.5 166,123.0 165,123.0 165,124.8 164,124.8 164,123.0 163,123.0 163,123.2 162,123.2 162,123.2 161,123.2 161,124.5 160,124.5 160,123.9 159,123.9 159,124.6 158,124.6 158,124.3 157,124.3 157,123.4 156,123.4 156,123.7 155,123.7 155,122.5 154,122.5 154,124.8 153,124.8 153,123.6 152,123.6 152,123.3 151,123.3 151,122.3 150,122.3 150,122.8 149,122.8 149,122.7 148,122.7 148,123.8 147,123.8 147,123.2 146,123.2 146,123.7 145,123.7 145,123.9 144,123.9 144,123.4 143,123.4 143,122.7 142,122.7 142,123.0 141,123.0 141,125.0 140,125.0 140,123.4 139,123.4 139,124.3 138,124.3 138,122.4 137,122.4 137,123.6 136,123.6 136,123.7 135,123.7 135,123.5 134,123.5 134,123.0 133,123.0 133,122.7 132,122.7 132,123.3 131,123.3 131,123.5 130,123.5 130,123.0 129,123.0 129,125.0 128,125.0 128,123.3 127,123.3 127,122.7 126,122.7 126,122.5 125,122.5 125,122.4 124,122.4 124,124.5 123,124.5 123,122.8 122,122.8 122,123.6 121,123.6 121,124.5 120,124.5 120,123.4 119,123.4 119,123.6 118,123.6 118,125.0 117,125.0 117,123.5 116,123.5 116,124.1 115,124.1 115,123.5 114,123.5 114,122.9 113,122.9 113,122.8 112,122.8 112,124.5 111,124.5 111,123.3 110,123.3 110,122.5 109,122.5 109,123.3 108,123.3 108,122.9 107,122.9 107,123.4 106,123.4 106,123.9 105,123.9 105,124.2 104,124.2 104,122.7 103,122.7 103,123.9 102,123.9 102,122.6 101,122.6 101,122.3 100,122.3 100,123.1 99,123.1 99,123.7 98,123.7 98,124.2 97,124.2 97,123.9 96,123.9 96,122.9 95,122.9 95,123.6 94,123.6 94,122.4 93,122.4 93,123.4 92,123.4 92,123.0 91,123.0 91,122.6 90,122.6 90,124.3 89,124.3 89,123.6 88,123.6 88,122.6 87,122.6 87,123.0 86,123.0 86,123.2 85,123.2 85,122.7 84,122.7 84,123.3 83,123.3 83,122.3 82,122.3 82,123.5 81,123.5 81,124.3 80,124.3 80,124.3 79,124.3 79,123.9 78,123.9 78,123.6 77,123.6 77,122.5 76,122.5 76,122.9 75,122.9 75,122.3 74,122.3 74,122.6 73,122.6 73,123.0 72,123.0 72,123.0 71,123.0 71,122.5 70,122.5 70,123.9 69,123.9 69,123.2 68,123.2 68,123.6 67,123.6 67,122.7 66,122.7 66,122.9 65,122.9 65,122.7 64,122.7 64,124.6 63,124.6 63,123.6 62,123.6 62,122.4 61,122.4 61,122.7 60,122.7 60,123.9 59,123.9 59,123.5 58,123.5 58,122.4 57,122.4 57,123.2 56,123.2 56,123.2 55,123.2 55,123.1 54,123.1 54,124.9 53,124.9 53,124.1 52,124.1 52,122.3 51,122.3 51,123.6 50,123.6 50,123.3 49,123.3 49,123.8 48,123.8 48,123.4 47,123.4 47,122.6 46,122.6 46,124.0 45,124.0 45,123.9 44,123.9 44,123.4 43,123.4 43,123.2 42,123.2 42,122.4 41,122.4 41,123.0 40,123.0 40,122.6 39,122.6 39,123.6 38,123.6 38,123.6 37,123.6 37,122.6 36,122.6 36,125.0 35,125.0 35,122.5 34,122.5 34,122.9 33,122.9 33,122.9 32,122.9 32,122.3 31,122.3 31,122.2 30,122.2 30,121.5 29,121.5Z" fill="#5b9ef6"/>
<rect x="29" y="110.8" width="1038" height="1.4" fill="#aaa59f"/>
<line x1="29.5" y1="97" x2="29.5" y2="127" stroke="#f0d020" stroke-width="1" stroke-dasharray="1,2"/>
</svg>
<div class="a" style="left:5px;top:145px;width:23px;height:175px;background:#30363e;border-radius:3px 0 0 0"></div>
<div class="a" style="left:13px;top:240px;color:#b8bcc2;font-size:12px">L</div>
<svg class="a" style="left:0;top:90px" width="1280" height="230" viewBox="0 90 1280 230">
<!-- collapse icon -->
<g fill="none" stroke="#b0b4ba" stroke-width="1.3"><path d="M10.8 101.3 L16 106.8 L21.2 101.3"/><path d="M10.8 122 L16 116.5 L21.2 122"/></g>
<rect x="9" y="110.8" width="14" height="1.8" fill="#b0b4ba"/>
<!-- playhead -->
<rect x="28" y="145" width="1" height="172" fill="#15171a"/>
<line x1="29.5" y1="146" x2="29.5" y2="317" stroke="#f2e03a" stroke-width="1" stroke-dasharray="1,1.5"/>
<path d="M29.5 148.5 C27 145 23.5 142 23.5 139.5 A6 6 0 0 1 35.5 139.5 C35.5 142 32 145 29.5 148.5Z" fill="#e9ad35"/>
<!-- corner triangle -->
<path d="M1060 137 H1067 V144 Z" fill="#a0a0a0"/>
<!-- dB scale -->
<g stroke="#6b7078" stroke-width="1">
<line x1="1067.5" y1="144" x2="1067.5" y2="317"/>
<line x1="1067" y1="144.5" x2="1072" y2="144.5"/>
<line x1="1067" y1="182.5" x2="1072" y2="182.5"/>
<line x1="1067" y1="214.5" x2="1072" y2="214.5"/>
<line x1="1067" y1="229.5" x2="1072" y2="229.5"/>
<line x1="1067" y1="247.5" x2="1072" y2="247.5"/>
<line x1="1067" y1="264.5" x2="1072" y2="264.5"/>
<line x1="1067" y1="279.5" x2="1072" y2="279.5"/>
<line x1="1067" y1="312.5" x2="1072" y2="312.5"/>
<line x1="1152" y1="178.5" x2="1157" y2="178.5"/>
<line x1="1152" y1="213.5" x2="1157" y2="213.5"/>
<line x1="1152" y1="247.5" x2="1157" y2="247.5"/>
<line x1="1152" y1="282.5" x2="1157" y2="282.5"/>
</g>
<g fill="#6b7078">
<rect x="1067" y="162" width="2" height="1"/><rect x="1067" y="197" width="2" height="1"/><rect x="1067" y="239" width="2" height="1"/><rect x="1067" y="255" width="2" height="1"/><rect x="1067" y="297" width="2" height="1"/>
</g>
<line x1="1110.5" y1="147" x2="1110.5" y2="317" stroke="#5d6269" stroke-width="1" stroke-dasharray="1,11"/>
<defs><linearGradient id="cbar" x1="0" y1="144" x2="0" y2="317" gradientUnits="userSpaceOnUse">
<stop offset="0" stop-color="#ffffff"/><stop offset="0.2" stop-color="#fff5c0"/><stop offset="0.45" stop-color="#f9d650"/><stop offset="0.75" stop-color="#f5a030"/><stop offset="1" stop-color="#ee7020"/></linearGradient></defs>
<rect x="1152" y="144" width="4" height="173" fill="url(#cbar)"/>
</svg>
<div class="a" style="font-size:11.5px;color:#7d8289;line-height:12px">
<span class="a" style="left:1073px;top:149px">dB</span>
<span class="a" style="left:1072px;top:176px">-4</span>
<span class="a" style="left:1072px;top:208px">-10</span>
<span class="a" style="left:1072px;top:223px">-15</span>
<span class="a" style="left:1072px;top:241px">-∞</span>
<span class="a" style="left:1072px;top:258px">-15</span>
<span class="a" style="left:1072px;top:273px">-10</span>
<span class="a" style="left:1072px;top:306px">-4</span>
<span class="a" style="left:1110px;top:165px">-50k</span>
<span class="a" style="left:1110px;top:202px">-20k</span>
<span class="a" style="left:1110px;top:230px">-10k</span>
<span class="a" style="left:1110px;top:256px">-5k</span>
<span class="a" style="left:1110px;top:288px">-2k</span>
<span class="a" style="left:1110px;top:306px">-1k</span>
<span class="a" style="left:1165px;top:149px">dB</span>
<span class="a" style="left:1165px;top:172px">10</span>
<span class="a" style="left:1165px;top:207px">20</span>
<span class="a" style="left:1165px;top:241px">30</span>
<span class="a" style="left:1165px;top:276px">40</span>
<span class="a" style="left:1165px;top:310px">50</span>
</div>
<!-- right toolbar -->
<div class="a" style="left:1220px;top:93px;width:55px;height:230px;background:#22262d;border-radius:5px 5px 0 0"></div>
<svg class="a" style="left:1220px;top:93px" width="55" height="230" viewBox="1220 93 55 230">
<g fill="#b4b8be">
<rect x="1233.7" y="118.3" width="1" height="1"/><rect x="1237.5" y="118.3" width="1" height="1"/><rect x="1246" y="118.3" width="1" height="1"/><rect x="1249.8" y="118.3" width="1" height="1"/>
<rect x="1242" y="117.5" width="1.1" height="4.5"/>
<path d="M1239.6 123.5 H1245.5 L1242.55 128 Z"/>
<rect x="1237" y="144" width="4.8" height="12.3"/><rect x="1244" y="144" width="4.8" height="12.3"/>
</g>
<g fill="none" stroke="#b4b8be" stroke-width="1.1">
<rect x="1237.5" y="136.8" width="3.8" height="8"/><rect x="1244.5" y="136.8" width="3.8" height="8"/>
<path d="M1234.8 139.5 Q1232.8 143.7 1234.8 148 M1251 139.5 Q1253 143.7 1251 148"/>
<path d="M1233.5 171 H1237.2 L1243.2 167.5 V180.5 L1237.2 177 H1233.5 Z" stroke-linejoin="round"/>
<path d="M1246.5 172.3 Q1248 174 1246.5 175.7 M1248.8 170.5 Q1251.3 174 1248.8 177.5 M1251.2 168.7 Q1254.5 174 1251.2 179.3"/>
<circle cx="1239.6" cy="202" r="6.6"/><circle cx="1245.8" cy="202" r="6.6"/>
<path d="M1233 220.5 H1252.5 M1233 238.5 H1252.5 M1242.6 221.5 V237.5 M1234.8 228 V232 M1239.5 226 V234.5 M1246 226 V234.5 M1250.3 228 V232"/>
<circle cx="1242.9" cy="258.6" r="6"/><path d="M1236 265.2 L1249.8 251.3"/>
<path d="M1236.5 278 C1233 283 1234 291 1240 294 C1244 296 1249 295 1251.5 292 L1248.5 289.5 L1251.5 286.5 L1249 284 L1246 287 L1243.5 284.5 L1246.5 281.5 L1244 279 L1241 282 Z" stroke-linejoin="round"/>
<rect x="1233.5" y="304.5" width="19.3" height="17"/><circle cx="1243" cy="314.5" r="5"/>
</g>
</svg>

<!-- spectrum analyzer panel -->
<div class="a" style="left:29px;top:317px;width:1038px;height:7px;background:#c98a4a"></div>
<div class="a" style="left:917px;top:317px;width:1px;height:371px;background:linear-gradient(#9a7458 0,#9a7458 83px,#65788f 83px,#65788f 173px,#8a6c58 173px,#8a6c58 243px,#50565e 243px)"></div>
<div class="a ptitle" style="left:6px;top:317px;width:911px;height:30px;border-radius:4px 4px 0 0"><span class="a" style="left:9px;top:8px">Spectrum Analyzer</span>
<div class="a" style="left:891px;top:7px;width:19px;height:19px;background:#dadada;color:#f4f4f4;font-size:11px;text-align:center;line-height:19px">×</div></div>
<div class="a ptool" style="left:6px;top:347px;width:911px;height:40px"></div>
<div class="a pbody" style="left:6px;top:387px;width:911px;height:301px;border-left:1px solid #454a51;border-bottom:1px solid #454a51;border-radius:0 0 0 4px"></div>
<svg class="a" style="left:0;top:347px" width="920" height="40" viewBox="0 347 920 40">
<path d="M16.3 371.2 L19.25 366.2 L22.4 371.2 L25.9 360.8 L29.7 371 L32.8 366 L35.7 371.4" fill="none" stroke="#aab0b8" stroke-width="1.2" stroke-linejoin="round"/>
<g fill="none" stroke="#c0c3c8" stroke-width="1.2">
<path id="gear" d="M873.55 364.53 L876.28 364.53 L876.28 369.47 L873.55 369.47 L873.38 369.89 L875.31 371.81 L871.81 375.31 L869.89 373.38 L869.47 373.55 L869.47 376.28 L864.53 376.28 L864.53 373.55 L864.11 373.38 L862.19 375.31 L858.69 371.81 L860.62 369.89 L860.45 369.47 L857.72 369.47 L857.72 364.53 L860.45 364.53 L860.62 364.11 L858.69 362.19 L862.19 358.69 L864.11 360.62 L864.53 360.45 L864.53 357.72 L869.47 357.72 L869.47 360.45 L869.89 360.62 L871.81 358.69 L875.31 362.19 L873.38 364.11Z" stroke-linejoin="round"/>
<circle cx="867" cy="367" r="3.6"/>
<circle cx="897" cy="367" r="9.8"/>
<path d="M894.4 363.6 a2.8 2.8 0 1 1 4.2 2.4 c-0.7 0.4 -1.1 0.9 -1.1 1.7 v0.9"/>
</g>
<rect x="896.3" y="371.3" width="1.6" height="1.6" fill="#c0c3c8"/>
</svg>
<div class="a" style="left:26px;top:394px;color:#b9bcc1;font-size:12px">Start</div>
<div class="a" style="left:142px;top:394px;color:#b9bcc1;font-size:12px">End</div>
<div class="a" style="left:26px;top:413px;color:#eeeeee;font-size:14px;letter-spacing:0.8px">00:00:00.000</div>
<div class="a" style="left:142px;top:413px;color:#eeeeee;font-size:14px;letter-spacing:0.8px">00:17:37.235</div>
<div class="a" style="left:789px;top:417px;color:#c8cbd0;font-size:12px">L</div>
<div class="a" style="left:801px;top:422px;width:20px;height:6px;border-radius:3px;background:#ececec"></div>
<div class="a" style="left:833px;top:417px;color:#c8cbd0;font-size:12px">R</div>
<div class="a" style="left:847px;top:422px;width:20px;height:6px;border-radius:3px;background:#2a86f5"></div>
<svg class="a" style="left:0;top:420px" width="920" height="250" viewBox="0 420 920 250"><line x1="178.5" y1="437.5" x2="178.5" y2="644.5" stroke="#1b1e23"/><line x1="230.5" y1="437.5" x2="230.5" y2="644.5" stroke="#1b1e23"/><line x1="266.5" y1="437.5" x2="266.5" y2="644.5" stroke="#1b1e23"/><line x1="280.5" y1="437.5" x2="280.5" y2="644.5" stroke="#1b1e23"/><line x1="294.5" y1="437.5" x2="294.5" y2="644.5" stroke="#1b1e23"/><line x1="353.5" y1="437.5" x2="353.5" y2="644.5" stroke="#1b1e23"/><line x1="436.5" y1="437.5" x2="436.5" y2="644.5" stroke="#1b1e23"/><line x1="500.5" y1="437.5" x2="500.5" y2="644.5" stroke="#1b1e23"/><line x1="540.5" y1="437.5" x2="540.5" y2="644.5" stroke="#1b1e23"/><line x1="558.5" y1="437.5" x2="558.5" y2="644.5" stroke="#1b1e23"/><line x1="572.5" y1="437.5" x2="572.5" y2="644.5" stroke="#1b1e23"/><line x1="636.5" y1="437.5" x2="636.5" y2="644.5" stroke="#1b1e23"/><line x1="722.5" y1="437.5" x2="722.5" y2="644.5" stroke="#1b1e23"/><line x1="786.5" y1="437.5" x2="786.5" y2="644.5" stroke="#1b1e23"/><line x1="830.5" y1="437.5" x2="830.5" y2="644.5" stroke="#1b1e23"/><line x1="846.5" y1="437.5" x2="846.5" y2="644.5" stroke="#1b1e23"/><line x1="860.5" y1="437.5" x2="860.5" y2="644.5" stroke="#1b1e23"/><line x1="26.5" y1="470.5" x2="869.5" y2="470.5" stroke="#2b3037"/><line x1="26.5" y1="503.5" x2="869.5" y2="503.5" stroke="#2b3037"/><line x1="26.5" y1="536.5" x2="869.5" y2="536.5" stroke="#2b3037"/><line x1="26.5" y1="568.5" x2="869.5" y2="568.5" stroke="#2b3037"/><line x1="26.5" y1="600.5" x2="869.5" y2="600.5" stroke="#2b3037"/><line x1="26.5" y1="628.5" x2="869.5" y2="628.5" stroke="#2b3037"/><line x1="46.5" y1="437.5" x2="46.5" y2="647.5" stroke="#3a4049"/><line x1="92.5" y1="437.5" x2="92.5" y2="647.5" stroke="#3a4049"/><line x1="142.5" y1="437.5" x2="142.5" y2="647.5" stroke="#3a4049"/><line x1="206.5" y1="437.5" x2="206.5" y2="647.5" stroke="#3a4049"/><line x1="250.5" y1="437.5" x2="250.5" y2="647.5" stroke="#3a4049"/><line x1="306.5" y1="437.5" x2="306.5" y2="647.5" stroke="#3a4049"/><line x1="388.5" y1="437.5" x2="388.5" y2="647.5" stroke="#3a4049"/><line x1="472.5" y1="437.5" x2="472.5" y2="647.5" stroke="#3a4049"/><line x1="522.5" y1="437.5" x2="522.5" y2="647.5" stroke="#3a4049"/><line x1="586.5" y1="437.5" x2="586.5" y2="647.5" stroke="#3a4049"/><line x1="672.5" y1="437.5" x2="672.5" y2="647.5" stroke="#3a4049"/><line x1="758.5" y1="437.5" x2="758.5" y2="647.5" stroke="#3a4049"/><line x1="810.5" y1="437.5" x2="810.5" y2="647.5" stroke="#3a4049"/><line x1="178.5" y1="644.5" x2="178.5" y2="647.5" stroke="#3a4049"/><line x1="230.5" y1="644.5" x2="230.5" y2="647.5" stroke="#3a4049"/><line x1="266.5" y1="644.5" x2="266.5" y2="647.5" stroke="#3a4049"/><line x1="280.5" y1="644.5" x2="280.5" y2="647.5" stroke="#3a4049"/><line x1="294.5" y1="644.5" x2="294.5" y2="647.5" stroke="#3a4049"/><line x1="353.5" y1="644.5" x2="353.5" y2="647.5" stroke="#3a4049"/><line x1="436.5" y1="644.5" x2="436.5" y2="647.5" stroke="#3a4049"/><line x1="500.5" y1="644.5" x2="500.5" y2="647.5" stroke="#3a4049"/><line x1="540.5" y1="644.5" x2="540.5" y2="647.5" stroke="#3a4049"/><line x1="558.5" y1="644.5" x2="558.5" y2="647.5" stroke="#3a4049"/><line x1="572.5" y1="644.5" x2="572.5" y2="647.5" stroke="#3a4049"/><line x1="636.5" y1="644.5" x2="636.5" y2="647.5" stroke="#3a4049"/><line x1="722.5" y1="644.5" x2="722.5" y2="647.5" stroke="#3a4049"/><line x1="786.5" y1="644.5" x2="786.5" y2="647.5" stroke="#3a4049"/><line x1="830.5" y1="644.5" x2="830.5" y2="647.5" stroke="#3a4049"/><line x1="846.5" y1="644.5" x2="846.5" y2="647.5" stroke="#3a4049"/><line x1="860.5" y1="644.5" x2="860.5" y2="647.5" stroke="#3a4049"/><path d="M26.5,647.5 V437.5 H869.5 V644.5 H26.5" fill="none" stroke="#3e444d"/><line x1="869.5" y1="470.5" x2="875.5" y2="470.5" stroke="#4a5059"/><line x1="869.5" y1="503.5" x2="875.5" y2="503.5" stroke="#4a5059"/><line x1="869.5" y1="536.5" x2="875.5" y2="536.5" stroke="#4a5059"/><line x1="869.5" y1="568.5" x2="875.5" y2="568.5" stroke="#4a5059"/><line x1="869.5" y1="600.5" x2="875.5" y2="600.5" stroke="#4a5059"/><line x1="869.5" y1="628.5" x2="875.5" y2="628.5" stroke="#4a5059"/><line x1="869.5" y1="437.5" x2="872.5" y2="437.5" stroke="#4a5059"/><line x1="869.5" y1="453.5" x2="872.5" y2="453.5" stroke="#4a5059"/><line x1="869.5" y1="486.5" x2="872.5" y2="486.5" stroke="#4a5059"/><line x1="869.5" y1="519.5" x2="872.5" y2="519.5" stroke="#4a5059"/><line x1="869.5" y1="552.5" x2="872.5" y2="552.5" stroke="#4a5059"/><line x1="869.5" y1="584.5" x2="872.5" y2="584.5" stroke="#4a5059"/><line x1="869.5" y1="614.5" x2="872.5" y2="614.5" stroke="#4a5059"/><line x1="869.5" y1="640.5" x2="872.5" y2="640.5" stroke="#4a5059"/><line x1="869.5" y1="644.5" x2="872.5" y2="644.5" stroke="#4a5059"/><line x1="869.5" y1="437.5" x2="875.5" y2="437.5" stroke="#4a5059"/><line x1="869.5" y1="641.5" x2="875.5" y2="641.5" stroke="#4a5059"/><polyline points="27.0,496.7 29.1,496.4 31.2,496.0 33.3,495.3 35.4,494.9 37.5,494.7 39.5,494.2 41.6,493.8 43.7,493.2 45.8,492.9 47.9,492.5 50.0,492.0 52.0,491.6 54.0,491.0 56.0,490.7 58.0,490.2 60.0,489.9 62.0,489.5 64.0,489.1 66.0,488.5 68.0,488.1 70.0,487.6 72.0,487.1 74.0,486.7 76.0,486.4 78.0,485.9 80.0,485.5 82.0,485.2 84.0,484.6 86.0,484.2 88.0,484.1 90.0,484.0 92.0,483.8 94.0,483.8 96.0,483.7 98.0,483.7 100.0,483.8 102.0,483.6 104.0,483.4 106.0,483.5 108.0,483.4 110.0,483.3 112.0,483.3 114.0,483.1 116.1,483.3 118.1,483.4 120.2,483.3 122.3,483.6 124.3,483.7 126.4,483.6 128.5,483.8 130.5,483.9 132.6,483.9 134.7,484.0 136.7,484.1 138.8,484.3 140.9,484.3 142.9,484.5 145.0,484.5 147.1,484.6 149.2,484.8 151.2,484.9 153.3,484.9 155.4,485.0 157.5,485.2 159.5,485.3 161.6,485.3 163.7,485.3 165.8,485.4 167.8,485.7 169.9,485.6 172.0,485.8 174.0,486.1 176.0,486.2 178.0,486.6 180.0,486.6 182.0,487.0 184.0,487.2 186.0,487.4 188.0,487.6 190.0,487.8 192.0,488.0 194.0,488.2 196.0,488.4 198.0,488.7 200.0,488.9 202.0,489.2 204.0,489.4 206.0,489.4 208.0,489.8 210.0,490.0 212.0,490.3 214.0,490.3 216.0,490.7 218.0,490.7 220.0,491.0 222.1,491.4 224.2,491.6 226.2,492.0 228.3,492.5 230.4,492.6 232.5,493.1 234.5,493.5 236.6,493.7 238.7,494.0 240.8,494.6 242.8,494.8 244.9,495.2 247.0,495.5 249.1,495.6 251.2,496.0 253.3,496.2 255.4,496.6 257.5,496.7 259.5,497.3 261.6,497.3 263.7,497.8 265.8,497.8 267.9,498.2 270.0,498.5 272.0,498.9 274.0,499.1 276.0,499.4 278.0,499.9 280.0,500.1 282.0,500.4 284.0,501.0 286.0,501.1 288.0,501.4 290.0,501.8 292.0,502.2 294.0,502.5 296.1,502.1 298.3,501.5 300.4,501.0 302.6,500.3 304.7,500.2 306.9,500.1 309.0,499.4 311.2,500.4 313.3,501.4 315.5,502.1 317.7,503.1 319.8,503.8 322.0,504.4 324.1,504.2 326.2,503.7 328.3,503.9 330.4,503.4 332.6,503.0 334.7,503.1 336.8,503.3 338.9,502.4 341.0,502.5 343.2,503.4 345.3,504.0 347.5,504.8 349.7,505.3 351.8,506.8 354.0,507.2 356.3,506.9 358.7,507.1 361.0,507.0 363.0,507.7 365.0,508.2 367.0,509.6 369.0,510.1 371.0,511.2 373.5,510.6 376.0,510.7 378.0,511.1 380.0,512.1 382.0,513.2 384.2,512.1 386.3,511.8 388.5,510.9 390.6,511.9 392.7,513.3 394.8,514.2 396.9,515.2 399.0,515.7 401.3,516.0 403.7,516.7 406.0,517.2 408.0,515.5 410.0,514.2 412.5,515.4 415.1,516.5 417.6,517.4 420.5,516.8 423.3,515.6 425.6,517.5 428.0,519.0 430.9,520.1 433.8,521.6 436.1,520.2 438.4,518.9 442.2,523.3 446.0,521.5 448.8,522.6 451.6,523.7 454.0,524.8 456.3,526.9 459.0,524.7 461.9,526.1 464.7,528.3 467.0,529.1 469.4,530.0 471.4,527.9 473.5,526.5 475.6,529.1 477.8,531.4 480.0,531.4 482.2,531.5 484.4,532.1 486.9,533.1 489.4,534.5 491.9,536.0 495.7,534.7 498.0,536.1 500.4,538.0 502.7,538.5 505.0,538.9 507.4,538.4 509.7,537.9 512.0,539.2 514.4,540.8 516.8,541.4 519.1,541.5 521.4,542.5 523.8,542.6 526.3,543.6 528.8,544.0 531.3,544.4 535.0,545.5 537.2,544.1 539.4,542.9 541.6,541.6 543.7,543.1 545.8,544.0 547.9,545.7 550.0,547.2 552.9,548.9 555.7,550.6 558.5,549.7 561.3,549.5 564.1,548.1 567.0,547.5 569.5,549.1 572.0,550.0 574.5,551.4 577.2,551.0 580.0,550.6 582.4,552.8 584.8,554.2 586.8,555.8 588.9,556.9 590.9,559.0 593.0,559.8 595.0,561.4 597.2,560.7 599.5,561.1 601.7,560.8 604.5,561.4 607.3,562.7 609.8,562.7 612.3,563.3 614.8,563.2 617.6,566.6 620.4,567.9 623.2,568.9 625.4,569.1 627.6,570.2 629.8,570.9 632.0,571.7 634.2,572.1 636.4,573.1 638.8,573.9 641.1,574.3 643.4,575.2 645.8,576.2 648.1,577.2 650.4,578.7 652.7,579.0 655.0,580.5 657.0,581.8 659.1,582.3 661.1,583.8 663.2,584.7 665.2,585.8 667.3,587.1 669.4,587.8 671.4,589.0 673.5,590.4 675.7,592.1 677.9,593.8 680.0,595.9 682.5,595.6 685.0,594.8 687.5,594.0 689.6,596.1 691.8,597.6 693.9,598.7 696.1,601.0 698.2,602.8 700.4,604.6 702.5,606.0 704.7,609.0 707.0,611.8 709.2,614.9 711.5,618.4 713.7,621.0 716.0,621.3 718.2,622.2 720.5,622.8 722.7,623.9 725.0,624.0 727.2,625.5 729.5,626.7 731.7,627.7 734.0,628.2 736.2,629.5 738.5,629.4 740.7,629.9 743.0,629.9 745.2,630.3 747.5,630.6 749.7,631.1 752.0,631.7 754.2,631.5 756.5,632.1 758.7,632.0 760.8,631.9 762.9,632.0 765.0,632.3 767.1,632.0 769.1,632.1 771.2,632.0 773.3,632.1 775.4,632.4 777.5,632.3 779.6,632.3 781.7,632.0 783.7,631.6 785.8,631.4 787.9,631.2 790.0,631.2 792.0,631.0 794.1,630.7 796.2,630.5 798.3,630.1 800.4,629.6 802.5,629.3 804.6,629.1 806.6,628.7 808.7,628.0 810.8,627.8 812.9,627.5 815.0,627.0 817.1,626.2 819.2,625.8 821.2,625.0 823.3,624.4 825.4,623.6 827.5,623.2 829.5,622.4 831.6,621.7 833.7,621.0 835.8,620.0 837.9,619.3 839.9,618.3 842.0,617.7 844.1,617.0 846.2,615.9 848.2,615.2 850.3,614.3 852.4,613.5 854.8,612.8 857.1,612.3 859.4,611.8 861.8,611.0 864.6,612.1 867.4,613.0 869.0,616.0" fill="none" stroke="#e6e6e6" stroke-width="1.4" stroke-linejoin="round"/><polyline points="27.0,499.8 29.1,499.3 31.2,498.9 33.3,498.4 35.4,498.0 37.5,497.5 39.5,496.9 41.6,496.4 43.7,496.2 45.8,495.6 47.9,495.1 50.0,494.7 52.0,494.4 54.0,493.8 56.0,493.4 58.0,492.8 60.0,492.4 62.0,491.8 64.0,491.5 66.0,491.1 68.0,490.5 70.0,490.1 72.0,489.6 74.0,489.0 76.0,488.7 78.0,488.2 80.0,487.6 82.0,487.1 84.0,486.9 86.0,486.3 88.0,486.2 90.0,486.3 92.0,486.3 94.0,486.2 96.0,486.2 98.0,486.0 100.0,486.0 102.0,485.9 104.0,486.0 106.0,485.9 108.0,485.6 110.0,485.6 112.0,485.6 114.0,485.6 116.1,485.8 118.1,485.7 120.2,485.8 122.3,485.8 124.3,485.9 126.4,486.0 128.5,486.0 130.5,486.2 132.6,486.2 134.7,486.4 136.7,486.4 138.8,486.5 140.9,486.6 142.9,486.7 145.0,486.6 147.1,486.9 149.2,487.1 151.2,487.5 153.3,487.8 155.4,488.1 157.5,488.3 159.5,488.6 161.6,488.7 163.7,489.2 165.8,489.4 167.8,489.6 169.9,489.8 172.0,490.2 174.0,490.2 176.0,490.2 178.0,489.8 180.0,490.0 182.0,489.8 184.0,489.6 186.0,489.6 188.0,489.6 190.0,489.6 192.0,489.3 194.0,489.4 196.0,489.1 198.0,489.2 200.0,489.1 202.0,489.1 204.0,489.3 206.0,489.4 208.0,489.4 210.0,489.6 212.0,489.5 214.0,489.5 216.0,489.7 218.0,489.6 220.0,489.8 222.1,490.1 224.2,490.5 226.2,490.9 228.3,491.2 230.4,491.5 232.5,492.1 234.5,492.3 236.6,492.9 238.7,493.2 240.8,493.4 242.8,493.8 244.9,494.2 247.0,494.6 249.1,494.9 251.2,495.2 253.3,495.6 255.4,495.9 257.5,496.3 259.5,496.5 261.6,496.8 263.7,497.2 265.8,497.4 267.9,497.7 270.0,498.1 272.0,498.7 274.0,498.9 276.0,499.4 278.0,499.6 280.0,500.1 282.0,500.6 284.0,500.8 286.0,501.4 288.0,501.9 290.0,502.1 292.0,502.7 294.0,503.1 296.1,502.6 298.3,502.3 300.4,501.7 302.6,501.6 304.7,501.3 306.9,500.2 309.0,500.2 311.2,500.7 313.3,502.1 315.5,503.2 317.7,503.4 319.8,504.4 322.0,505.3 324.1,505.2 326.2,504.7 328.3,504.6 330.4,504.3 332.6,504.2 334.7,504.2 336.8,503.7 338.9,503.6 341.0,503.5 343.2,504.5 345.3,504.6 347.5,505.9 349.7,506.8 351.8,507.2 354.0,508.2 356.3,507.9 358.7,508.3 361.0,508.0 363.0,508.6 365.0,509.5 367.0,510.5 369.0,511.6 371.0,512.3 373.5,511.7 376.0,511.8 378.0,512.5 380.0,513.4 382.0,514.4 384.2,513.9 386.3,512.8 388.5,512.1 390.6,513.4 392.7,513.7 394.8,514.8 396.9,516.1 399.0,516.9 401.3,517.8 403.7,517.9 406.0,518.5 408.0,516.7 410.0,515.5 412.5,516.2 415.1,517.7 417.6,518.7 420.5,517.5 423.3,516.9 425.6,518.9 428.0,520.3 430.9,521.9 433.8,522.8 436.1,521.2 438.4,520.2 442.2,524.6 446.0,522.7 448.8,523.6 451.6,524.9 454.0,526.8 456.3,528.1 459.0,525.9 461.9,527.8 464.7,529.5 467.0,530.6 469.4,531.1 471.4,529.3 473.5,527.7 475.6,529.7 477.8,532.5 480.0,532.6 482.2,533.3 484.4,533.3 486.9,534.3 489.4,535.6 491.9,537.1 495.7,535.8 498.0,537.4 500.4,539.1 502.7,539.5 505.0,540.0 507.4,539.4 509.7,539.0 512.0,540.8 514.4,541.9 516.8,542.0 519.1,542.3 521.4,543.6 523.8,543.6 526.3,544.5 528.8,545.2 531.3,545.4 535.0,546.4 537.2,545.1 539.4,544.3 541.6,542.6 543.7,544.3 545.8,545.1 547.9,546.9 550.0,548.1 552.9,550.1 555.7,551.5 558.5,551.0 561.3,550.3 564.1,549.4 567.0,548.4 569.5,549.5 572.0,550.8 574.5,552.2 577.2,551.6 580.0,551.5 582.4,552.9 584.8,555.1 586.8,556.3 588.9,557.2 590.9,558.8 593.0,559.2 595.0,560.8 597.2,560.5 599.5,559.6 601.7,558.8 604.5,560.1 607.3,560.6 609.8,561.1 612.3,561.3 614.8,561.1 617.6,564.6 620.4,565.7 623.2,566.8 625.4,567.0 627.6,568.4 629.8,568.5 632.0,569.3 634.2,570.3 636.4,570.9 638.8,571.7 641.1,572.3 643.4,573.6 645.8,574.0 648.1,575.1 650.4,575.9 652.7,576.9 655.0,578.2 657.0,579.6 659.1,580.3 661.1,581.6 663.2,582.3 665.2,583.2 667.3,584.5 669.4,585.8 671.4,586.6 673.5,588.0 675.7,590.3 677.9,592.2 680.0,593.5 682.5,593.1 685.0,592.5 687.5,591.5 689.6,592.8 691.8,595.0 693.9,597.0 696.1,597.9 698.2,599.8 700.4,601.5 702.5,603.5 704.7,606.5 707.0,609.3 709.2,612.4 711.5,615.8 713.7,618.4 716.0,618.4 718.2,619.1 720.5,619.7 722.7,620.3 725.0,621.4 727.2,621.9 729.5,624.1 731.7,625.1 734.0,625.2 736.2,626.8 738.5,627.0 740.7,627.0 743.0,627.2 745.2,627.5 747.5,627.9 749.7,628.3 752.0,628.5 754.2,628.5 756.5,628.6 758.7,629.2 760.8,629.3 762.9,629.3 765.0,629.5 767.1,629.7 769.1,629.6 771.2,629.6 773.3,629.7 775.4,629.9 777.5,630.0 779.6,630.0 781.7,630.0 783.7,629.8 785.8,629.9 787.9,629.7 790.0,629.6 792.0,629.5 794.1,629.5 796.2,629.4 798.3,629.2 800.4,628.7 802.5,628.5 804.6,628.0 806.6,627.6 808.7,627.3 810.8,627.1 812.9,626.5 815.0,626.3 817.1,625.6 819.2,624.9 821.2,624.5 823.3,623.8 825.4,622.9 827.5,622.5 829.5,621.8 831.6,620.9 833.7,620.4 835.8,619.5 837.9,618.6 839.9,618.0 842.0,617.1 844.1,616.4 846.2,615.5 848.2,614.7 850.3,613.9 852.4,613.0 854.8,612.4 857.1,611.6 859.4,611.2 861.8,610.6 863.9,613.1 866.0,616.0 869.0,622.0" fill="none" stroke="#2a82f0" stroke-width="1.5" stroke-linejoin="round"/></svg><div class="a" style="left:0;top:0;font-size:11.5px;color:#777c84;line-height:12px"><span class="a" style="left:6.5px;top:651px;width:80px;text-align:center">40</span><span class="a" style="left:51.8px;top:651px;width:80px;text-align:center">100</span><span class="a" style="left:102.5px;top:651px;width:80px;text-align:center">200</span><span class="a" style="left:166.5px;top:651px;width:80px;text-align:center">400</span><span class="a" style="left:209.5px;top:651px;width:80px;text-align:center">600</span><span class="a" style="left:266.5px;top:651px;width:80px;text-align:center">1k</span><span class="a" style="left:347.5px;top:651px;width:80px;text-align:center">2k</span><span class="a" style="left:431.5px;top:651px;width:80px;text-align:center">4k</span><span class="a" style="left:481.5px;top:651px;width:80px;text-align:center">6k</span><span class="a" style="left:545.5px;top:651px;width:80px;text-align:center">10k</span><span class="a" style="left:631.5px;top:651px;width:80px;text-align:center">20k</span><span class="a" style="left:718.0px;top:651px;width:80px;text-align:center">40k</span><span class="a" style="left:769.5px;top:651px;width:80px;text-align:center">60k</span><span class="a" style="left:820.0px;top:651px;width:80px;text-align:center">Hz</span><span class="a" style="left:875px;top:443.0px">dB</span><span class="a" style="left:875px;top:464.5px">20</span><span class="a" style="left:875px;top:497.5px">40</span><span class="a" style="left:875px;top:530.5px">60</span><span class="a" style="left:875px;top:562.5px">80</span><span class="a" style="left:875px;top:594.5px">100</span><span class="a" style="left:875px;top:622.5px">120</span></div>

<!-- waveform statistics panel -->
<div class="a ptitle" style="left:918px;top:317px;width:354px;height:30px;border-radius:4px 4px 0 0"><span class="a" style="left:9px;top:8px">Waveform Statistics</span>
<div class="a" style="left:334px;top:7px;width:19px;height:19px;background:#dadada;color:#f4f4f4;font-size:11px;text-align:center;line-height:19px">×</div></div>
<div class="a ptool" style="left:918px;top:347px;width:354px;height:40px"></div>
<div class="a pbody" style="left:918px;top:387px;width:354px;height:301px;border-right:1px solid #454a51;border-bottom:1px solid #454a51;border-radius:0 0 4px 0"></div>
<svg class="a" style="left:918px;top:347px" width="354" height="40" viewBox="918 347 354 40">
<g fill="#aeb2b8">
<rect x="928" y="357" width="2" height="8"/><rect x="933" y="358" width="2" height="7"/><rect x="938" y="360" width="2" height="5"/><rect x="943" y="362" width="2" height="3"/><rect x="928" y="364" width="20" height="1.1"/>
<rect x="929" y="370.8" width="1.2" height="3.1"/><rect x="933" y="369.7" width="1.2" height="5.3"/><rect x="937" y="368" width="1.2" height="9"/><rect x="941" y="369.7" width="1.2" height="5.3"/><rect x="945" y="370.8" width="1.2" height="3.1"/>
</g>
<g fill="none" stroke="#c0c3c8" stroke-width="1.2">
<circle cx="1252" cy="367" r="9.8"/>
<path d="M1249.4 363.6 a2.8 2.8 0 1 1 4.2 2.4 c-0.7 0.4 -1.1 0.9 -1.1 1.7 v0.9"/>
</g>
<rect x="1251.3" y="371.3" width="1.6" height="1.6" fill="#c0c3c8"/>
</svg>
<div class="a" style="left:1114px;top:393px;color:#b9bcc1;font-size:12px">L</div>
<div class="a" style="left:1200px;top:393px;color:#b9bcc1;font-size:12px">R</div>
<div class="lbl" style="left:880px;width:201px;top:410px">True peak level</div><div class="box" style="left:1087px;top:408px;width:65px">-0,29 dB</div><div class="box" style="left:1173px;top:408px;width:65px">-0,29 dB</div><svg class="a" style="left:1154px;top:410px" width="9" height="12" viewBox="0 0 9 12"><path d="M4.5 11 C3.3 9 1 7 1 4.6 A3.5 3.5 0 0 1 8 4.6 C8 7 5.7 9 4.5 11Z" fill="#ebb03c"/></svg><svg class="a" style="left:1240px;top:410px" width="9" height="12" viewBox="0 0 9 12"><path d="M4.5 11 C3.3 9 1 7 1 4.6 A3.5 3.5 0 0 1 8 4.6 C8 7 5.7 9 4.5 11Z" fill="#ebb03c"/></svg><div class="lbl" style="left:880px;width:201px;top:432px">Sample peak level</div><div class="box" style="left:1087px;top:430px;width:65px">-0,30 dB</div><div class="box" style="left:1173px;top:430px;width:65px">-0,30 dB</div><svg class="a" style="left:1154px;top:432px" width="9" height="12" viewBox="0 0 9 12"><path d="M4.5 11 C3.3 9 1 7 1 4.6 A3.5 3.5 0 0 1 8 4.6 C8 7 5.7 9 4.5 11Z" fill="#ebb03c"/></svg><svg class="a" style="left:1240px;top:432px" width="9" height="12" viewBox="0 0 9 12"><path d="M4.5 11 C3.3 9 1 7 1 4.6 A3.5 3.5 0 0 1 8 4.6 C8 7 5.7 9 4.5 11Z" fill="#ebb03c"/></svg><div class="lbl" style="left:880px;width:201px;top:454px">Max. RMS level</div><div class="box" style="left:1087px;top:452px;width:65px">-7,52 dB</div><div class="box" style="left:1173px;top:452px;width:65px">-7,69 dB</div><svg class="a" style="left:1154px;top:454px" width="9" height="12" viewBox="0 0 9 12"><path d="M4.5 11 C3.3 9 1 7 1 4.6 A3.5 3.5 0 0 1 8 4.6 C8 7 5.7 9 4.5 11Z" fill="#ebb03c"/></svg><svg class="a" style="left:1240px;top:454px" width="9" height="12" viewBox="0 0 9 12"><path d="M4.5 11 C3.3 9 1 7 1 4.6 A3.5 3.5 0 0 1 8 4.6 C8 7 5.7 9 4.5 11Z" fill="#ebb03c"/></svg><div class="lbl" style="left:880px;width:201px;top:476px">Min. RMS level</div><div class="box" style="left:1087px;top:474px;width:65px">-63,00 dB</div><div class="box" style="left:1173px;top:474px;width:65px">-65,00 dB</div><svg class="a" style="left:1154px;top:476px" width="9" height="12" viewBox="0 0 9 12"><path d="M4.5 11 C3.3 9 1 7 1 4.6 A3.5 3.5 0 0 1 8 4.6 C8 7 5.7 9 4.5 11Z" fill="#ebb03c"/></svg><svg class="a" style="left:1240px;top:476px" width="9" height="12" viewBox="0 0 9 12"><path d="M4.5 11 C3.3 9 1 7 1 4.6 A3.5 3.5 0 0 1 8 4.6 C8 7 5.7 9 4.5 11Z" fill="#ebb03c"/></svg><div class="lbl" style="left:880px;width:201px;top:498px">Total RMS level</div><div class="box" style="left:1087px;top:496px;width:65px">-15,29 dB</div><div class="box" style="left:1173px;top:496px;width:65px">-15,96 dB</div><div class="lbl" style="left:880px;width:201px;top:520px">Possibly clipped samples</div><div class="box" style="left:1087px;top:518px;width:65px">0</div><div class="box" style="left:1173px;top:518px;width:65px">0</div><svg class="a" style="left:1154px;top:520px" width="9" height="12" viewBox="0 0 9 12"><path d="M4.5 11 C3.3 9 1 7 1 4.6 A3.5 3.5 0 0 1 8 4.6 C8 7 5.7 9 4.5 11Z" fill="#8f7035"/></svg><svg class="a" style="left:1240px;top:520px" width="9" height="12" viewBox="0 0 9 12"><path d="M4.5 11 C3.3 9 1 7 1 4.6 A3.5 3.5 0 0 1 8 4.6 C8 7 5.7 9 4.5 11Z" fill="#8f7035"/></svg><div class="lbl" style="left:880px;width:201px;top:542px">DC offset</div><div class="box" style="left:1087px;top:540px;width:65px">+0,000%</div><div class="box" style="left:1173px;top:540px;width:65px">0,000%</div><div class="lbl" style="left:900px;width:233px;top:570px">Max. momentary loudness</div><div class="box" style="left:1139px;top:568px;width:69px">-9,6 LUFS</div><svg class="a" style="left:1210px;top:570px" width="9" height="12" viewBox="0 0 9 12"><path d="M4.5 11 C3.3 9 1 7 1 4.6 A3.5 3.5 0 0 1 8 4.6 C8 7 5.7 9 4.5 11Z" fill="#ebb03c"/></svg><div class="lbl" style="left:900px;width:233px;top:592px">Max. short-term loudness</div><div class="box" style="left:1139px;top:590px;width:69px">-12,3 LUFS</div><svg class="a" style="left:1210px;top:592px" width="9" height="12" viewBox="0 0 9 12"><path d="M4.5 11 C3.3 9 1 7 1 4.6 A3.5 3.5 0 0 1 8 4.6 C8 7 5.7 9 4.5 11Z" fill="#ebb03c"/></svg><div class="lbl" style="left:900px;width:233px;top:614px">Integrated BS.1770-2/3/4 loudness</div><div class="box" style="left:1139px;top:612px;width:69px">-15,5 LUFS</div><div class="lbl" style="left:900px;width:233px;top:636px">Loudness range (LRA)</div><div class="box" style="left:1139px;top:634px;width:69px">5,5 LU</div>

<!-- status bar -->
<div class="a" style="left:5px;top:688px;width:1080px;height:27px;background:linear-gradient(#1d2127,#22262d);border-radius:0 0 4px 4px"></div>
<div class="a" style="left:1090px;top:688px;width:185px;height:27px;background:linear-gradient(#1d2127,#22262d);border-radius:0 0 4px 4px"></div>
<div class="a" style="left:15px;top:690px;color:#c4c7cc;font-size:12px">File opened successfully (14,3 s)</div>
<svg class="a" style="left:0;top:688px" width="1280" height="26" viewBox="0 688 1280 26">
<g stroke="#0f1114" stroke-width="1"><line x1="343.5" y1="688" x2="343.5" y2="706"/><line x1="547.5" y1="688" x2="547.5" y2="708"/><line x1="833.5" y1="688" x2="833.5" y2="708"/><line x1="994.5" y1="688" x2="994.5" y2="708"/></g>
<g stroke="#5d636b" stroke-width="1"><line x1="355" y1="697.5" x2="395" y2="697.5"/><line x1="494" y1="697.5" x2="536" y2="697.5"/>
<line x1="557" y1="697.5" x2="664" y2="697.5"/><line x1="718" y1="697.5" x2="824" y2="697.5"/>
<line x1="844" y1="697.5" x2="905" y2="697.5"/><line x1="926" y1="697.5" x2="981" y2="697.5"/></g>
</svg>
<div class="a" style="left:399px;top:690px;color:#c4c7cc;font-size:11.3px">24-bit | 192000 Hz</div>
<div class="a" style="left:669px;top:690px;color:#c4c7cc;font-size:11.5px">h:m:s.ms</div>
<div class="a" style="left:909px;top:690px;color:#c4c7cc;font-size:11.5px">Hz</div>
</body></html>
